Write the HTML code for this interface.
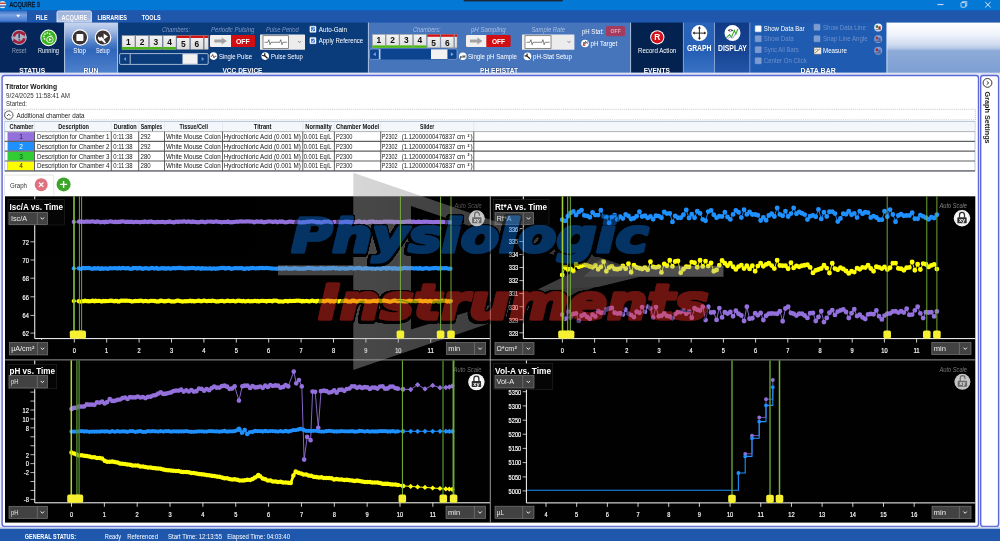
<!DOCTYPE html>
<html lang="en"><head><meta charset="utf-8"><title>ACQUIRE 3</title>
<style>
html,body{margin:0;padding:0;background:#fff;}
body{width:1000px;height:541px;overflow:hidden;font-family:'Liberation Sans', sans-serif;}
svg{display:block;font-family:"Liberation Sans",sans-serif;will-change:transform;opacity:0.9999;}
text{white-space:pre;}
</style></head><body>
<svg width="1000" height="541" viewBox="0 0 1000 541">
<defs>
<linearGradient id="gRun" x1="0" y1="0" x2="0" y2="1">
 <stop offset="0" stop-color="#c9d6ef"/><stop offset="0.18" stop-color="#9fb7e1"/>
 <stop offset="0.42" stop-color="#4b7bc6"/><stop offset="0.55" stop-color="#2f66bb"/>
 <stop offset="1" stop-color="#4f81cc"/></linearGradient>
<linearGradient id="gFill" x1="0" y1="0" x2="0" y2="1">
 <stop offset="0" stop-color="#ffffff"/><stop offset="0.25" stop-color="#eef2fa"/>
 <stop offset="0.44" stop-color="#cfdbee"/><stop offset="0.51" stop-color="#b6c9e6"/><stop offset="0.56" stop-color="#8fabd8"/>
 <stop offset="1" stop-color="#7c9fd3"/></linearGradient>
<linearGradient id="gGraph" x1="0" y1="0" x2="0" y2="1">
 <stop offset="0" stop-color="#2a64b9"/><stop offset="0.6" stop-color="#2560b6"/>
 <stop offset="1" stop-color="#3a72c4"/></linearGradient>
<linearGradient id="gDisp" x1="0" y1="0" x2="0" y2="1">
 <stop offset="0" stop-color="#113a86"/><stop offset="0.55" stop-color="#164392"/>
 <stop offset="1" stop-color="#2356a8"/></linearGradient>
<linearGradient id="gTab" x1="0" y1="0" x2="0" y2="1">
 <stop offset="0" stop-color="#a0b5dd"/><stop offset="0.6" stop-color="#a9bce1"/><stop offset="1" stop-color="#c9d6ef"/></linearGradient>
<linearGradient id="gQat" x1="0" y1="0" x2="0" y2="1">
 <stop offset="0" stop-color="#2f6cc5"/><stop offset="0.4" stop-color="#7aa2e2"/><stop offset="0.7" stop-color="#5b8bd8"/><stop offset="1" stop-color="#3f76cb"/></linearGradient>
<linearGradient id="gWm" x1="0" y1="0" x2="1" y2="0">
 <stop offset="0" stop-color="#a4a4a4"/><stop offset="0.3" stop-color="#969696"/><stop offset="1" stop-color="#6e6e6e"/></linearGradient>
<linearGradient id="gBtn" x1="0" y1="0" x2="0" y2="1">
 <stop offset="0" stop-color="#f4f4f4"/><stop offset="1" stop-color="#dcdcdc"/></linearGradient>
<filter id="fOl" x="-5%" y="-20%" width="110%" height="150%">
 <feMorphology in="SourceAlpha" operator="dilate" radius="1.9" result="d"/>
 <feGaussianBlur in="d" stdDeviation="0.5" result="g"/>
 <feComponentTransfer in="g" result="t"><feFuncA type="linear" slope="3" intercept="-0.6"/></feComponentTransfer>
 <feOffset in="t" dx="-0.6" dy="0.7" result="o"/>
 <feFlood flood-color="#000"/><feComposite in2="o" operator="in" result="b"/>
 <feMerge><feMergeNode in="b"/><feMergeNode in="SourceGraphic"/></feMerge></filter>
</defs>
<rect x="0.00" y="0.00" width="1000.00" height="11.00" fill="#0478d5" />
<rect x="463.70" y="0.00" width="99.00" height="1.40" fill="#1c2733" />
<rect x="0.00" y="10.20" width="1000.00" height="14.00" fill="#1f57ad" />
<circle cx="2.50" cy="4.60" r="3.60" fill="#e8e8ee"/>
<rect x="-1.00" y="2.60" width="7.00" height="1.30" fill="#c0392b" />
<rect x="-1.00" y="5.40" width="7.00" height="1.30" fill="#2c4fa0" />
<text x="9.60" y="7.29" font-size="7.2" fill="#0a1420" textLength="30.40" lengthAdjust="spacingAndGlyphs" stroke="#0a1420" stroke-width="0.3">ACQUIRE 3</text>
<line x1="937.50" y1="4.60" x2="943.50" y2="4.60" stroke="#e8f0fa" stroke-width="0.9" />
<rect x="961.00" y="2.60" width="4.60" height="4.60" fill="none" rx="0.6" stroke="#e8f0fa" stroke-width="0.8" />
<path d="M962.4 2.6 V1.6 H966.8 V6 H965.6" fill="none" stroke="#e8f0fa" stroke-width="0.7" />
<path d="M985.2 2 L990.6 7.4 M990.6 2 L985.2 7.4" fill="none" stroke="#f4f8fd" stroke-width="0.9" />
<rect x="0.00" y="10.60" width="27.00" height="11.00" fill="url(#gQat)" />
<path d="M16.2 14.8 H20.2 L18.2 17.4 Z" fill="#fff" />
<path d="M57 22.6 V12.6 Q57 11 58.6 11 H89.8 Q91.4 11 91.4 12.6 V22.6 Z" fill="url(#gTab)" stroke="#e6ecf9" stroke-width="0.9" />
<text x="35.75" y="20.02" font-size="7" fill="#fff" font-weight="700" textLength="11.75" lengthAdjust="spacingAndGlyphs" >FILE</text>
<text x="61.50" y="20.02" font-size="7" fill="#fff" font-weight="700" textLength="25.80" lengthAdjust="spacingAndGlyphs" stroke="#8fa3cc" stroke-width="0.5" paint-order="stroke">ACQUIRE</text>
<text x="97.50" y="20.02" font-size="7" fill="#fff" font-weight="700" textLength="29.50" lengthAdjust="spacingAndGlyphs" >LIBRARIES</text>
<text x="141.75" y="20.02" font-size="7" fill="#fff" font-weight="700" textLength="19.00" lengthAdjust="spacingAndGlyphs" >TOOLS</text>
<rect x="0.00" y="22.60" width="1000.00" height="50.20" fill="#1f57ad" />
<rect x="0.00" y="22.60" width="64.60" height="50.20" fill="#04265a" />
<rect x="64.60" y="22.60" width="53.00" height="50.20" fill="url(#gRun)" />
<rect x="117.60" y="22.60" width="250.60" height="50.20" fill="#0a3b7b" />
<rect x="368.20" y="22.60" width="262.50" height="50.20" fill="#4675bb" />
<rect x="630.70" y="22.60" width="52.60" height="50.20" fill="#04224f" />
<rect x="683.30" y="22.60" width="31.20" height="50.20" fill="url(#gGraph)" />
<rect x="714.50" y="22.60" width="35.30" height="50.20" fill="url(#gDisp)" />
<rect x="749.80" y="22.60" width="137.00" height="50.20" fill="#1f5bb0" />
<rect x="886.80" y="22.60" width="113.20" height="50.20" fill="url(#gFill)" />
<line x1="64.60" y1="22.60" x2="64.60" y2="72.80" stroke="#dfe8f7" stroke-width="0.8" />
<line x1="117.60" y1="22.60" x2="117.60" y2="72.80" stroke="#dfe8f7" stroke-width="0.8" />
<line x1="368.40" y1="22.60" x2="368.40" y2="72.80" stroke="#cfdcf2" stroke-width="0.8" />
<line x1="630.60" y1="22.60" x2="630.60" y2="72.80" stroke="#cfdcf2" stroke-width="0.8" />
<line x1="683.40" y1="22.60" x2="683.40" y2="72.80" stroke="#9db6e0" stroke-width="0.8" />
<line x1="714.50" y1="22.60" x2="714.50" y2="72.80" stroke="#9db6e0" stroke-width="0.8" />
<line x1="749.80" y1="22.60" x2="749.80" y2="72.80" stroke="#8fa9d8" stroke-width="0.8" />
<line x1="886.90" y1="22.60" x2="886.90" y2="72.80" stroke="#e8eefa" stroke-width="0.8" />
<text x="19.30" y="72.76" font-size="7.4" fill="#fff" font-weight="700" textLength="25.80" lengthAdjust="spacingAndGlyphs" stroke="#0a1e4a" stroke-opacity="0.55" stroke-width="0.7" paint-order="stroke">STATUS</text>
<text x="83.60" y="72.76" font-size="7.4" fill="#fff" font-weight="700" textLength="14.80" lengthAdjust="spacingAndGlyphs" stroke="#0a1e4a" stroke-opacity="0.55" stroke-width="0.7" paint-order="stroke">RUN</text>
<text x="222.50" y="72.76" font-size="7.4" fill="#fff" font-weight="700" textLength="40.00" lengthAdjust="spacingAndGlyphs" stroke="#0a1e4a" stroke-opacity="0.55" stroke-width="0.7" paint-order="stroke">VCC DEVICE</text>
<text x="480.00" y="72.76" font-size="7.4" fill="#fff" font-weight="700" textLength="38.00" lengthAdjust="spacingAndGlyphs" stroke="#0a1e4a" stroke-opacity="0.55" stroke-width="0.7" paint-order="stroke">PH EPISTAT</text>
<text x="643.75" y="72.76" font-size="7.4" fill="#fff" font-weight="700" textLength="26.25" lengthAdjust="spacingAndGlyphs" stroke="#0a1e4a" stroke-opacity="0.55" stroke-width="0.7" paint-order="stroke">EVENTS</text>
<text x="800.50" y="72.76" font-size="7.4" fill="#fff" font-weight="700" textLength="35.25" lengthAdjust="spacingAndGlyphs" stroke="#0a1e4a" stroke-opacity="0.55" stroke-width="0.7" paint-order="stroke">DATA BAR</text>
<circle cx="19.10" cy="37.40" r="7.70" fill="#aab3c6"/>
<g fill="none" stroke="#a51c3a" stroke-width="2.6"><path d="M13.9 36.6 A5.3 5.3 0 0 1 23.6 34.6"/><path d="M24.3 38.2 A5.3 5.3 0 0 1 14.6 40.2"/></g>
<path d="M21.4 32.2 L25.6 32.6 L24.4 36.8 Z" fill="#a51c3a" />
<path d="M16.8 42.6 L12.6 42.2 L13.8 38 Z" fill="#a51c3a" />
<rect x="18.50" y="33.60" width="1.30" height="4.60" fill="#2a2f3d" />
<rect x="18.50" y="39.20" width="1.30" height="1.40" fill="#2a2f3d" />
<text x="12.00" y="53.25" font-size="6.8" fill="#98a2b6" textLength="14.20" lengthAdjust="spacingAndGlyphs" >Reset</text>
<circle cx="48.60" cy="37.90" r="8.30" fill="#ffffff"/>
<circle cx="48.60" cy="37.90" r="7.30" fill="#3bb31f"/>
<circle cx="47.4" cy="36.6" r="3.6" fill="none" stroke="#e9f6e4" stroke-width="1.5" stroke-dasharray="1.6 1"/>
<circle cx="50.00" cy="39.60" r="3.50" fill="#eaf6e6"/>
<circle cx="50.00" cy="39.60" r="2.70" fill="#3bb31f"/>
<path d="M49 38 L51.8 39.6 L49 41.2 Z" fill="#fff" />
<text x="38.00" y="52.95" font-size="6.8" fill="#f0f4fb" textLength="20.90" lengthAdjust="spacingAndGlyphs" >Running</text>
<circle cx="79.90" cy="37.50" r="8.30" fill="#ffffff"/>
<circle cx="79.90" cy="37.50" r="7.10" fill="#3b3333"/>
<rect x="76.40" y="34.00" width="7.00" height="7.00" fill="#fff" rx="0.8" />
<text x="73.30" y="53.15" font-size="6.8" fill="#fff" textLength="12.60" lengthAdjust="spacingAndGlyphs" >Stop</text>
<circle cx="103.00" cy="37.50" r="8.30" fill="#ffffff"/>
<circle cx="103.00" cy="37.50" r="7.10" fill="#3b3333"/>
<path d="M103.6 33.4 L108 36.4 L103.6 39.4 Z" fill="#fff" />
<path d="M98.4 36.2 L100 37.8 L101.4 36.6 L103.4 38.8 L106 42.4 L104.8 43.4 L101.6 40.4 L99.6 41 L97.8 38.6 Z" fill="#fff" />
<text x="95.90" y="53.15" font-size="6.8" fill="#fff" textLength="13.80" lengthAdjust="spacingAndGlyphs" >Setup</text>
<text x="161.90" y="31.52" font-size="7" fill="#7f97c4" font-style="italic" textLength="28.10" lengthAdjust="spacingAndGlyphs" >Chambers:</text>
<rect x="122.00" y="35.60" width="12.90" height="13.80" fill="url(#gBtn)" stroke="#9a9a9a" stroke-width="0.5" />
<rect x="122.00" y="47.00" width="12.90" height="2.40" fill="#4cb814" />
<text x="128.45" y="44.52" font-size="8.4" fill="#111" font-weight="700" text-anchor="middle" >1</text>
<rect x="135.70" y="35.60" width="12.90" height="13.80" fill="url(#gBtn)" stroke="#9a9a9a" stroke-width="0.5" />
<rect x="135.70" y="47.00" width="12.90" height="2.40" fill="#4cb814" />
<text x="142.15" y="44.52" font-size="8.4" fill="#111" font-weight="700" text-anchor="middle" >2</text>
<rect x="149.40" y="35.60" width="12.90" height="13.80" fill="url(#gBtn)" stroke="#9a9a9a" stroke-width="0.5" />
<rect x="149.40" y="47.00" width="12.90" height="2.40" fill="#4cb814" />
<text x="155.85" y="44.52" font-size="8.4" fill="#111" font-weight="700" text-anchor="middle" >3</text>
<rect x="163.10" y="35.60" width="12.90" height="13.80" fill="url(#gBtn)" stroke="#9a9a9a" stroke-width="0.5" />
<rect x="163.10" y="47.00" width="12.90" height="2.40" fill="#4cb814" />
<text x="169.55" y="44.52" font-size="8.4" fill="#111" font-weight="700" text-anchor="middle" >4</text>
<rect x="176.80" y="35.60" width="12.90" height="13.80" fill="url(#gBtn)" stroke="#9a9a9a" stroke-width="0.5" />
<rect x="176.80" y="35.60" width="12.90" height="2.40" fill="#d01414" />
<text x="183.25" y="47.12" font-size="8.4" fill="#111" font-weight="700" text-anchor="middle" >5</text>
<rect x="190.50" y="35.60" width="12.90" height="13.80" fill="url(#gBtn)" stroke="#9a9a9a" stroke-width="0.5" />
<rect x="190.50" y="35.60" width="12.90" height="2.40" fill="#d01414" />
<text x="196.95" y="47.12" font-size="8.4" fill="#111" font-weight="700" text-anchor="middle" >6</text>
<rect x="204.20" y="35.60" width="4.00" height="13.80" fill="url(#gBtn)" stroke="#9a9a9a" stroke-width="0.5" />
<rect x="204.20" y="35.60" width="4.00" height="2.40" fill="#d01414" />
<rect x="119.60" y="53.60" width="88.60" height="10.80" fill="#0a3b7b" rx="1.2" stroke="#e8eef8" stroke-width="0.7" />
<rect x="182.50" y="54.10" width="15.10" height="9.80" fill="#f2f2f2" />
<line x1="130.20" y1="54.20" x2="130.20" y2="63.80" stroke="#dfe6f3" stroke-width="0.8" />
<path d="M126.10 57.10 L123.50 59.00 L126.10 60.90 Z" fill="#6f93d6" />
<path d="M201.70 57.10 L204.30 59.00 L201.70 60.90 Z" fill="#6f93d6" />
<text x="211.00" y="31.52" font-size="7" fill="#7f97c4" font-style="italic" textLength="43.40" lengthAdjust="spacingAndGlyphs" >Periodic Pulsing</text>
<rect x="210.00" y="35.00" width="45.00" height="12.00" fill="#d10f12" rx="1.3" />
<path d="M211.30 35 H231 V47 H211.30 Q210 47 210 45.7 V36.3 Q210 35 211.30 35 Z" fill="#f0f0f0" />
<path d="M214.30 39.50 H221.70 V37.40 L226.90 41.00 L221.70 44.60 V42.50 H214.30 Z" fill="#a3a3a3" />
<text x="236.00" y="43.88" font-size="8" fill="#fff" font-weight="700" textLength="13.75" lengthAdjust="spacingAndGlyphs" >OFF</text>
<text x="266.00" y="31.52" font-size="7" fill="#7f97c4" font-style="italic" textLength="32.75" lengthAdjust="spacingAndGlyphs" >Pulse Period</text>
<rect x="260.00" y="34.40" width="45.00" height="15.35" fill="#ececec" rx="0.6" />
<rect x="263.00" y="35.70" width="25.60" height="12.75" fill="#ffffff" stroke="#5a5a5a" stroke-width="0.7" />
<path d="M264.50 42.28 h3.33 l1 -2.6 l1.2 5 l1 -2.4 h8.70 l1 -2.6 l1.2 5 l1 -2.4 H287.10" fill="none" stroke="#333" stroke-width="0.6" />
<path d="M298.10 41.08 L299.60 42.68 L301.10 41.08" fill="none" stroke="#666" stroke-width="0.7" />
<circle cx="213.50" cy="56.10" r="3.80" fill="#ffffff"/>
<path d="M210.70 56.30 h1.1 l0.9 -1.8 l1.3 3.4 l0.9 -1.6 h1.4" fill="none" stroke="#222" stroke-width="0.7" />
<text x="218.90" y="58.68" font-size="6.9" fill="#fff" textLength="33.10" lengthAdjust="spacingAndGlyphs" >Single Pulse</text>
<circle cx="265.20" cy="56.10" r="3.80" fill="#ffffff"/>
<path d="M264.70 55.80 L267.20 58.00 M264.70 55.80 L262.70 55.50 M264.70 55.80 L264.80 53.70" fill="none" stroke="#1e1e1e" stroke-width="1.25" stroke-linecap="round"/>
<text x="271.00" y="58.68" font-size="6.9" fill="#fff" textLength="31.75" lengthAdjust="spacingAndGlyphs" >Pulse Setup</text>
<rect x="309.90" y="26.20" width="6.10" height="6.10" fill="#fff" rx="0.5" stroke="#dfe6f5" stroke-width="0.5" />
<rect x="311.00" y="27.30" width="3.90" height="3.90" fill="#2f6fcf" />
<path d="M311.50 29.30 l1.1 1.2 l1.9 -2.6" fill="none" stroke="#fff" stroke-width="0.8" />
<text x="318.75" y="31.88" font-size="6.9" fill="#fff" textLength="28.25" lengthAdjust="spacingAndGlyphs" >Auto-Gain</text>
<rect x="309.90" y="37.60" width="6.10" height="6.10" fill="#fff" rx="0.5" stroke="#dfe6f5" stroke-width="0.5" />
<rect x="311.00" y="38.70" width="3.90" height="3.90" fill="#2f6fcf" />
<path d="M311.50 40.70 l1.1 1.2 l1.9 -2.6" fill="none" stroke="#fff" stroke-width="0.8" />
<text x="318.75" y="43.48" font-size="6.9" fill="#fff" textLength="44.45" lengthAdjust="spacingAndGlyphs" >Apply Reference</text>
<text x="413.00" y="31.52" font-size="7" fill="#a9bde2" font-style="italic" textLength="27.60" lengthAdjust="spacingAndGlyphs" >Chambers:</text>
<rect x="372.40" y="34.40" width="12.90" height="13.40" fill="url(#gBtn)" stroke="#9a9a9a" stroke-width="0.5" />
<rect x="372.40" y="45.40" width="12.90" height="2.40" fill="#4cb814" />
<text x="378.85" y="43.12" font-size="8.4" fill="#111" font-weight="700" text-anchor="middle" >1</text>
<rect x="386.10" y="34.40" width="12.90" height="13.40" fill="url(#gBtn)" stroke="#9a9a9a" stroke-width="0.5" />
<rect x="386.10" y="45.40" width="12.90" height="2.40" fill="#4cb814" />
<text x="392.55" y="43.12" font-size="8.4" fill="#111" font-weight="700" text-anchor="middle" >2</text>
<rect x="399.80" y="34.40" width="12.90" height="13.40" fill="url(#gBtn)" stroke="#9a9a9a" stroke-width="0.5" />
<rect x="399.80" y="45.40" width="12.90" height="2.40" fill="#4cb814" />
<text x="406.25" y="43.12" font-size="8.4" fill="#111" font-weight="700" text-anchor="middle" >3</text>
<rect x="413.50" y="34.40" width="12.90" height="13.40" fill="url(#gBtn)" stroke="#9a9a9a" stroke-width="0.5" />
<rect x="413.50" y="45.40" width="12.90" height="2.40" fill="#4cb814" />
<text x="419.95" y="43.12" font-size="8.4" fill="#111" font-weight="700" text-anchor="middle" >4</text>
<rect x="427.20" y="34.40" width="12.90" height="13.40" fill="url(#gBtn)" stroke="#9a9a9a" stroke-width="0.5" />
<rect x="427.20" y="34.40" width="12.90" height="2.40" fill="#d01414" />
<text x="433.65" y="45.72" font-size="8.4" fill="#111" font-weight="700" text-anchor="middle" >5</text>
<rect x="440.90" y="34.40" width="12.90" height="13.40" fill="url(#gBtn)" stroke="#9a9a9a" stroke-width="0.5" />
<rect x="440.90" y="34.40" width="12.90" height="2.40" fill="#d01414" />
<text x="447.35" y="45.72" font-size="8.4" fill="#111" font-weight="700" text-anchor="middle" >6</text>
<rect x="454.60" y="34.40" width="2.40" height="13.40" fill="url(#gBtn)" stroke="#9a9a9a" stroke-width="0.5" />
<rect x="454.60" y="34.40" width="2.40" height="2.40" fill="#d01414" />
<rect x="369.60" y="49.00" width="87.40" height="10.40" fill="#0c4490" rx="1.2" />
<rect x="369.60" y="49.00" width="9.60" height="10.40" fill="#0c4490" rx="1.2" stroke="#c6d4ee" stroke-width="0.5" />
<rect x="447.20" y="49.00" width="9.80" height="10.40" fill="#0c4490" rx="1.2" stroke="#c6d4ee" stroke-width="0.5" />
<rect x="379.20" y="49.00" width="1.20" height="10.40" fill="#d7e1f3" />
<rect x="431.00" y="49.30" width="16.20" height="9.80" fill="#f2f2f2" />
<path d="M375.8 52.2 L373 54.2 L375.8 56.2 Z" fill="#7c9fe0" />
<path d="M450.8 52.2 L453.6 54.2 L450.8 56.2 Z" fill="#7c9fe0" />
<text x="471.00" y="31.52" font-size="7" fill="#a9bde2" font-style="italic" textLength="34.60" lengthAdjust="spacingAndGlyphs" >pH Sampling</text>
<rect x="466.00" y="35.00" width="44.60" height="12.00" fill="#d10f12" rx="1.3" />
<path d="M467.30 35 H486.3 V47 H467.30 Q466 47 466 45.7 V36.3 Q466 35 467.30 35 Z" fill="#f0f0f0" />
<path d="M469.95 39.50 H477.35 V37.40 L482.55 41.00 L477.35 44.60 V42.50 H469.95 Z" fill="#a3a3a3" />
<text x="491.90" y="43.88" font-size="8" fill="#fff" font-weight="700" textLength="13.10" lengthAdjust="spacingAndGlyphs" >OFF</text>
<circle cx="462.80" cy="56.20" r="3.80" fill="#ffffff"/>
<text x="462.80" y="57.81" font-size="4.2" fill="#111" font-weight="700" text-anchor="middle" >pH</text>
<text x="468.00" y="58.68" font-size="6.9" fill="#fff" textLength="49.00" lengthAdjust="spacingAndGlyphs" >Single pH Sample</text>
<text x="531.50" y="31.52" font-size="7" fill="#a9bde2" font-style="italic" textLength="33.50" lengthAdjust="spacingAndGlyphs" >Sample Rate</text>
<rect x="522.00" y="34.40" width="52.40" height="15.35" fill="#ececec" rx="0.6" />
<rect x="525.00" y="35.70" width="26.00" height="12.75" fill="#ffffff" stroke="#5a5a5a" stroke-width="0.7" />
<path d="M526.50 42.28 h3.38 l1 -2.6 l1.2 5 l1 -2.4 h8.84 l1 -2.6 l1.2 5 l1 -2.4 H549.50" fill="none" stroke="#333" stroke-width="0.6" />
<path d="M567.50 41.08 L569.00 42.68 L570.50 41.08" fill="none" stroke="#666" stroke-width="0.7" />
<circle cx="527.50" cy="56.40" r="3.80" fill="#ffffff"/>
<path d="M527.00 56.10 L529.50 58.30 M527.00 56.10 L525.00 55.80 M527.00 56.10 L527.10 54.00" fill="none" stroke="#1e1e1e" stroke-width="1.25" stroke-linecap="round"/>
<text x="533.00" y="58.68" font-size="6.9" fill="#fff" textLength="39.00" lengthAdjust="spacingAndGlyphs" >pH-Stat Setup</text>
<text x="582.00" y="33.78" font-size="6.9" fill="#fff" textLength="21.75" lengthAdjust="spacingAndGlyphs" >pH Stat:</text>
<rect x="606.00" y="26.00" width="19.00" height="10.20" fill="#a53b5e" rx="1.2" />
<text x="610.60" y="33.43" font-size="6.2" fill="#e3a9ba" font-weight="700" textLength="10.20" lengthAdjust="spacingAndGlyphs" >OFF</text>
<circle cx="585.00" cy="43.50" r="3.80" fill="#ffffff"/>
<text x="585.30" y="44.20" font-size="3.6" fill="#222" font-weight="700" text-anchor="middle" >pH</text>
<rect x="582.80" y="44.40" width="2.60" height="1.30" fill="#c81a1a" />
<text x="590.60" y="46.08" font-size="6.9" fill="#fff" textLength="26.65" lengthAdjust="spacingAndGlyphs" >pH Target</text>
<circle cx="657.30" cy="37.30" r="7.10" fill="#ffffff"/>
<circle cx="657.30" cy="37.30" r="6.10" fill="#d0101a"/>
<text x="657.30" y="40.42" font-size="8.4" fill="#fff" font-weight="700" text-anchor="middle" >R</text>
<text x="638.00" y="52.75" font-size="6.8" fill="#fff" textLength="38.25" lengthAdjust="spacingAndGlyphs" >Record Action</text>
<circle cx="699.40" cy="33.10" r="8.00" fill="#ffffff"/>
<g stroke="#222" stroke-width="1.0" fill="#222"><path d="M699.4 27.4 V38.8 M693.7 33.1 H705.1" fill="none"/><path d="M699.4 26.2 l1.5 2.2 h-3 Z M699.4 40 l1.5 -2.2 h-3 Z M692.5 33.1 l2.2 -1.5 v3 Z M706.3 33.1 l-2.2 -1.5 v3 Z" stroke="none"/></g>
<text x="686.90" y="51.45" font-size="8.2" fill="#fff" font-weight="700" textLength="24.60" lengthAdjust="spacingAndGlyphs" >GRAPH</text>
<circle cx="732.50" cy="33.10" r="8.00" fill="#ffffff"/>
<path d="M726.5 37.6 L729.6 34.6 L731.4 37.4 L734.4 30.4 L735.8 34.2 L737.8 29" fill="none" stroke="#2fae2a" stroke-width="1.1" />
<path d="M727.4 39.2 L730.6 36.2 L732.8 38.4 L735.6 33.4" fill="none" stroke="#9b7fe0" stroke-width="0.7" />
<path d="M727.6 30.4 Q730.2 27.4 733.6 30.4 Q730.2 32.6 727.6 30.4 Z" fill="#444" />
<circle cx="730.50" cy="30.20" r="0.80" fill="#fff"/>
<text x="718.00" y="51.45" font-size="8.2" fill="#fff" font-weight="700" textLength="28.90" lengthAdjust="spacingAndGlyphs" >DISPLAY</text>
<rect x="755.20" y="25.80" width="6.00" height="6.00" fill="#ffffff" rx="0.5" stroke="#dfe6f5" stroke-width="0.5" />
<text x="763.75" y="31.28" font-size="6.9" fill="#fff" textLength="40.95" lengthAdjust="spacingAndGlyphs" >Show Data Bar</text>
<rect x="755.20" y="35.80" width="6.00" height="6.00" fill="#7d9bd0" rx="0.5" stroke="#8aa6d8" stroke-width="0.5" />
<text x="763.75" y="41.23" font-size="6.9" fill="#6e8fcb" textLength="30.00" lengthAdjust="spacingAndGlyphs" >Show Data</text>
<rect x="755.20" y="46.70" width="6.00" height="6.00" fill="#7d9bd0" rx="0.5" stroke="#8aa6d8" stroke-width="0.5" />
<text x="763.75" y="52.18" font-size="6.9" fill="#6e8fcb" textLength="34.95" lengthAdjust="spacingAndGlyphs" >Sync All Bars</text>
<rect x="755.20" y="57.80" width="6.00" height="6.00" fill="#7d9bd0" rx="0.5" stroke="#8aa6d8" stroke-width="0.5" />
<text x="763.75" y="63.28" font-size="6.9" fill="#6e8fcb" textLength="43.05" lengthAdjust="spacingAndGlyphs" >Center On Click</text>
<rect x="814.00" y="24.20" width="6.00" height="6.00" fill="#7d9bd0" rx="0.5" stroke="#8aa6d8" stroke-width="0.5" />
<text x="823.00" y="29.68" font-size="6.9" fill="#6e8fcb" textLength="42.75" lengthAdjust="spacingAndGlyphs" >Show Data Line</text>
<rect x="814.00" y="35.80" width="6.00" height="6.00" fill="#7d9bd0" rx="0.5" stroke="#8aa6d8" stroke-width="0.5" />
<text x="823.00" y="41.23" font-size="6.9" fill="#6e8fcb" textLength="44.70" lengthAdjust="spacingAndGlyphs" >Snap Line Angle</text>
<rect x="814.00" y="47.40" width="7.40" height="6.80" fill="#f4f1ea" rx="0.5" stroke="#555" stroke-width="0.5" />
<path d="M815.2 52.8 L820 48.8" fill="none" stroke="#7a5a30" stroke-width="0.8" />
<path d="M815 50.2 q1.6 -2 3 -0.6" fill="none" stroke="#555" stroke-width="0.5" />
<text x="823.00" y="53.23" font-size="6.9" fill="#fff" textLength="24.00" lengthAdjust="spacingAndGlyphs" >Measure</text>
<circle cx="878.20" cy="27.50" r="4.00" fill="#e9edf6"/>
<rect x="875.80" y="25.30" width="2.20" height="2.60" fill="#2c8a2c" />
<rect x="878.40" y="26.30" width="2.20" height="2.80" fill="#b02020" />
<path d="M875.4 29.70 h5.6" fill="none" stroke="#223" stroke-width="0.6" />
<circle cx="878.20" cy="39.00" r="4.00" fill="#7f9bd0"/>
<rect x="875.80" y="36.80" width="2.20" height="2.60" fill="#b03030" />
<rect x="878.40" y="37.80" width="2.20" height="2.80" fill="#4060b0" />
<path d="M875.4 41.20 h5.6" fill="none" stroke="#223" stroke-width="0.6" />
<circle cx="878.20" cy="50.75" r="4.00" fill="#7f9bd0"/>
<rect x="875.80" y="48.55" width="2.20" height="2.60" fill="#b02020" />
<rect x="878.40" y="49.55" width="2.20" height="2.80" fill="#4060b0" />
<path d="M875.4 52.95 h5.6" fill="none" stroke="#223" stroke-width="0.6" />
<rect x="0.00" y="72.80" width="1000.00" height="468.40" fill="#eef1fb" />
<rect x="0.00" y="72.80" width="1000.00" height="2.40" fill="#dfe5f6" />
<rect x="2.10" y="75.50" width="976.40" height="451.00" fill="#ffffff" rx="2.4" stroke="#5c68d4" stroke-width="1.4" />
<rect x="980.70" y="75.50" width="17.90" height="451.00" fill="#ffffff" rx="2.4" stroke="#5c68d4" stroke-width="1.4" />
<rect x="0.00" y="526.90" width="1000.00" height="2.20" fill="#c9d5f0" />
<rect x="0.00" y="528.80" width="1000.00" height="12.20" fill="#1f57ad" />
<text x="24.80" y="539.08" font-size="6.9" fill="#fff" font-weight="700" textLength="51.20" lengthAdjust="spacingAndGlyphs" >GENERAL STATUS:</text>
<text x="104.80" y="539.05" font-size="6.8" fill="#fff" textLength="16.40" lengthAdjust="spacingAndGlyphs" >Ready</text>
<text x="127.20" y="539.05" font-size="6.8" fill="#fff" textLength="30.80" lengthAdjust="spacingAndGlyphs" >Referenced</text>
<text x="168.00" y="539.05" font-size="6.8" fill="#fff" textLength="54.00" lengthAdjust="spacingAndGlyphs" >Start Time: 12:13:55</text>
<text x="227.20" y="539.05" font-size="6.8" fill="#fff" textLength="62.80" lengthAdjust="spacingAndGlyphs" >Elapsed Time: 04:03:40</text>
<circle cx="987.50" cy="82.90" r="4.40" fill="#fff" stroke="#2a2a2a" stroke-width="0.95"/>
<path d="M986.7 81.2 L988.7 82.9 L986.7 84.6" fill="none" stroke="#2a2a2a" stroke-width="0.95" />
<text transform="translate(985 91.6) rotate(90)" font-size="7.8" font-weight="700" fill="#1c1c1c" textLength="52" lengthAdjust="spacingAndGlyphs">Graph Settings</text>
<text x="5.20" y="89.09" font-size="7.2" fill="#111" font-weight="700" textLength="51.80" lengthAdjust="spacingAndGlyphs" >Titrator Working</text>
<text x="6.00" y="97.98" font-size="6.6" fill="#333" textLength="64.00" lengthAdjust="spacingAndGlyphs" >9/24/2025 11:58:41 AM</text>
<text x="6.00" y="106.13" font-size="6.6" fill="#333" textLength="21.00" lengthAdjust="spacingAndGlyphs" >Started:</text>
<rect x="4.40" y="109.30" width="971.00" height="10.60" fill="#ffffff" stroke="#a8a8a8" stroke-width="0.6" stroke-dasharray="1.2 0.9"/>
<circle cx="8.80" cy="115.10" r="4.20" fill="#fff" stroke="#333" stroke-width="0.8"/>
<path d="M7 116 L8.8 114.2 L10.6 116" fill="none" stroke="#222" stroke-width="0.8" />
<text x="16.50" y="117.81" font-size="6.7" fill="#222" textLength="68.00" lengthAdjust="spacingAndGlyphs" >Additional chamber data</text>
<rect x="4.80" y="121.60" width="970.20" height="49.60" fill="#ffffff" stroke="#9fb3cf" stroke-width="0.7" />
<rect x="5.20" y="122.00" width="969.40" height="9.40" fill="#f3f6fb" />
<text x="9.50" y="128.98" font-size="6.6" fill="#111" font-weight="700" textLength="24.00" lengthAdjust="spacingAndGlyphs" >Chamber</text>
<text x="58.30" y="128.98" font-size="6.6" fill="#111" font-weight="700" textLength="30.70" lengthAdjust="spacingAndGlyphs" >Description</text>
<text x="113.80" y="128.98" font-size="6.6" fill="#111" font-weight="700" textLength="22.95" lengthAdjust="spacingAndGlyphs" >Duration</text>
<text x="140.80" y="128.98" font-size="6.6" fill="#111" font-weight="700" textLength="21.45" lengthAdjust="spacingAndGlyphs" >Samples</text>
<text x="179.50" y="128.98" font-size="6.6" fill="#111" font-weight="700" textLength="28.50" lengthAdjust="spacingAndGlyphs" >Tissue/Cell</text>
<text x="253.80" y="128.98" font-size="6.6" fill="#111" font-weight="700" textLength="17.70" lengthAdjust="spacingAndGlyphs" >Titrant</text>
<text x="305.25" y="128.98" font-size="6.6" fill="#111" font-weight="700" textLength="26.55" lengthAdjust="spacingAndGlyphs" >Normality</text>
<text x="336.00" y="128.98" font-size="6.6" fill="#111" font-weight="700" textLength="43.20" lengthAdjust="spacingAndGlyphs" >Chamber Model</text>
<text x="420.00" y="128.98" font-size="6.6" fill="#111" font-weight="700" textLength="14.25" lengthAdjust="spacingAndGlyphs" >Slider</text>
<line x1="34.50" y1="122.00" x2="34.50" y2="131.40" stroke="#d9dfea" stroke-width="0.5" />
<line x1="111.30" y1="122.00" x2="111.30" y2="131.40" stroke="#d9dfea" stroke-width="0.5" />
<line x1="138.70" y1="122.00" x2="138.70" y2="131.40" stroke="#d9dfea" stroke-width="0.5" />
<line x1="164.50" y1="122.00" x2="164.50" y2="131.40" stroke="#d9dfea" stroke-width="0.5" />
<line x1="222.50" y1="122.00" x2="222.50" y2="131.40" stroke="#d9dfea" stroke-width="0.5" />
<line x1="302.80" y1="122.00" x2="302.80" y2="131.40" stroke="#d9dfea" stroke-width="0.5" />
<line x1="334.40" y1="122.00" x2="334.40" y2="131.40" stroke="#d9dfea" stroke-width="0.5" />
<line x1="380.70" y1="122.00" x2="380.70" y2="131.40" stroke="#d9dfea" stroke-width="0.5" />
<line x1="473.80" y1="122.00" x2="473.80" y2="131.40" stroke="#d9dfea" stroke-width="0.5" />
<rect x="7.90" y="132.10" width="26.30" height="8.90" fill="#9370db" />
<text x="21.00" y="138.98" font-size="6.6" fill="#222" text-anchor="middle" >1</text>
<text x="37.10" y="138.98" font-size="6.6" fill="#161616" textLength="72.40" lengthAdjust="spacingAndGlyphs" >Description for Chamber 1</text>
<text x="113.20" y="138.98" font-size="6.6" fill="#161616" textLength="19.50" lengthAdjust="spacingAndGlyphs" >0:11:38</text>
<text x="140.50" y="138.98" font-size="6.6" fill="#161616" textLength="10.20" lengthAdjust="spacingAndGlyphs" >292</text>
<text x="166.00" y="138.98" font-size="6.6" fill="#161616" textLength="54.75" lengthAdjust="spacingAndGlyphs" >White Mouse Colon</text>
<text x="223.80" y="138.98" font-size="6.6" fill="#161616" textLength="76.95" lengthAdjust="spacingAndGlyphs" >Hydrochloric Acid (0.001 M)</text>
<text x="303.75" y="138.98" font-size="6.6" fill="#161616" textLength="27.75" lengthAdjust="spacingAndGlyphs" >0.001 Eq/L</text>
<text x="336.00" y="138.98" font-size="6.6" fill="#161616" textLength="16.50" lengthAdjust="spacingAndGlyphs" >P2300</text>
<text y="138.98" font-size="6.6" fill="#161616"><tspan x="381.75" textLength="15.75" lengthAdjust="spacingAndGlyphs">P2302</tspan><tspan>  </tspan><tspan x="401.7" textLength="63.3" lengthAdjust="spacingAndGlyphs">(1.12000000476837 cm</tspan><tspan> </tspan><tspan x="467.4" dy="-2.2" font-size="3.6" font-weight="700">2</tspan><tspan x="470.6" dy="2.2">)</tspan></text>
<rect x="7.90" y="141.90" width="26.30" height="8.90" fill="#1e90ff" />
<text x="21.00" y="148.78" font-size="6.6" fill="#fff" text-anchor="middle" >2</text>
<text x="37.10" y="148.78" font-size="6.6" fill="#161616" textLength="72.40" lengthAdjust="spacingAndGlyphs" >Description for Chamber 2</text>
<text x="113.20" y="148.78" font-size="6.6" fill="#161616" textLength="19.50" lengthAdjust="spacingAndGlyphs" >0:11:38</text>
<text x="140.50" y="148.78" font-size="6.6" fill="#161616" textLength="10.20" lengthAdjust="spacingAndGlyphs" >292</text>
<text x="166.00" y="148.78" font-size="6.6" fill="#161616" textLength="54.75" lengthAdjust="spacingAndGlyphs" >White Mouse Colon</text>
<text x="223.80" y="148.78" font-size="6.6" fill="#161616" textLength="76.95" lengthAdjust="spacingAndGlyphs" >Hydrochloric Acid (0.001 M)</text>
<text x="303.75" y="148.78" font-size="6.6" fill="#161616" textLength="27.75" lengthAdjust="spacingAndGlyphs" >0.001 Eq/L</text>
<text x="336.00" y="148.78" font-size="6.6" fill="#161616" textLength="16.50" lengthAdjust="spacingAndGlyphs" >P2300</text>
<text y="148.78" font-size="6.6" fill="#161616"><tspan x="381.75" textLength="15.75" lengthAdjust="spacingAndGlyphs">P2302</tspan><tspan>  </tspan><tspan x="401.7" textLength="63.3" lengthAdjust="spacingAndGlyphs">(1.12000000476837 cm</tspan><tspan> </tspan><tspan x="467.4" dy="-2.2" font-size="3.6" font-weight="700">2</tspan><tspan x="470.6" dy="2.2">)</tspan></text>
<rect x="7.90" y="151.70" width="26.30" height="8.90" fill="#32cd32" />
<text x="21.00" y="158.58" font-size="6.6" fill="#143" text-anchor="middle" >3</text>
<text x="37.10" y="158.58" font-size="6.6" fill="#161616" textLength="72.40" lengthAdjust="spacingAndGlyphs" >Description for Chamber 3</text>
<text x="113.20" y="158.58" font-size="6.6" fill="#161616" textLength="19.50" lengthAdjust="spacingAndGlyphs" >0:11:38</text>
<text x="140.50" y="158.58" font-size="6.6" fill="#161616" textLength="10.20" lengthAdjust="spacingAndGlyphs" >280</text>
<text x="166.00" y="158.58" font-size="6.6" fill="#161616" textLength="54.75" lengthAdjust="spacingAndGlyphs" >White Mouse Colon</text>
<text x="223.80" y="158.58" font-size="6.6" fill="#161616" textLength="76.95" lengthAdjust="spacingAndGlyphs" >Hydrochloric Acid (0.001 M)</text>
<text x="303.75" y="158.58" font-size="6.6" fill="#161616" textLength="27.75" lengthAdjust="spacingAndGlyphs" >0.001 Eq/L</text>
<text x="336.00" y="158.58" font-size="6.6" fill="#161616" textLength="16.50" lengthAdjust="spacingAndGlyphs" >P2300</text>
<text y="158.58" font-size="6.6" fill="#161616"><tspan x="381.75" textLength="15.75" lengthAdjust="spacingAndGlyphs">P2302</tspan><tspan>  </tspan><tspan x="401.7" textLength="63.3" lengthAdjust="spacingAndGlyphs">(1.12000000476837 cm</tspan><tspan> </tspan><tspan x="467.4" dy="-2.2" font-size="3.6" font-weight="700">2</tspan><tspan x="470.6" dy="2.2">)</tspan></text>
<rect x="7.90" y="161.50" width="26.30" height="8.90" fill="#ffff00" />
<text x="21.00" y="168.38" font-size="6.6" fill="#222" text-anchor="middle" >4</text>
<text x="37.10" y="168.38" font-size="6.6" fill="#161616" textLength="72.40" lengthAdjust="spacingAndGlyphs" >Description for Chamber 4</text>
<text x="113.20" y="168.38" font-size="6.6" fill="#161616" textLength="19.50" lengthAdjust="spacingAndGlyphs" >0:11:38</text>
<text x="140.50" y="168.38" font-size="6.6" fill="#161616" textLength="10.20" lengthAdjust="spacingAndGlyphs" >280</text>
<text x="166.00" y="168.38" font-size="6.6" fill="#161616" textLength="54.75" lengthAdjust="spacingAndGlyphs" >White Mouse Colon</text>
<text x="223.80" y="168.38" font-size="6.6" fill="#161616" textLength="76.95" lengthAdjust="spacingAndGlyphs" >Hydrochloric Acid (0.001 M)</text>
<text x="303.75" y="168.38" font-size="6.6" fill="#161616" textLength="27.75" lengthAdjust="spacingAndGlyphs" >0.001 Eq/L</text>
<text x="336.00" y="168.38" font-size="6.6" fill="#161616" textLength="16.50" lengthAdjust="spacingAndGlyphs" >P2300</text>
<text y="168.38" font-size="6.6" fill="#161616"><tspan x="381.75" textLength="15.75" lengthAdjust="spacingAndGlyphs">P2302</tspan><tspan>  </tspan><tspan x="401.7" textLength="63.3" lengthAdjust="spacingAndGlyphs">(1.12000000476837 cm</tspan><tspan> </tspan><tspan x="467.4" dy="-2.2" font-size="3.6" font-weight="700">2</tspan><tspan x="470.6" dy="2.2">)</tspan></text>
<line x1="4.80" y1="131.60" x2="975.00" y2="131.60" stroke="#a0a0a0" stroke-width="0.8" />
<line x1="4.80" y1="141.40" x2="975.00" y2="141.40" stroke="#606060" stroke-width="1.2" />
<line x1="4.80" y1="151.20" x2="975.00" y2="151.20" stroke="#606060" stroke-width="1.2" />
<line x1="4.80" y1="161.00" x2="975.00" y2="161.00" stroke="#606060" stroke-width="1.2" />
<line x1="4.80" y1="170.80" x2="975.00" y2="170.80" stroke="#606060" stroke-width="1.2" />
<line x1="34.50" y1="131.60" x2="34.50" y2="170.80" stroke="#505050" stroke-width="0.9" />
<line x1="111.30" y1="131.60" x2="111.30" y2="170.80" stroke="#505050" stroke-width="0.9" />
<line x1="138.70" y1="131.60" x2="138.70" y2="170.80" stroke="#505050" stroke-width="0.9" />
<line x1="164.50" y1="131.60" x2="164.50" y2="170.80" stroke="#505050" stroke-width="0.9" />
<line x1="222.50" y1="131.60" x2="222.50" y2="170.80" stroke="#505050" stroke-width="0.9" />
<line x1="302.80" y1="131.60" x2="302.80" y2="170.80" stroke="#505050" stroke-width="0.9" />
<line x1="334.40" y1="131.60" x2="334.40" y2="170.80" stroke="#505050" stroke-width="0.9" />
<line x1="380.70" y1="131.60" x2="380.70" y2="170.80" stroke="#505050" stroke-width="0.9" />
<line x1="473.80" y1="131.60" x2="473.80" y2="170.80" stroke="#505050" stroke-width="0.9" />
<line x1="7.60" y1="131.60" x2="7.60" y2="170.80" stroke="#8a8a8a" stroke-width="0.5" />
<path d="M4.4 195.6 V176.4 Q4.4 175 5.8 175 H52.4 Q53.8 175 53.8 176.4 V195.6" fill="#fff" stroke="#d5d5d5" stroke-width="0.6" />
<text x="10.00" y="187.78" font-size="6.6" fill="#333" textLength="17.00" lengthAdjust="spacingAndGlyphs" >Graph</text>
<circle cx="41.20" cy="184.70" r="6.50" fill="#e0717f"/>
<path d="M39 182.5 L43.4 186.9 M43.4 182.5 L39 186.9" fill="none" stroke="#fff" stroke-width="1.2" />
<circle cx="63.60" cy="184.40" r="7.00" fill="#3aa528"/>
<path d="M63.6 180.9 V187.9 M60.1 184.4 H67.1" fill="none" stroke="#fff" stroke-width="1.4" />
<rect x="5.00" y="196.30" width="970.30" height="326.30" fill="#000" />
<path d="M78.8 221.71 L80.1 221.52 L81.4 222.07 L82.7 221.43 L84.0 221.94 L85.3 221.75 L86.6 221.41 L87.9 221.91 L89.2 221.39 L90.5 221.83 L91.8 221.43 L93.1 221.45 L94.4 221.82 L95.7 222.26 L97.0 221.49 L98.3 221.60 L99.5 222.04 L100.8 222.39 L102.1 221.98 L103.4 221.79 L104.7 222.42 L106.0 221.40 L107.3 222.29 L108.6 221.67 L109.9 221.51 L111.2 221.48 L112.5 221.69 L113.8 222.25 L115.1 221.55 L116.4 221.99 L117.7 222.05 L119.0 221.76 L120.3 221.95 L121.6 221.42 L122.9 221.42 L124.2 221.58 L125.5 222.10 L126.8 221.82 L128.1 221.70 L129.4 221.99 L130.7 221.85 L132.0 221.68 L133.3 222.22 L134.6 222.12 L135.9 221.62 L137.2 221.98 L138.5 221.93 L139.8 222.31 L141.0 222.15 L142.3 221.67 L143.6 222.43 L144.9 221.48 L146.2 221.81 L147.5 222.18 L148.8 221.52 L150.1 221.89 L151.4 221.39 L152.7 222.09 L154.0 222.19 L155.3 221.98 L156.6 222.31 L157.9 221.70 L159.2 222.11 L160.5 222.00 L161.8 221.99 L163.1 221.85 L164.4 222.27 L165.7 222.39 L167.0 221.87 L168.3 222.08 L169.6 221.42 L170.9 222.12 L172.2 222.06 L173.5 222.44 L174.8 222.25 L176.1 221.66 L177.4 221.77 L178.7 222.09 L180.0 221.37 L181.3 221.86 L182.5 221.53 L183.8 221.48 L185.1 221.41 L186.4 222.20 L187.7 221.49 L189.0 221.62 L190.3 221.78 L191.6 222.31 L192.9 221.44 L194.2 221.84 L195.5 221.95 L196.8 222.32 L198.1 222.25 L199.4 222.30 L200.7 221.66 L202.0 221.81 L203.3 221.74 L204.6 222.32 L205.9 222.40 L207.2 221.52 L208.5 221.54 L209.8 221.61 L211.1 221.61 L212.4 221.88 L213.7 222.00 L215.0 221.64 L216.3 221.35 L217.6 221.81 L218.9 221.76 L220.2 221.97 L221.5 222.40 L222.8 222.11 L224.0 221.92 L225.3 222.03 L226.6 222.09 L227.9 221.41 L229.2 222.34 L230.5 222.21 L231.8 222.31 L233.1 222.23 L234.4 221.78 L235.7 221.79 L237.0 221.46 L238.3 222.05 L239.6 221.42 L240.9 221.42 L242.2 221.58 L243.5 221.53 L244.8 221.72 L246.1 221.41 L247.4 221.35 L248.7 221.52 L250.0 221.46 L251.3 221.75 L252.6 221.38 L253.9 222.31 L255.2 222.03 L256.5 221.51 L257.8 221.63 L259.1 221.73 L260.4 221.75 L261.7 221.49 L263.0 222.28 L264.3 222.44 L265.5 221.86 L266.8 221.88 L268.1 221.44 L269.4 221.46 L270.7 221.73 L272.0 221.64 L273.3 222.26 L274.6 221.53 L275.9 221.38 L277.2 222.40 L278.5 221.93 L279.8 221.51 L281.1 221.95 L282.4 221.38 L283.7 221.93 L285.0 222.43 L286.3 222.30 L287.6 222.12 L288.9 221.64 L290.2 221.75 L291.5 221.53 L292.8 222.20 L294.1 221.94 L295.4 222.21 L296.7 221.71 L298.0 221.60 L299.3 222.24 L300.6 222.43 L301.9 222.29 L303.2 222.24 L304.5 222.25 L305.8 222.16 L307.0 221.60 L308.3 221.92 L309.6 221.74 L310.9 221.38 L312.2 221.38 L313.5 221.66 L314.8 221.64 L316.1 222.11 L317.4 222.40 L318.7 221.84 L320.0 222.38 L321.3 222.44 L322.6 222.40 L323.9 221.75 L325.2 221.59 L326.5 221.60 L327.8 221.57 L329.1 221.57 L330.4 222.04 L331.7 222.34 L333.0 222.27 L334.3 221.88 L335.6 222.07 L336.9 222.23 L338.2 221.44 L339.5 222.08 L340.8 222.35 L342.1 222.21 L343.4 222.18 L344.7 221.88 L346.0 221.55 L347.3 222.22 L348.5 221.72 L349.8 222.23 L351.1 222.42 L352.4 221.79 L353.7 221.79 L355.0 222.39 L356.3 222.15 L357.6 221.54 L358.9 221.49 L360.2 221.52 L361.5 222.35 L362.8 222.24 L364.1 221.51 L365.4 222.26 L366.7 222.43 L368.0 222.07 L369.3 221.74 L370.6 221.95 L371.9 221.49 L373.2 221.37 L374.5 222.42 L375.8 222.06 L377.1 221.93 L378.4 222.38 L379.7 221.83 L381.0 222.31 L382.3 222.26 L383.6 221.58 L384.9 221.63 L386.2 221.67 L387.5 221.61 L388.8 222.00 L390.0 221.64 L391.3 221.81 L392.6 221.49 L393.9 222.35 L395.2 221.74 L396.5 221.85 L397.8 221.99 L399.1 222.34 L400.4 221.81 L401.7 222.36 L403.0 221.90 L404.3 221.94 L405.6 221.93 L406.9 221.37 L408.2 221.83 L409.5 221.55 L410.8 221.35 L412.1 222.23 L413.4 221.54 L414.7 221.87 L416.0 222.15 L417.3 221.96 L418.6 221.71 L419.9 221.92 L421.2 221.96 L422.5 222.21 L423.8 221.47 L425.1 221.97 L426.4 221.62 L427.7 221.65 L429.0 222.20 L430.3 221.91 L431.5 221.97 L432.8 222.19 L434.1 222.35 L435.4 221.84 L436.7 222.02 L438.0 221.91 L439.3 221.91 L440.6 222.11 L441.9 221.85 L443.2 221.94 L444.5 221.88 L445.8 222.39 L447.1 222.12 L448.4 222.31 L449.7 222.39 L451.0 221.64" fill="none" stroke="#9370db" stroke-width="2.5799999999999996" stroke-linejoin="round"/>
<path d="M78.8 221.71 L80.1 221.52 L81.4 222.07 L82.7 221.43 L84.0 221.94 L85.3 221.75 L86.6 221.41 L87.9 221.91 L89.2 221.39 L90.5 221.83 L91.8 221.43 L93.1 221.45 L94.4 221.82 L95.7 222.26 L97.0 221.49 L98.3 221.60 L99.5 222.04 L100.8 222.39 L102.1 221.98 L103.4 221.79 L104.7 222.42 L106.0 221.40 L107.3 222.29 L108.6 221.67 L109.9 221.51 L111.2 221.48 L112.5 221.69 L113.8 222.25 L115.1 221.55 L116.4 221.99 L117.7 222.05 L119.0 221.76 L120.3 221.95 L121.6 221.42 L122.9 221.42 L124.2 221.58 L125.5 222.10 L126.8 221.82 L128.1 221.70 L129.4 221.99 L130.7 221.85 L132.0 221.68 L133.3 222.22 L134.6 222.12 L135.9 221.62 L137.2 221.98 L138.5 221.93 L139.8 222.31 L141.0 222.15 L142.3 221.67 L143.6 222.43 L144.9 221.48 L146.2 221.81 L147.5 222.18 L148.8 221.52 L150.1 221.89 L151.4 221.39 L152.7 222.09 L154.0 222.19 L155.3 221.98 L156.6 222.31 L157.9 221.70 L159.2 222.11 L160.5 222.00 L161.8 221.99 L163.1 221.85 L164.4 222.27 L165.7 222.39 L167.0 221.87 L168.3 222.08 L169.6 221.42 L170.9 222.12 L172.2 222.06 L173.5 222.44 L174.8 222.25 L176.1 221.66 L177.4 221.77 L178.7 222.09 L180.0 221.37 L181.3 221.86 L182.5 221.53 L183.8 221.48 L185.1 221.41 L186.4 222.20 L187.7 221.49 L189.0 221.62 L190.3 221.78 L191.6 222.31 L192.9 221.44 L194.2 221.84 L195.5 221.95 L196.8 222.32 L198.1 222.25 L199.4 222.30 L200.7 221.66 L202.0 221.81 L203.3 221.74 L204.6 222.32 L205.9 222.40 L207.2 221.52 L208.5 221.54 L209.8 221.61 L211.1 221.61 L212.4 221.88 L213.7 222.00 L215.0 221.64 L216.3 221.35 L217.6 221.81 L218.9 221.76 L220.2 221.97 L221.5 222.40 L222.8 222.11 L224.0 221.92 L225.3 222.03 L226.6 222.09 L227.9 221.41 L229.2 222.34 L230.5 222.21 L231.8 222.31 L233.1 222.23 L234.4 221.78 L235.7 221.79 L237.0 221.46 L238.3 222.05 L239.6 221.42 L240.9 221.42 L242.2 221.58 L243.5 221.53 L244.8 221.72 L246.1 221.41 L247.4 221.35 L248.7 221.52 L250.0 221.46 L251.3 221.75 L252.6 221.38 L253.9 222.31 L255.2 222.03 L256.5 221.51 L257.8 221.63 L259.1 221.73 L260.4 221.75 L261.7 221.49 L263.0 222.28 L264.3 222.44 L265.5 221.86 L266.8 221.88 L268.1 221.44 L269.4 221.46 L270.7 221.73 L272.0 221.64 L273.3 222.26 L274.6 221.53 L275.9 221.38 L277.2 222.40 L278.5 221.93 L279.8 221.51 L281.1 221.95 L282.4 221.38 L283.7 221.93 L285.0 222.43 L286.3 222.30 L287.6 222.12 L288.9 221.64 L290.2 221.75 L291.5 221.53 L292.8 222.20 L294.1 221.94 L295.4 222.21 L296.7 221.71 L298.0 221.60 L299.3 222.24 L300.6 222.43 L301.9 222.29 L303.2 222.24 L304.5 222.25 L305.8 222.16 L307.0 221.60 L308.3 221.92 L309.6 221.74 L310.9 221.38 L312.2 221.38 L313.5 221.66 L314.8 221.64 L316.1 222.11 L317.4 222.40 L318.7 221.84 L320.0 222.38 L321.3 222.44 L322.6 222.40 L323.9 221.75 L325.2 221.59 L326.5 221.60 L327.8 221.57 L329.1 221.57 L330.4 222.04 L331.7 222.34 L333.0 222.27 L334.3 221.88 L335.6 222.07 L336.9 222.23 L338.2 221.44 L339.5 222.08 L340.8 222.35 L342.1 222.21 L343.4 222.18 L344.7 221.88 L346.0 221.55 L347.3 222.22 L348.5 221.72 L349.8 222.23 L351.1 222.42 L352.4 221.79 L353.7 221.79 L355.0 222.39 L356.3 222.15 L357.6 221.54 L358.9 221.49 L360.2 221.52 L361.5 222.35 L362.8 222.24 L364.1 221.51 L365.4 222.26 L366.7 222.43 L368.0 222.07 L369.3 221.74 L370.6 221.95 L371.9 221.49 L373.2 221.37 L374.5 222.42 L375.8 222.06 L377.1 221.93 L378.4 222.38 L379.7 221.83 L381.0 222.31 L382.3 222.26 L383.6 221.58 L384.9 221.63 L386.2 221.67 L387.5 221.61 L388.8 222.00 L390.0 221.64 L391.3 221.81 L392.6 221.49 L393.9 222.35 L395.2 221.74 L396.5 221.85 L397.8 221.99 L399.1 222.34 L400.4 221.81 L401.7 222.36 L403.0 221.90 L404.3 221.94 L405.6 221.93 L406.9 221.37 L408.2 221.83 L409.5 221.55 L410.8 221.35 L412.1 222.23 L413.4 221.54 L414.7 221.87 L416.0 222.15 L417.3 221.96 L418.6 221.71 L419.9 221.92 L421.2 221.96 L422.5 222.21 L423.8 221.47 L425.1 221.97 L426.4 221.62 L427.7 221.65 L429.0 222.20 L430.3 221.91 L431.5 221.97 L432.8 222.19 L434.1 222.35 L435.4 221.84 L436.7 222.02 L438.0 221.91 L439.3 221.91 L440.6 222.11 L441.9 221.85 L443.2 221.94 L444.5 221.88 L445.8 222.39 L447.1 222.12 L448.4 222.31 L449.7 222.39 L451.0 221.64" fill="none" stroke="#9370db" stroke-width="4.3" stroke-linecap="round" stroke-dasharray="0 1.297"/>
<line x1="73.80" y1="221.90" x2="78.80" y2="221.90" stroke="#9370db" stroke-width="0.9" />
<circle cx="73.80" cy="221.90" r="2.15" fill="#9370db"/>
<path d="M78.8 268.47 L80.1 268.89 L81.4 268.77 L82.7 268.00 L84.0 267.98 L85.3 268.34 L86.6 267.93 L87.9 268.11 L89.2 267.93 L90.5 268.59 L91.8 268.71 L93.1 268.84 L94.4 268.02 L95.7 268.64 L97.0 268.58 L98.3 268.01 L99.5 268.82 L100.8 268.91 L102.1 268.09 L103.4 268.90 L104.7 268.29 L106.0 268.39 L107.3 268.94 L108.6 268.77 L109.9 268.03 L111.2 268.32 L112.5 268.42 L113.8 268.22 L115.1 268.07 L116.4 268.20 L117.7 268.64 L119.0 267.87 L120.3 268.46 L121.6 268.33 L122.9 267.87 L124.2 268.21 L125.5 268.54 L126.8 268.41 L128.1 267.92 L129.4 268.93 L130.7 268.72 L132.0 268.92 L133.3 267.97 L134.6 268.14 L135.9 267.89 L137.2 268.71 L138.5 268.15 L139.8 267.99 L141.0 268.31 L142.3 268.85 L143.6 268.75 L144.9 268.13 L146.2 268.01 L147.5 268.86 L148.8 268.48 L150.1 268.62 L151.4 267.95 L152.7 267.91 L154.0 268.61 L155.3 268.32 L156.6 267.93 L157.9 268.88 L159.2 268.55 L160.5 268.73 L161.8 267.94 L163.1 268.79 L164.4 267.92 L165.7 268.80 L167.0 268.35 L168.3 268.22 L169.6 268.46 L170.9 268.87 L172.2 268.14 L173.5 267.99 L174.8 268.43 L176.1 268.11 L177.4 267.97 L178.7 268.03 L180.0 267.91 L181.3 268.07 L182.5 268.19 L183.8 268.19 L185.1 268.69 L186.4 268.17 L187.7 268.40 L189.0 268.05 L190.3 268.23 L191.6 267.87 L192.9 268.13 L194.2 267.87 L195.5 268.66 L196.8 268.46 L198.1 268.06 L199.4 268.37 L200.7 268.88 L202.0 267.97 L203.3 268.75 L204.6 268.33 L205.9 268.39 L207.2 268.77 L208.5 268.28 L209.8 268.41 L211.1 268.61 L212.4 268.93 L213.7 268.23 L215.0 268.77 L216.3 268.63 L217.6 268.55 L218.9 268.30 L220.2 268.23 L221.5 267.91 L222.8 267.99 L224.0 267.93 L225.3 268.66 L226.6 268.13 L227.9 268.03 L229.2 267.94 L230.5 268.78 L231.8 268.81 L233.1 268.59 L234.4 268.16 L235.7 268.12 L237.0 268.17 L238.3 268.36 L239.6 268.02 L240.9 268.34 L242.2 268.14 L243.5 268.91 L244.8 268.92 L246.1 268.45 L247.4 268.12 L248.7 268.91 L250.0 268.19 L251.3 268.24 L252.6 267.85 L253.9 268.27 L255.2 268.37 L256.5 268.40 L257.8 268.07 L259.1 268.41 L260.4 267.86 L261.7 268.14 L263.0 267.95 L264.3 268.29 L265.5 267.90 L266.8 267.87 L268.1 268.18 L269.4 268.11 L270.7 268.49 L272.0 268.43 L273.3 268.68 L274.6 268.57 L275.9 268.64 L277.2 268.82 L278.5 268.28 L279.8 268.21 L281.1 268.93 L282.4 268.01 L283.7 268.65 L285.0 268.56 L286.3 267.90 L287.6 268.77 L288.9 268.83 L290.2 268.54 L291.5 268.66 L292.8 268.74 L294.1 268.00 L295.4 268.43 L296.7 268.40 L298.0 268.77 L299.3 268.74 L300.6 268.76 L301.9 268.49 L303.2 268.83 L304.5 268.60 L305.8 268.61 L307.0 268.10 L308.3 267.88 L309.6 268.00 L310.9 268.25 L312.2 267.97 L313.5 268.77 L314.8 268.46 L316.1 268.54 L317.4 268.54 L318.7 268.60 L320.0 268.39 L321.3 267.85 L322.6 268.73 L323.9 268.67 L325.2 268.40 L326.5 268.44 L327.8 268.58 L329.1 267.92 L330.4 268.66 L331.7 268.13 L333.0 267.93 L334.3 268.14 L335.6 268.65 L336.9 268.08 L338.2 268.66 L339.5 268.92 L340.8 268.39 L342.1 268.27 L343.4 268.38 L344.7 268.60 L346.0 268.69 L347.3 268.53 L348.5 268.56 L349.8 267.94 L351.1 268.01 L352.4 268.13 L353.7 268.67 L355.0 268.18 L356.3 268.47 L357.6 267.86 L358.9 267.92 L360.2 268.15 L361.5 268.59 L362.8 268.61 L364.1 268.59 L365.4 268.17 L366.7 268.42 L368.0 268.36 L369.3 268.36 L370.6 267.98 L371.9 268.83 L373.2 268.07 L374.5 268.93 L375.8 268.88 L377.1 267.87 L378.4 268.35 L379.7 268.75 L381.0 268.91 L382.3 268.34 L383.6 268.15 L384.9 268.08 L386.2 268.89 L387.5 268.08 L388.8 268.49 L390.0 268.01 L391.3 268.43 L392.6 268.90 L393.9 268.00 L395.2 268.75 L396.5 268.41 L397.8 268.83 L399.1 268.62 L400.4 268.10 L401.7 268.84 L403.0 268.38 L404.3 267.88 L405.6 267.85 L406.9 268.39 L408.2 268.35 L409.5 268.18 L410.8 268.00 L412.1 268.23 L413.4 268.20 L414.7 268.77 L416.0 267.85 L417.3 268.68 L418.6 268.77 L419.9 267.98 L421.2 268.87 L422.5 268.63 L423.8 268.84 L425.1 268.17 L426.4 268.26 L427.7 268.28 L429.0 268.95 L430.3 268.50 L431.5 268.25 L432.8 268.32 L434.1 268.15 L435.4 267.90 L436.7 267.96 L438.0 268.77 L439.3 268.16 L440.6 268.88 L441.9 268.12 L443.2 268.14 L444.5 268.41 L445.8 268.06 L447.1 268.26 L448.4 268.90 L449.7 268.82 L451.0 268.74" fill="none" stroke="#1e90ff" stroke-width="2.5799999999999996" stroke-linejoin="round"/>
<path d="M78.8 268.47 L80.1 268.89 L81.4 268.77 L82.7 268.00 L84.0 267.98 L85.3 268.34 L86.6 267.93 L87.9 268.11 L89.2 267.93 L90.5 268.59 L91.8 268.71 L93.1 268.84 L94.4 268.02 L95.7 268.64 L97.0 268.58 L98.3 268.01 L99.5 268.82 L100.8 268.91 L102.1 268.09 L103.4 268.90 L104.7 268.29 L106.0 268.39 L107.3 268.94 L108.6 268.77 L109.9 268.03 L111.2 268.32 L112.5 268.42 L113.8 268.22 L115.1 268.07 L116.4 268.20 L117.7 268.64 L119.0 267.87 L120.3 268.46 L121.6 268.33 L122.9 267.87 L124.2 268.21 L125.5 268.54 L126.8 268.41 L128.1 267.92 L129.4 268.93 L130.7 268.72 L132.0 268.92 L133.3 267.97 L134.6 268.14 L135.9 267.89 L137.2 268.71 L138.5 268.15 L139.8 267.99 L141.0 268.31 L142.3 268.85 L143.6 268.75 L144.9 268.13 L146.2 268.01 L147.5 268.86 L148.8 268.48 L150.1 268.62 L151.4 267.95 L152.7 267.91 L154.0 268.61 L155.3 268.32 L156.6 267.93 L157.9 268.88 L159.2 268.55 L160.5 268.73 L161.8 267.94 L163.1 268.79 L164.4 267.92 L165.7 268.80 L167.0 268.35 L168.3 268.22 L169.6 268.46 L170.9 268.87 L172.2 268.14 L173.5 267.99 L174.8 268.43 L176.1 268.11 L177.4 267.97 L178.7 268.03 L180.0 267.91 L181.3 268.07 L182.5 268.19 L183.8 268.19 L185.1 268.69 L186.4 268.17 L187.7 268.40 L189.0 268.05 L190.3 268.23 L191.6 267.87 L192.9 268.13 L194.2 267.87 L195.5 268.66 L196.8 268.46 L198.1 268.06 L199.4 268.37 L200.7 268.88 L202.0 267.97 L203.3 268.75 L204.6 268.33 L205.9 268.39 L207.2 268.77 L208.5 268.28 L209.8 268.41 L211.1 268.61 L212.4 268.93 L213.7 268.23 L215.0 268.77 L216.3 268.63 L217.6 268.55 L218.9 268.30 L220.2 268.23 L221.5 267.91 L222.8 267.99 L224.0 267.93 L225.3 268.66 L226.6 268.13 L227.9 268.03 L229.2 267.94 L230.5 268.78 L231.8 268.81 L233.1 268.59 L234.4 268.16 L235.7 268.12 L237.0 268.17 L238.3 268.36 L239.6 268.02 L240.9 268.34 L242.2 268.14 L243.5 268.91 L244.8 268.92 L246.1 268.45 L247.4 268.12 L248.7 268.91 L250.0 268.19 L251.3 268.24 L252.6 267.85 L253.9 268.27 L255.2 268.37 L256.5 268.40 L257.8 268.07 L259.1 268.41 L260.4 267.86 L261.7 268.14 L263.0 267.95 L264.3 268.29 L265.5 267.90 L266.8 267.87 L268.1 268.18 L269.4 268.11 L270.7 268.49 L272.0 268.43 L273.3 268.68 L274.6 268.57 L275.9 268.64 L277.2 268.82 L278.5 268.28 L279.8 268.21 L281.1 268.93 L282.4 268.01 L283.7 268.65 L285.0 268.56 L286.3 267.90 L287.6 268.77 L288.9 268.83 L290.2 268.54 L291.5 268.66 L292.8 268.74 L294.1 268.00 L295.4 268.43 L296.7 268.40 L298.0 268.77 L299.3 268.74 L300.6 268.76 L301.9 268.49 L303.2 268.83 L304.5 268.60 L305.8 268.61 L307.0 268.10 L308.3 267.88 L309.6 268.00 L310.9 268.25 L312.2 267.97 L313.5 268.77 L314.8 268.46 L316.1 268.54 L317.4 268.54 L318.7 268.60 L320.0 268.39 L321.3 267.85 L322.6 268.73 L323.9 268.67 L325.2 268.40 L326.5 268.44 L327.8 268.58 L329.1 267.92 L330.4 268.66 L331.7 268.13 L333.0 267.93 L334.3 268.14 L335.6 268.65 L336.9 268.08 L338.2 268.66 L339.5 268.92 L340.8 268.39 L342.1 268.27 L343.4 268.38 L344.7 268.60 L346.0 268.69 L347.3 268.53 L348.5 268.56 L349.8 267.94 L351.1 268.01 L352.4 268.13 L353.7 268.67 L355.0 268.18 L356.3 268.47 L357.6 267.86 L358.9 267.92 L360.2 268.15 L361.5 268.59 L362.8 268.61 L364.1 268.59 L365.4 268.17 L366.7 268.42 L368.0 268.36 L369.3 268.36 L370.6 267.98 L371.9 268.83 L373.2 268.07 L374.5 268.93 L375.8 268.88 L377.1 267.87 L378.4 268.35 L379.7 268.75 L381.0 268.91 L382.3 268.34 L383.6 268.15 L384.9 268.08 L386.2 268.89 L387.5 268.08 L388.8 268.49 L390.0 268.01 L391.3 268.43 L392.6 268.90 L393.9 268.00 L395.2 268.75 L396.5 268.41 L397.8 268.83 L399.1 268.62 L400.4 268.10 L401.7 268.84 L403.0 268.38 L404.3 267.88 L405.6 267.85 L406.9 268.39 L408.2 268.35 L409.5 268.18 L410.8 268.00 L412.1 268.23 L413.4 268.20 L414.7 268.77 L416.0 267.85 L417.3 268.68 L418.6 268.77 L419.9 267.98 L421.2 268.87 L422.5 268.63 L423.8 268.84 L425.1 268.17 L426.4 268.26 L427.7 268.28 L429.0 268.95 L430.3 268.50 L431.5 268.25 L432.8 268.32 L434.1 268.15 L435.4 267.90 L436.7 267.96 L438.0 268.77 L439.3 268.16 L440.6 268.88 L441.9 268.12 L443.2 268.14 L444.5 268.41 L445.8 268.06 L447.1 268.26 L448.4 268.90 L449.7 268.82 L451.0 268.74" fill="none" stroke="#1e90ff" stroke-width="4.3" stroke-linecap="round" stroke-dasharray="0 1.297"/>
<line x1="73.80" y1="268.40" x2="78.80" y2="268.40" stroke="#1e90ff" stroke-width="0.9" />
<circle cx="73.80" cy="268.40" r="2.15" fill="#1e90ff"/>
<path d="M78.8 301.24 L80.1 301.55 L81.4 301.58 L82.7 301.15 L84.0 301.34 L85.3 300.60 L86.6 301.36 L87.9 301.05 L89.2 301.38 L90.5 301.26 L91.8 300.86 L93.1 300.60 L94.4 301.57 L95.7 300.69 L97.0 301.07 L98.3 300.93 L99.5 300.88 L100.8 301.36 L102.1 301.62 L103.4 300.84 L104.7 301.27 L106.0 300.88 L107.3 301.16 L108.6 300.98 L109.9 300.73 L111.2 300.73 L112.5 300.78 L113.8 301.55 L115.1 301.10 L116.4 300.79 L117.7 301.55 L119.0 301.65 L120.3 301.04 L121.6 300.70 L122.9 300.76 L124.2 300.65 L125.5 300.93 L126.8 300.65 L128.1 300.81 L129.4 300.83 L130.7 301.18 L132.0 301.53 L133.3 301.37 L134.6 301.00 L135.9 301.01 L137.2 301.13 L138.5 300.96 L139.8 300.92 L141.0 300.62 L142.3 300.86 L143.6 301.61 L144.9 300.69 L146.2 301.10 L147.5 301.24 L148.8 301.50 L150.1 300.79 L151.4 300.85 L152.7 300.82 L154.0 300.99 L155.3 301.04 L156.6 301.60 L157.9 301.48 L159.2 301.51 L160.5 300.57 L161.8 300.59 L163.1 301.33 L164.4 301.54 L165.7 301.07 L167.0 301.20 L168.3 300.55 L169.6 300.98 L170.9 301.57 L172.2 301.46 L173.5 301.49 L174.8 301.62 L176.1 300.82 L177.4 300.67 L178.7 300.72 L180.0 301.12 L181.3 301.30 L182.5 301.59 L183.8 301.34 L185.1 301.26 L186.4 301.39 L187.7 301.05 L189.0 301.16 L190.3 300.59 L191.6 301.41 L192.9 300.81 L194.2 301.56 L195.5 301.26 L196.8 300.88 L198.1 300.69 L199.4 300.83 L200.7 301.25 L202.0 301.32 L203.3 300.67 L204.6 300.63 L205.9 301.13 L207.2 301.19 L208.5 300.98 L209.8 300.80 L211.1 301.21 L212.4 300.56 L213.7 300.88 L215.0 301.06 L216.3 301.60 L217.6 301.26 L218.9 301.52 L220.2 301.07 L221.5 300.81 L222.8 300.82 L224.0 301.61 L225.3 301.33 L226.6 300.89 L227.9 300.57 L229.2 301.10 L230.5 301.29 L231.8 301.01 L233.1 300.83 L234.4 301.28 L235.7 301.57 L237.0 300.80 L238.3 300.59 L239.6 300.92 L240.9 301.01 L242.2 301.30 L243.5 300.77 L244.8 301.43 L246.1 301.36 L247.4 301.11 L248.7 300.78 L250.0 301.62 L251.3 300.89 L252.6 301.45 L253.9 300.80 L255.2 300.79 L256.5 301.39 L257.8 300.87 L259.1 301.60 L260.4 301.10 L261.7 300.76 L263.0 300.80 L264.3 301.01 L265.5 301.28 L266.8 301.59 L268.1 300.71 L269.4 300.98 L270.7 300.78 L272.0 301.62 L273.3 300.71 L274.6 300.61 L275.9 300.62 L277.2 300.98 L278.5 301.54 L279.8 301.52 L281.1 301.36 L282.4 301.65 L283.7 301.57 L285.0 300.91 L286.3 300.75 L287.6 301.58 L288.9 301.37 L290.2 300.59 L291.5 301.28 L292.8 300.97 L294.1 300.96 L295.4 300.91 L296.7 300.74 L298.0 300.55 L299.3 300.86 L300.6 300.94 L301.9 301.60 L303.2 300.69 L304.5 301.61 L305.8 300.78 L307.0 300.94 L308.3 301.45 L309.6 301.45 L310.9 301.03 L312.2 300.60 L313.5 301.07 L314.8 300.96 L316.1 301.56 L317.4 300.76 L318.7 300.95 L320.0 301.54 L321.3 300.58 L322.6 301.00 L323.9 301.44 L325.2 301.39 L326.5 300.59 L327.8 300.59 L329.1 300.62 L330.4 301.56 L331.7 300.83 L333.0 301.37 L334.3 301.54 L335.6 300.92 L336.9 300.85 L338.2 301.60 L339.5 301.23 L340.8 300.84 L342.1 301.34 L343.4 300.90 L344.7 300.85 L346.0 300.55 L347.3 301.38 L348.5 301.56 L349.8 301.25 L351.1 301.59 L352.4 300.58 L353.7 300.81 L355.0 301.07 L356.3 301.60 L357.6 301.60 L358.9 300.98 L360.2 300.83 L361.5 301.02 L362.8 301.09 L364.1 301.57 L365.4 300.75 L366.7 301.43 L368.0 301.36 L369.3 301.46 L370.6 301.40 L371.9 301.22 L373.2 300.91 L374.5 300.90 L375.8 300.95 L377.1 301.41 L378.4 300.64 L379.7 300.77 L381.0 301.38 L382.3 300.82 L383.6 300.62 L384.9 300.59 L386.2 301.16 L387.5 300.91 L388.8 301.63 L390.0 301.52 L391.3 301.64 L392.6 300.84 L393.9 300.64 L395.2 300.66 L396.5 301.10 L397.8 301.33 L399.1 301.04 L400.4 300.81 L401.7 301.01 L403.0 301.23 L404.3 301.29 L405.6 301.37 L406.9 301.48 L408.2 301.28 L409.5 300.68 L410.8 301.47 L412.1 300.87 L413.4 301.17 L414.7 300.96 L416.0 301.36 L417.3 300.77 L418.6 300.82 L419.9 300.82 L421.2 300.72 L422.5 301.52 L423.8 301.19 L425.1 300.91 L426.4 300.99 L427.7 301.64 L429.0 301.11 L430.3 300.80 L431.5 301.44 L432.8 301.27 L434.1 301.64 L435.4 300.66 L436.7 301.07 L438.0 301.45 L439.3 301.47 L440.6 301.56 L441.9 300.59 L443.2 300.87 L444.5 300.68 L445.8 300.76 L447.1 301.62 L448.4 301.19 L449.7 301.57 L451.0 300.96" fill="none" stroke="#ffff00" stroke-width="2.5799999999999996" stroke-linejoin="round"/>
<path d="M78.8 301.24 L80.1 301.55 L81.4 301.58 L82.7 301.15 L84.0 301.34 L85.3 300.60 L86.6 301.36 L87.9 301.05 L89.2 301.38 L90.5 301.26 L91.8 300.86 L93.1 300.60 L94.4 301.57 L95.7 300.69 L97.0 301.07 L98.3 300.93 L99.5 300.88 L100.8 301.36 L102.1 301.62 L103.4 300.84 L104.7 301.27 L106.0 300.88 L107.3 301.16 L108.6 300.98 L109.9 300.73 L111.2 300.73 L112.5 300.78 L113.8 301.55 L115.1 301.10 L116.4 300.79 L117.7 301.55 L119.0 301.65 L120.3 301.04 L121.6 300.70 L122.9 300.76 L124.2 300.65 L125.5 300.93 L126.8 300.65 L128.1 300.81 L129.4 300.83 L130.7 301.18 L132.0 301.53 L133.3 301.37 L134.6 301.00 L135.9 301.01 L137.2 301.13 L138.5 300.96 L139.8 300.92 L141.0 300.62 L142.3 300.86 L143.6 301.61 L144.9 300.69 L146.2 301.10 L147.5 301.24 L148.8 301.50 L150.1 300.79 L151.4 300.85 L152.7 300.82 L154.0 300.99 L155.3 301.04 L156.6 301.60 L157.9 301.48 L159.2 301.51 L160.5 300.57 L161.8 300.59 L163.1 301.33 L164.4 301.54 L165.7 301.07 L167.0 301.20 L168.3 300.55 L169.6 300.98 L170.9 301.57 L172.2 301.46 L173.5 301.49 L174.8 301.62 L176.1 300.82 L177.4 300.67 L178.7 300.72 L180.0 301.12 L181.3 301.30 L182.5 301.59 L183.8 301.34 L185.1 301.26 L186.4 301.39 L187.7 301.05 L189.0 301.16 L190.3 300.59 L191.6 301.41 L192.9 300.81 L194.2 301.56 L195.5 301.26 L196.8 300.88 L198.1 300.69 L199.4 300.83 L200.7 301.25 L202.0 301.32 L203.3 300.67 L204.6 300.63 L205.9 301.13 L207.2 301.19 L208.5 300.98 L209.8 300.80 L211.1 301.21 L212.4 300.56 L213.7 300.88 L215.0 301.06 L216.3 301.60 L217.6 301.26 L218.9 301.52 L220.2 301.07 L221.5 300.81 L222.8 300.82 L224.0 301.61 L225.3 301.33 L226.6 300.89 L227.9 300.57 L229.2 301.10 L230.5 301.29 L231.8 301.01 L233.1 300.83 L234.4 301.28 L235.7 301.57 L237.0 300.80 L238.3 300.59 L239.6 300.92 L240.9 301.01 L242.2 301.30 L243.5 300.77 L244.8 301.43 L246.1 301.36 L247.4 301.11 L248.7 300.78 L250.0 301.62 L251.3 300.89 L252.6 301.45 L253.9 300.80 L255.2 300.79 L256.5 301.39 L257.8 300.87 L259.1 301.60 L260.4 301.10 L261.7 300.76 L263.0 300.80 L264.3 301.01 L265.5 301.28 L266.8 301.59 L268.1 300.71 L269.4 300.98 L270.7 300.78 L272.0 301.62 L273.3 300.71 L274.6 300.61 L275.9 300.62 L277.2 300.98 L278.5 301.54 L279.8 301.52 L281.1 301.36 L282.4 301.65 L283.7 301.57 L285.0 300.91 L286.3 300.75 L287.6 301.58 L288.9 301.37 L290.2 300.59 L291.5 301.28 L292.8 300.97 L294.1 300.96 L295.4 300.91 L296.7 300.74 L298.0 300.55 L299.3 300.86 L300.6 300.94 L301.9 301.60 L303.2 300.69 L304.5 301.61 L305.8 300.78 L307.0 300.94 L308.3 301.45 L309.6 301.45 L310.9 301.03 L312.2 300.60 L313.5 301.07 L314.8 300.96 L316.1 301.56 L317.4 300.76 L318.7 300.95 L320.0 301.54 L321.3 300.58 L322.6 301.00 L323.9 301.44 L325.2 301.39 L326.5 300.59 L327.8 300.59 L329.1 300.62 L330.4 301.56 L331.7 300.83 L333.0 301.37 L334.3 301.54 L335.6 300.92 L336.9 300.85 L338.2 301.60 L339.5 301.23 L340.8 300.84 L342.1 301.34 L343.4 300.90 L344.7 300.85 L346.0 300.55 L347.3 301.38 L348.5 301.56 L349.8 301.25 L351.1 301.59 L352.4 300.58 L353.7 300.81 L355.0 301.07 L356.3 301.60 L357.6 301.60 L358.9 300.98 L360.2 300.83 L361.5 301.02 L362.8 301.09 L364.1 301.57 L365.4 300.75 L366.7 301.43 L368.0 301.36 L369.3 301.46 L370.6 301.40 L371.9 301.22 L373.2 300.91 L374.5 300.90 L375.8 300.95 L377.1 301.41 L378.4 300.64 L379.7 300.77 L381.0 301.38 L382.3 300.82 L383.6 300.62 L384.9 300.59 L386.2 301.16 L387.5 300.91 L388.8 301.63 L390.0 301.52 L391.3 301.64 L392.6 300.84 L393.9 300.64 L395.2 300.66 L396.5 301.10 L397.8 301.33 L399.1 301.04 L400.4 300.81 L401.7 301.01 L403.0 301.23 L404.3 301.29 L405.6 301.37 L406.9 301.48 L408.2 301.28 L409.5 300.68 L410.8 301.47 L412.1 300.87 L413.4 301.17 L414.7 300.96 L416.0 301.36 L417.3 300.77 L418.6 300.82 L419.9 300.82 L421.2 300.72 L422.5 301.52 L423.8 301.19 L425.1 300.91 L426.4 300.99 L427.7 301.64 L429.0 301.11 L430.3 300.80 L431.5 301.44 L432.8 301.27 L434.1 301.64 L435.4 300.66 L436.7 301.07 L438.0 301.45 L439.3 301.47 L440.6 301.56 L441.9 300.59 L443.2 300.87 L444.5 300.68 L445.8 300.76 L447.1 301.62 L448.4 301.19 L449.7 301.57 L451.0 300.96" fill="none" stroke="#ffff00" stroke-width="4.3" stroke-linecap="round" stroke-dasharray="0 1.297"/>
<line x1="73.80" y1="301.10" x2="78.80" y2="301.10" stroke="#ffff00" stroke-width="0.9" />
<circle cx="73.80" cy="301.10" r="2.15" fill="#ffff00"/>
<line x1="34.75" y1="196.30" x2="34.75" y2="338.60" stroke="#fff" stroke-width="1.0" />
<line x1="34.75" y1="338.60" x2="490.00" y2="338.60" stroke="#fff" stroke-width="1.0" />
<line x1="30.40" y1="241.80" x2="34.75" y2="241.80" stroke="#fff" stroke-width="0.7" />
<text x="22.50" y="244.61" font-size="6.7" fill="#fff" textLength="6.30" lengthAdjust="spacingAndGlyphs" stroke="#fff" stroke-width="0.18">72</text>
<line x1="30.40" y1="260.00" x2="34.75" y2="260.00" stroke="#fff" stroke-width="0.7" />
<text x="22.50" y="262.81" font-size="6.7" fill="#fff" textLength="6.30" lengthAdjust="spacingAndGlyphs" stroke="#fff" stroke-width="0.18">70</text>
<line x1="30.40" y1="278.20" x2="34.75" y2="278.20" stroke="#fff" stroke-width="0.7" />
<text x="22.50" y="281.01" font-size="6.7" fill="#fff" textLength="6.30" lengthAdjust="spacingAndGlyphs" stroke="#fff" stroke-width="0.18">68</text>
<line x1="30.40" y1="296.80" x2="34.75" y2="296.80" stroke="#fff" stroke-width="0.7" />
<text x="22.50" y="299.61" font-size="6.7" fill="#fff" textLength="6.30" lengthAdjust="spacingAndGlyphs" stroke="#fff" stroke-width="0.18">66</text>
<line x1="30.40" y1="315.40" x2="34.75" y2="315.40" stroke="#fff" stroke-width="0.7" />
<text x="22.50" y="318.21" font-size="6.7" fill="#fff" textLength="6.30" lengthAdjust="spacingAndGlyphs" stroke="#fff" stroke-width="0.18">64</text>
<line x1="30.40" y1="333.10" x2="34.75" y2="333.10" stroke="#fff" stroke-width="0.7" />
<text x="22.50" y="335.91" font-size="6.7" fill="#fff" textLength="6.30" lengthAdjust="spacingAndGlyphs" stroke="#fff" stroke-width="0.18">62</text>
<line x1="74.30" y1="338.60" x2="74.30" y2="342.60" stroke="#fff" stroke-width="0.8" />
<text x="72.72" y="352.91" font-size="6.7" fill="#fff" textLength="3.15" lengthAdjust="spacingAndGlyphs" stroke="#fff" stroke-width="0.18">0</text>
<line x1="106.70" y1="338.60" x2="106.70" y2="342.60" stroke="#fff" stroke-width="0.8" />
<text x="105.12" y="352.91" font-size="6.7" fill="#fff" textLength="3.15" lengthAdjust="spacingAndGlyphs" stroke="#fff" stroke-width="0.18">1</text>
<line x1="139.10" y1="338.60" x2="139.10" y2="342.60" stroke="#fff" stroke-width="0.8" />
<text x="137.53" y="352.91" font-size="6.7" fill="#fff" textLength="3.15" lengthAdjust="spacingAndGlyphs" stroke="#fff" stroke-width="0.18">2</text>
<line x1="171.50" y1="338.60" x2="171.50" y2="342.60" stroke="#fff" stroke-width="0.8" />
<text x="169.93" y="352.91" font-size="6.7" fill="#fff" textLength="3.15" lengthAdjust="spacingAndGlyphs" stroke="#fff" stroke-width="0.18">3</text>
<line x1="203.90" y1="338.60" x2="203.90" y2="342.60" stroke="#fff" stroke-width="0.8" />
<text x="202.32" y="352.91" font-size="6.7" fill="#fff" textLength="3.15" lengthAdjust="spacingAndGlyphs" stroke="#fff" stroke-width="0.18">4</text>
<line x1="236.30" y1="338.60" x2="236.30" y2="342.60" stroke="#fff" stroke-width="0.8" />
<text x="234.73" y="352.91" font-size="6.7" fill="#fff" textLength="3.15" lengthAdjust="spacingAndGlyphs" stroke="#fff" stroke-width="0.18">5</text>
<line x1="268.70" y1="338.60" x2="268.70" y2="342.60" stroke="#fff" stroke-width="0.8" />
<text x="267.12" y="352.91" font-size="6.7" fill="#fff" textLength="3.15" lengthAdjust="spacingAndGlyphs" stroke="#fff" stroke-width="0.18">6</text>
<line x1="301.10" y1="338.60" x2="301.10" y2="342.60" stroke="#fff" stroke-width="0.8" />
<text x="299.52" y="352.91" font-size="6.7" fill="#fff" textLength="3.15" lengthAdjust="spacingAndGlyphs" stroke="#fff" stroke-width="0.18">7</text>
<line x1="333.50" y1="338.60" x2="333.50" y2="342.60" stroke="#fff" stroke-width="0.8" />
<text x="331.93" y="352.91" font-size="6.7" fill="#fff" textLength="3.15" lengthAdjust="spacingAndGlyphs" stroke="#fff" stroke-width="0.18">8</text>
<line x1="365.90" y1="338.60" x2="365.90" y2="342.60" stroke="#fff" stroke-width="0.8" />
<text x="364.32" y="352.91" font-size="6.7" fill="#fff" textLength="3.15" lengthAdjust="spacingAndGlyphs" stroke="#fff" stroke-width="0.18">9</text>
<line x1="398.30" y1="338.60" x2="398.30" y2="342.60" stroke="#fff" stroke-width="0.8" />
<text x="395.15" y="352.91" font-size="6.7" fill="#fff" textLength="6.30" lengthAdjust="spacingAndGlyphs" stroke="#fff" stroke-width="0.18">10</text>
<line x1="430.70" y1="338.60" x2="430.70" y2="342.60" stroke="#fff" stroke-width="0.8" />
<text x="427.55" y="352.91" font-size="6.7" fill="#fff" textLength="6.30" lengthAdjust="spacingAndGlyphs" stroke="#fff" stroke-width="0.18">11</text>
<line x1="41.50" y1="338.60" x2="41.50" y2="340.00" stroke="#fff" stroke-width="0.6" />
<rect x="8.00" y="199.40" width="56.40" height="25.60" fill="#050505" stroke="#262626" stroke-width="0.6" />
<text x="9.50" y="210.10" font-size="8.6" fill="#fff" font-weight="700" textLength="53.50" lengthAdjust="spacingAndGlyphs" >Isc/A vs. Time</text>
<rect x="9.00" y="212.30" width="38.50" height="12.10" fill="#424242" stroke="#787878" stroke-width="0.7" />
<line x1="37.30" y1="212.30" x2="37.30" y2="224.40" stroke="#787878" stroke-width="0.7" />
<path d="M40.70 217.45 L42.40 219.25 L44.10 217.45" fill="none" stroke="#f0f0f0" stroke-width="1.0" />
<text x="11.00" y="221.03" font-size="6.9" fill="#ececec" textLength="16.00" lengthAdjust="spacingAndGlyphs" >Isc/A</text>
<rect x="9.30" y="342.40" width="38.40" height="12.50" fill="#424242" stroke="#787878" stroke-width="0.7" />
<line x1="37.50" y1="342.40" x2="37.50" y2="354.90" stroke="#787878" stroke-width="0.7" />
<path d="M40.90 347.75 L42.60 349.55 L44.30 347.75" fill="none" stroke="#f0f0f0" stroke-width="1.0" />
<text y="351.43" font-size="6.9" fill="#ececec"><tspan x="11.2" textLength="20.4" lengthAdjust="spacingAndGlyphs">µA/cm</tspan><tspan x="31.9" dy="-2.4" font-size="4.4" font-weight="700">2</tspan></text>
<rect x="446.30" y="342.50" width="39.40" height="12.10" fill="#424242" stroke="#787878" stroke-width="0.7" />
<line x1="474.50" y1="342.50" x2="474.50" y2="354.60" stroke="#787878" stroke-width="0.7" />
<path d="M478.40 347.65 L480.10 349.45 L481.80 347.65" fill="none" stroke="#f0f0f0" stroke-width="1.0" />
<text x="448.20" y="351.23" font-size="6.9" fill="#ececec" textLength="12.00" lengthAdjust="spacingAndGlyphs" >min</text>
<text x="454.40" y="207.98" font-size="6.6" fill="#5a5a5a" font-style="italic" textLength="27.10" lengthAdjust="spacingAndGlyphs" >Auto Scale</text>
<path d="M562.3 219.8 L565.1 220.9 L567.8 216.3 L570.6 212.9 L573.3 211.4 L576.1 215.0 L578.8 211.9 L581.6 210.1 L584.3 215.4 L587.1 215.9 L589.8 217.3 L592.6 212.5 L595.4 215.1 L598.1 215.1 L600.9 210.2 L603.6 216.6 L606.4 216.6 L609.1 222.9 L611.9 217.0 L614.6 215.1 L617.4 219.6 L620.1 216.6 L622.9 218.6 L625.7 214.5 L628.4 216.0 L631.2 219.0 L633.9 218.2 L636.7 216.2 L639.4 211.8 L642.2 216.5 L644.9 215.8 L647.7 217.9 L650.4 216.4 L653.2 219.2 L655.9 215.7 L658.7 216.1 L661.5 217.8 L664.2 212.0 L667.0 213.6 L669.7 213.5 L672.5 221.9 L675.2 215.9 L678.0 217.7 L680.7 217.8 L683.5 214.7 L686.2 210.0 L689.0 218.0 L691.8 214.3 L694.5 217.7 L697.3 211.2 L700.0 213.4 L702.8 219.4 L705.5 220.7 L708.3 211.6 L711.0 210.4 L713.8 214.7 L716.5 217.8 L719.3 216.2 L722.1 216.5 L724.8 212.2 L727.6 217.0 L730.3 219.4 L733.1 214.4 L735.8 210.4 L738.6 212.2 L741.3 217.6 L744.1 209.8 L746.8 214.4 L749.6 211.9 L752.4 214.5 L755.1 214.5 L757.9 215.3 L760.6 220.5 L763.4 217.4 L766.1 220.2 L768.9 215.5 L771.6 213.8 L774.4 216.5 L777.1 207.9 L779.9 214.4 L782.7 215.8 L785.4 211.3 L788.2 216.5 L790.9 213.6 L793.7 207.9 L796.4 213.8 L799.2 211.9 L801.9 213.2 L804.7 214.6 L807.4 219.6 L810.2 216.2 L813.0 215.4 L815.7 216.7 L818.5 209.4 L821.2 218.9 L824.0 212.2 L826.7 216.5 L829.5 211.7 L832.2 211.6 L835.0 213.6 L837.7 221.6 L840.5 218.5 L843.2 213.7 L846.0 214.2 L848.8 211.3 L851.5 214.8 L854.3 213.4 L857.0 217.6 L859.8 211.1 L862.5 213.7 L865.3 212.3 L868.0 212.6 L870.8 217.5 L873.5 216.1 L876.3 217.5 L879.1 219.7 L881.8 219.8 L884.6 211.3 L887.3 216.7 L890.1 209.6 L892.8 214.5 L895.6 221.8 L898.3 215.5 L901.1 214.2 L903.8 215.8 L906.6 215.5 L909.4 215.5 L912.1 212.8 L914.9 218.8 L917.6 218.8 L920.4 215.1 L923.1 216.4 L925.9 217.8 L928.6 219.2 L931.4 217.2 L934.1 218.0 L936.9 214.8" fill="none" stroke="#1e90ff" stroke-width="0.9" stroke-linejoin="round"/>
<path d="M559.8 219.8a2.45 2.45 0 1 0 4.9 0a2.45 2.45 0 1 0 -4.9 0ZM562.6 220.9a2.45 2.45 0 1 0 4.9 0a2.45 2.45 0 1 0 -4.9 0ZM565.4 216.3a2.45 2.45 0 1 0 4.9 0a2.45 2.45 0 1 0 -4.9 0ZM568.1 212.9a2.45 2.45 0 1 0 4.9 0a2.45 2.45 0 1 0 -4.9 0ZM570.9 211.4a2.45 2.45 0 1 0 4.9 0a2.45 2.45 0 1 0 -4.9 0ZM573.6 215.0a2.45 2.45 0 1 0 4.9 0a2.45 2.45 0 1 0 -4.9 0ZM576.4 211.9a2.45 2.45 0 1 0 4.9 0a2.45 2.45 0 1 0 -4.9 0ZM579.1 210.1a2.45 2.45 0 1 0 4.9 0a2.45 2.45 0 1 0 -4.9 0ZM581.9 215.4a2.45 2.45 0 1 0 4.9 0a2.45 2.45 0 1 0 -4.9 0ZM584.6 215.9a2.45 2.45 0 1 0 4.9 0a2.45 2.45 0 1 0 -4.9 0ZM587.4 217.3a2.45 2.45 0 1 0 4.9 0a2.45 2.45 0 1 0 -4.9 0ZM590.1 212.5a2.45 2.45 0 1 0 4.9 0a2.45 2.45 0 1 0 -4.9 0ZM592.9 215.1a2.45 2.45 0 1 0 4.9 0a2.45 2.45 0 1 0 -4.9 0ZM595.7 215.1a2.45 2.45 0 1 0 4.9 0a2.45 2.45 0 1 0 -4.9 0ZM598.4 210.2a2.45 2.45 0 1 0 4.9 0a2.45 2.45 0 1 0 -4.9 0ZM601.2 216.6a2.45 2.45 0 1 0 4.9 0a2.45 2.45 0 1 0 -4.9 0ZM603.9 216.6a2.45 2.45 0 1 0 4.9 0a2.45 2.45 0 1 0 -4.9 0ZM606.7 222.9a2.45 2.45 0 1 0 4.9 0a2.45 2.45 0 1 0 -4.9 0ZM609.4 217.0a2.45 2.45 0 1 0 4.9 0a2.45 2.45 0 1 0 -4.9 0ZM612.2 215.1a2.45 2.45 0 1 0 4.9 0a2.45 2.45 0 1 0 -4.9 0ZM614.9 219.6a2.45 2.45 0 1 0 4.9 0a2.45 2.45 0 1 0 -4.9 0ZM617.7 216.6a2.45 2.45 0 1 0 4.9 0a2.45 2.45 0 1 0 -4.9 0ZM620.4 218.6a2.45 2.45 0 1 0 4.9 0a2.45 2.45 0 1 0 -4.9 0ZM623.2 214.5a2.45 2.45 0 1 0 4.9 0a2.45 2.45 0 1 0 -4.9 0ZM626.0 216.0a2.45 2.45 0 1 0 4.9 0a2.45 2.45 0 1 0 -4.9 0ZM628.7 219.0a2.45 2.45 0 1 0 4.9 0a2.45 2.45 0 1 0 -4.9 0ZM631.5 218.2a2.45 2.45 0 1 0 4.9 0a2.45 2.45 0 1 0 -4.9 0ZM634.2 216.2a2.45 2.45 0 1 0 4.9 0a2.45 2.45 0 1 0 -4.9 0ZM637.0 211.8a2.45 2.45 0 1 0 4.9 0a2.45 2.45 0 1 0 -4.9 0ZM639.7 216.5a2.45 2.45 0 1 0 4.9 0a2.45 2.45 0 1 0 -4.9 0ZM642.5 215.8a2.45 2.45 0 1 0 4.9 0a2.45 2.45 0 1 0 -4.9 0ZM645.2 217.9a2.45 2.45 0 1 0 4.9 0a2.45 2.45 0 1 0 -4.9 0ZM648.0 216.4a2.45 2.45 0 1 0 4.9 0a2.45 2.45 0 1 0 -4.9 0ZM650.7 219.2a2.45 2.45 0 1 0 4.9 0a2.45 2.45 0 1 0 -4.9 0ZM653.5 215.7a2.45 2.45 0 1 0 4.9 0a2.45 2.45 0 1 0 -4.9 0ZM656.3 216.1a2.45 2.45 0 1 0 4.9 0a2.45 2.45 0 1 0 -4.9 0ZM659.0 217.8a2.45 2.45 0 1 0 4.9 0a2.45 2.45 0 1 0 -4.9 0ZM661.8 212.0a2.45 2.45 0 1 0 4.9 0a2.45 2.45 0 1 0 -4.9 0ZM664.5 213.6a2.45 2.45 0 1 0 4.9 0a2.45 2.45 0 1 0 -4.9 0ZM667.3 213.5a2.45 2.45 0 1 0 4.9 0a2.45 2.45 0 1 0 -4.9 0ZM670.0 221.9a2.45 2.45 0 1 0 4.9 0a2.45 2.45 0 1 0 -4.9 0ZM672.8 215.9a2.45 2.45 0 1 0 4.9 0a2.45 2.45 0 1 0 -4.9 0ZM675.5 217.7a2.45 2.45 0 1 0 4.9 0a2.45 2.45 0 1 0 -4.9 0ZM678.3 217.8a2.45 2.45 0 1 0 4.9 0a2.45 2.45 0 1 0 -4.9 0ZM681.0 214.7a2.45 2.45 0 1 0 4.9 0a2.45 2.45 0 1 0 -4.9 0ZM683.8 210.0a2.45 2.45 0 1 0 4.9 0a2.45 2.45 0 1 0 -4.9 0ZM686.6 218.0a2.45 2.45 0 1 0 4.9 0a2.45 2.45 0 1 0 -4.9 0ZM689.3 214.3a2.45 2.45 0 1 0 4.9 0a2.45 2.45 0 1 0 -4.9 0ZM692.1 217.7a2.45 2.45 0 1 0 4.9 0a2.45 2.45 0 1 0 -4.9 0ZM694.8 211.2a2.45 2.45 0 1 0 4.9 0a2.45 2.45 0 1 0 -4.9 0ZM697.6 213.4a2.45 2.45 0 1 0 4.9 0a2.45 2.45 0 1 0 -4.9 0ZM700.3 219.4a2.45 2.45 0 1 0 4.9 0a2.45 2.45 0 1 0 -4.9 0ZM703.1 220.7a2.45 2.45 0 1 0 4.9 0a2.45 2.45 0 1 0 -4.9 0ZM705.8 211.6a2.45 2.45 0 1 0 4.9 0a2.45 2.45 0 1 0 -4.9 0ZM708.6 210.4a2.45 2.45 0 1 0 4.9 0a2.45 2.45 0 1 0 -4.9 0ZM711.3 214.7a2.45 2.45 0 1 0 4.9 0a2.45 2.45 0 1 0 -4.9 0ZM714.1 217.8a2.45 2.45 0 1 0 4.9 0a2.45 2.45 0 1 0 -4.9 0ZM716.9 216.2a2.45 2.45 0 1 0 4.9 0a2.45 2.45 0 1 0 -4.9 0ZM719.6 216.5a2.45 2.45 0 1 0 4.9 0a2.45 2.45 0 1 0 -4.9 0ZM722.4 212.2a2.45 2.45 0 1 0 4.9 0a2.45 2.45 0 1 0 -4.9 0ZM725.1 217.0a2.45 2.45 0 1 0 4.9 0a2.45 2.45 0 1 0 -4.9 0ZM727.9 219.4a2.45 2.45 0 1 0 4.9 0a2.45 2.45 0 1 0 -4.9 0ZM730.6 214.4a2.45 2.45 0 1 0 4.9 0a2.45 2.45 0 1 0 -4.9 0ZM733.4 210.4a2.45 2.45 0 1 0 4.9 0a2.45 2.45 0 1 0 -4.9 0ZM736.1 212.2a2.45 2.45 0 1 0 4.9 0a2.45 2.45 0 1 0 -4.9 0ZM738.9 217.6a2.45 2.45 0 1 0 4.9 0a2.45 2.45 0 1 0 -4.9 0ZM741.6 209.8a2.45 2.45 0 1 0 4.9 0a2.45 2.45 0 1 0 -4.9 0ZM744.4 214.4a2.45 2.45 0 1 0 4.9 0a2.45 2.45 0 1 0 -4.9 0ZM747.1 211.9a2.45 2.45 0 1 0 4.9 0a2.45 2.45 0 1 0 -4.9 0ZM749.9 214.5a2.45 2.45 0 1 0 4.9 0a2.45 2.45 0 1 0 -4.9 0ZM752.7 214.5a2.45 2.45 0 1 0 4.9 0a2.45 2.45 0 1 0 -4.9 0ZM755.4 215.3a2.45 2.45 0 1 0 4.9 0a2.45 2.45 0 1 0 -4.9 0ZM758.2 220.5a2.45 2.45 0 1 0 4.9 0a2.45 2.45 0 1 0 -4.9 0ZM760.9 217.4a2.45 2.45 0 1 0 4.9 0a2.45 2.45 0 1 0 -4.9 0ZM763.7 220.2a2.45 2.45 0 1 0 4.9 0a2.45 2.45 0 1 0 -4.9 0ZM766.4 215.5a2.45 2.45 0 1 0 4.9 0a2.45 2.45 0 1 0 -4.9 0ZM769.2 213.8a2.45 2.45 0 1 0 4.9 0a2.45 2.45 0 1 0 -4.9 0ZM771.9 216.5a2.45 2.45 0 1 0 4.9 0a2.45 2.45 0 1 0 -4.9 0ZM774.7 207.9a2.45 2.45 0 1 0 4.9 0a2.45 2.45 0 1 0 -4.9 0ZM777.4 214.4a2.45 2.45 0 1 0 4.9 0a2.45 2.45 0 1 0 -4.9 0ZM780.2 215.8a2.45 2.45 0 1 0 4.9 0a2.45 2.45 0 1 0 -4.9 0ZM783.0 211.3a2.45 2.45 0 1 0 4.9 0a2.45 2.45 0 1 0 -4.9 0ZM785.7 216.5a2.45 2.45 0 1 0 4.9 0a2.45 2.45 0 1 0 -4.9 0ZM788.5 213.6a2.45 2.45 0 1 0 4.9 0a2.45 2.45 0 1 0 -4.9 0ZM791.2 207.9a2.45 2.45 0 1 0 4.9 0a2.45 2.45 0 1 0 -4.9 0ZM794.0 213.8a2.45 2.45 0 1 0 4.9 0a2.45 2.45 0 1 0 -4.9 0ZM796.7 211.9a2.45 2.45 0 1 0 4.9 0a2.45 2.45 0 1 0 -4.9 0ZM799.5 213.2a2.45 2.45 0 1 0 4.9 0a2.45 2.45 0 1 0 -4.9 0ZM802.2 214.6a2.45 2.45 0 1 0 4.9 0a2.45 2.45 0 1 0 -4.9 0ZM805.0 219.6a2.45 2.45 0 1 0 4.9 0a2.45 2.45 0 1 0 -4.9 0ZM807.7 216.2a2.45 2.45 0 1 0 4.9 0a2.45 2.45 0 1 0 -4.9 0ZM810.5 215.4a2.45 2.45 0 1 0 4.9 0a2.45 2.45 0 1 0 -4.9 0ZM813.3 216.7a2.45 2.45 0 1 0 4.9 0a2.45 2.45 0 1 0 -4.9 0ZM816.0 209.4a2.45 2.45 0 1 0 4.9 0a2.45 2.45 0 1 0 -4.9 0ZM818.8 218.9a2.45 2.45 0 1 0 4.9 0a2.45 2.45 0 1 0 -4.9 0ZM821.5 212.2a2.45 2.45 0 1 0 4.9 0a2.45 2.45 0 1 0 -4.9 0ZM824.3 216.5a2.45 2.45 0 1 0 4.9 0a2.45 2.45 0 1 0 -4.9 0ZM827.0 211.7a2.45 2.45 0 1 0 4.9 0a2.45 2.45 0 1 0 -4.9 0ZM829.8 211.6a2.45 2.45 0 1 0 4.9 0a2.45 2.45 0 1 0 -4.9 0ZM832.5 213.6a2.45 2.45 0 1 0 4.9 0a2.45 2.45 0 1 0 -4.9 0ZM835.3 221.6a2.45 2.45 0 1 0 4.9 0a2.45 2.45 0 1 0 -4.9 0ZM838.0 218.5a2.45 2.45 0 1 0 4.9 0a2.45 2.45 0 1 0 -4.9 0ZM840.8 213.7a2.45 2.45 0 1 0 4.9 0a2.45 2.45 0 1 0 -4.9 0ZM843.6 214.2a2.45 2.45 0 1 0 4.9 0a2.45 2.45 0 1 0 -4.9 0ZM846.3 211.3a2.45 2.45 0 1 0 4.9 0a2.45 2.45 0 1 0 -4.9 0ZM849.1 214.8a2.45 2.45 0 1 0 4.9 0a2.45 2.45 0 1 0 -4.9 0ZM851.8 213.4a2.45 2.45 0 1 0 4.9 0a2.45 2.45 0 1 0 -4.9 0ZM854.6 217.6a2.45 2.45 0 1 0 4.9 0a2.45 2.45 0 1 0 -4.9 0ZM857.3 211.1a2.45 2.45 0 1 0 4.9 0a2.45 2.45 0 1 0 -4.9 0ZM860.1 213.7a2.45 2.45 0 1 0 4.9 0a2.45 2.45 0 1 0 -4.9 0ZM862.8 212.3a2.45 2.45 0 1 0 4.9 0a2.45 2.45 0 1 0 -4.9 0ZM865.6 212.6a2.45 2.45 0 1 0 4.9 0a2.45 2.45 0 1 0 -4.9 0ZM868.3 217.5a2.45 2.45 0 1 0 4.9 0a2.45 2.45 0 1 0 -4.9 0ZM871.1 216.1a2.45 2.45 0 1 0 4.9 0a2.45 2.45 0 1 0 -4.9 0ZM873.9 217.5a2.45 2.45 0 1 0 4.9 0a2.45 2.45 0 1 0 -4.9 0ZM876.6 219.7a2.45 2.45 0 1 0 4.9 0a2.45 2.45 0 1 0 -4.9 0ZM879.4 219.8a2.45 2.45 0 1 0 4.9 0a2.45 2.45 0 1 0 -4.9 0ZM882.1 211.3a2.45 2.45 0 1 0 4.9 0a2.45 2.45 0 1 0 -4.9 0ZM884.9 216.7a2.45 2.45 0 1 0 4.9 0a2.45 2.45 0 1 0 -4.9 0ZM887.6 209.6a2.45 2.45 0 1 0 4.9 0a2.45 2.45 0 1 0 -4.9 0ZM890.4 214.5a2.45 2.45 0 1 0 4.9 0a2.45 2.45 0 1 0 -4.9 0ZM893.1 221.8a2.45 2.45 0 1 0 4.9 0a2.45 2.45 0 1 0 -4.9 0ZM895.9 215.5a2.45 2.45 0 1 0 4.9 0a2.45 2.45 0 1 0 -4.9 0ZM898.6 214.2a2.45 2.45 0 1 0 4.9 0a2.45 2.45 0 1 0 -4.9 0ZM901.4 215.8a2.45 2.45 0 1 0 4.9 0a2.45 2.45 0 1 0 -4.9 0ZM904.2 215.5a2.45 2.45 0 1 0 4.9 0a2.45 2.45 0 1 0 -4.9 0ZM906.9 215.5a2.45 2.45 0 1 0 4.9 0a2.45 2.45 0 1 0 -4.9 0ZM909.7 212.8a2.45 2.45 0 1 0 4.9 0a2.45 2.45 0 1 0 -4.9 0ZM912.4 218.8a2.45 2.45 0 1 0 4.9 0a2.45 2.45 0 1 0 -4.9 0ZM915.2 218.8a2.45 2.45 0 1 0 4.9 0a2.45 2.45 0 1 0 -4.9 0ZM917.9 215.1a2.45 2.45 0 1 0 4.9 0a2.45 2.45 0 1 0 -4.9 0ZM920.7 216.4a2.45 2.45 0 1 0 4.9 0a2.45 2.45 0 1 0 -4.9 0ZM923.4 217.8a2.45 2.45 0 1 0 4.9 0a2.45 2.45 0 1 0 -4.9 0ZM926.2 219.2a2.45 2.45 0 1 0 4.9 0a2.45 2.45 0 1 0 -4.9 0ZM928.9 217.2a2.45 2.45 0 1 0 4.9 0a2.45 2.45 0 1 0 -4.9 0ZM931.7 218.0a2.45 2.45 0 1 0 4.9 0a2.45 2.45 0 1 0 -4.9 0ZM934.4 214.8a2.45 2.45 0 1 0 4.9 0a2.45 2.45 0 1 0 -4.9 0Z" fill="#1e90ff" />
<path d="M562.3 275.0 L565.1 267.2 L567.8 269.4 L570.6 269.0 L573.3 271.0 L576.1 264.5 L578.8 266.7 L581.6 265.9 L584.3 264.9 L587.1 265.4 L589.8 266.5 L592.6 267.3 L595.4 265.5 L598.1 269.3 L600.9 266.9 L603.6 261.8 L606.4 271.2 L609.1 267.6 L611.9 266.1 L614.6 268.9 L617.4 269.2 L620.1 268.6 L622.9 265.9 L625.7 268.7 L628.4 263.8 L631.2 272.2 L633.9 265.1 L636.7 267.4 L639.4 268.3 L642.2 269.0 L644.9 267.7 L647.7 269.8 L650.4 261.8 L653.2 266.9 L655.9 267.4 L658.7 266.6 L661.5 272.4 L664.2 264.0 L667.0 265.8 L669.7 260.2 L672.5 266.4 L675.2 261.5 L678.0 261.0 L680.7 272.8 L683.5 269.3 L686.2 266.7 L689.0 266.9 L691.8 262.1 L694.5 262.7 L697.3 267.2 L700.0 260.2 L702.8 266.4 L705.5 261.1 L708.3 266.1 L711.0 262.9 L713.8 271.3 L716.5 270.0 L719.3 265.2 L722.1 260.5 L724.8 263.3 L727.6 265.8 L730.3 263.3 L733.1 266.8 L735.8 269.4 L738.6 266.6 L741.3 265.1 L744.1 268.6 L746.8 265.7 L749.6 268.9 L752.4 265.7 L755.1 271.2 L757.9 266.1 L760.6 263.1 L763.4 266.3 L766.1 264.4 L768.9 263.3 L771.6 265.6 L774.4 268.6 L777.1 260.2 L779.9 265.5 L782.7 265.8 L785.4 265.8 L788.2 268.8 L790.9 262.7 L793.7 267.9 L796.4 265.9 L799.2 266.7 L801.9 265.7 L804.7 265.3 L807.4 264.7 L810.2 267.4 L813.0 272.9 L815.7 270.4 L818.5 269.5 L821.2 268.5 L824.0 265.2 L826.7 268.1 L829.5 273.0 L832.2 263.3 L835.0 268.6 L837.7 269.8 L840.5 267.7 L843.2 269.0 L846.0 271.0 L848.8 273.4 L851.5 271.3 L854.3 272.1 L857.0 268.2 L859.8 269.3 L862.5 267.4 L865.3 267.6 L868.0 265.3 L870.8 268.5 L873.5 271.2 L876.3 266.7 L879.1 267.4 L881.8 268.6 L884.6 266.9 L887.3 269.5 L890.1 267.7 L892.8 263.2 L895.6 263.1 L898.3 268.4 L901.1 268.8 L903.8 270.2 L906.6 267.8 L909.4 267.4 L912.1 262.0 L914.9 270.3 L917.6 264.3 L920.4 269.5 L923.1 263.6 L925.9 264.3 L928.6 266.9 L931.4 265.4 L934.1 264.4 L936.9 269.1" fill="none" stroke="#ffff00" stroke-width="0.9" stroke-linejoin="round"/>
<path d="M559.8 275.0a2.45 2.45 0 1 0 4.9 0a2.45 2.45 0 1 0 -4.9 0ZM562.6 267.2a2.45 2.45 0 1 0 4.9 0a2.45 2.45 0 1 0 -4.9 0ZM565.4 269.4a2.45 2.45 0 1 0 4.9 0a2.45 2.45 0 1 0 -4.9 0ZM568.1 269.0a2.45 2.45 0 1 0 4.9 0a2.45 2.45 0 1 0 -4.9 0ZM570.9 271.0a2.45 2.45 0 1 0 4.9 0a2.45 2.45 0 1 0 -4.9 0ZM573.6 264.5a2.45 2.45 0 1 0 4.9 0a2.45 2.45 0 1 0 -4.9 0ZM576.4 266.7a2.45 2.45 0 1 0 4.9 0a2.45 2.45 0 1 0 -4.9 0ZM579.1 265.9a2.45 2.45 0 1 0 4.9 0a2.45 2.45 0 1 0 -4.9 0ZM581.9 264.9a2.45 2.45 0 1 0 4.9 0a2.45 2.45 0 1 0 -4.9 0ZM584.6 265.4a2.45 2.45 0 1 0 4.9 0a2.45 2.45 0 1 0 -4.9 0ZM587.4 266.5a2.45 2.45 0 1 0 4.9 0a2.45 2.45 0 1 0 -4.9 0ZM590.1 267.3a2.45 2.45 0 1 0 4.9 0a2.45 2.45 0 1 0 -4.9 0ZM592.9 265.5a2.45 2.45 0 1 0 4.9 0a2.45 2.45 0 1 0 -4.9 0ZM595.7 269.3a2.45 2.45 0 1 0 4.9 0a2.45 2.45 0 1 0 -4.9 0ZM598.4 266.9a2.45 2.45 0 1 0 4.9 0a2.45 2.45 0 1 0 -4.9 0ZM601.2 261.8a2.45 2.45 0 1 0 4.9 0a2.45 2.45 0 1 0 -4.9 0ZM603.9 271.2a2.45 2.45 0 1 0 4.9 0a2.45 2.45 0 1 0 -4.9 0ZM606.7 267.6a2.45 2.45 0 1 0 4.9 0a2.45 2.45 0 1 0 -4.9 0ZM609.4 266.1a2.45 2.45 0 1 0 4.9 0a2.45 2.45 0 1 0 -4.9 0ZM612.2 268.9a2.45 2.45 0 1 0 4.9 0a2.45 2.45 0 1 0 -4.9 0ZM614.9 269.2a2.45 2.45 0 1 0 4.9 0a2.45 2.45 0 1 0 -4.9 0ZM617.7 268.6a2.45 2.45 0 1 0 4.9 0a2.45 2.45 0 1 0 -4.9 0ZM620.4 265.9a2.45 2.45 0 1 0 4.9 0a2.45 2.45 0 1 0 -4.9 0ZM623.2 268.7a2.45 2.45 0 1 0 4.9 0a2.45 2.45 0 1 0 -4.9 0ZM626.0 263.8a2.45 2.45 0 1 0 4.9 0a2.45 2.45 0 1 0 -4.9 0ZM628.7 272.2a2.45 2.45 0 1 0 4.9 0a2.45 2.45 0 1 0 -4.9 0ZM631.5 265.1a2.45 2.45 0 1 0 4.9 0a2.45 2.45 0 1 0 -4.9 0ZM634.2 267.4a2.45 2.45 0 1 0 4.9 0a2.45 2.45 0 1 0 -4.9 0ZM637.0 268.3a2.45 2.45 0 1 0 4.9 0a2.45 2.45 0 1 0 -4.9 0ZM639.7 269.0a2.45 2.45 0 1 0 4.9 0a2.45 2.45 0 1 0 -4.9 0ZM642.5 267.7a2.45 2.45 0 1 0 4.9 0a2.45 2.45 0 1 0 -4.9 0ZM645.2 269.8a2.45 2.45 0 1 0 4.9 0a2.45 2.45 0 1 0 -4.9 0ZM648.0 261.8a2.45 2.45 0 1 0 4.9 0a2.45 2.45 0 1 0 -4.9 0ZM650.7 266.9a2.45 2.45 0 1 0 4.9 0a2.45 2.45 0 1 0 -4.9 0ZM653.5 267.4a2.45 2.45 0 1 0 4.9 0a2.45 2.45 0 1 0 -4.9 0ZM656.3 266.6a2.45 2.45 0 1 0 4.9 0a2.45 2.45 0 1 0 -4.9 0ZM659.0 272.4a2.45 2.45 0 1 0 4.9 0a2.45 2.45 0 1 0 -4.9 0ZM661.8 264.0a2.45 2.45 0 1 0 4.9 0a2.45 2.45 0 1 0 -4.9 0ZM664.5 265.8a2.45 2.45 0 1 0 4.9 0a2.45 2.45 0 1 0 -4.9 0ZM667.3 260.2a2.45 2.45 0 1 0 4.9 0a2.45 2.45 0 1 0 -4.9 0ZM670.0 266.4a2.45 2.45 0 1 0 4.9 0a2.45 2.45 0 1 0 -4.9 0ZM672.8 261.5a2.45 2.45 0 1 0 4.9 0a2.45 2.45 0 1 0 -4.9 0ZM675.5 261.0a2.45 2.45 0 1 0 4.9 0a2.45 2.45 0 1 0 -4.9 0ZM678.3 272.8a2.45 2.45 0 1 0 4.9 0a2.45 2.45 0 1 0 -4.9 0ZM681.0 269.3a2.45 2.45 0 1 0 4.9 0a2.45 2.45 0 1 0 -4.9 0ZM683.8 266.7a2.45 2.45 0 1 0 4.9 0a2.45 2.45 0 1 0 -4.9 0ZM686.6 266.9a2.45 2.45 0 1 0 4.9 0a2.45 2.45 0 1 0 -4.9 0ZM689.3 262.1a2.45 2.45 0 1 0 4.9 0a2.45 2.45 0 1 0 -4.9 0ZM692.1 262.7a2.45 2.45 0 1 0 4.9 0a2.45 2.45 0 1 0 -4.9 0ZM694.8 267.2a2.45 2.45 0 1 0 4.9 0a2.45 2.45 0 1 0 -4.9 0ZM697.6 260.2a2.45 2.45 0 1 0 4.9 0a2.45 2.45 0 1 0 -4.9 0ZM700.3 266.4a2.45 2.45 0 1 0 4.9 0a2.45 2.45 0 1 0 -4.9 0ZM703.1 261.1a2.45 2.45 0 1 0 4.9 0a2.45 2.45 0 1 0 -4.9 0ZM705.8 266.1a2.45 2.45 0 1 0 4.9 0a2.45 2.45 0 1 0 -4.9 0ZM708.6 262.9a2.45 2.45 0 1 0 4.9 0a2.45 2.45 0 1 0 -4.9 0ZM711.3 271.3a2.45 2.45 0 1 0 4.9 0a2.45 2.45 0 1 0 -4.9 0ZM714.1 270.0a2.45 2.45 0 1 0 4.9 0a2.45 2.45 0 1 0 -4.9 0ZM716.9 265.2a2.45 2.45 0 1 0 4.9 0a2.45 2.45 0 1 0 -4.9 0ZM719.6 260.5a2.45 2.45 0 1 0 4.9 0a2.45 2.45 0 1 0 -4.9 0ZM722.4 263.3a2.45 2.45 0 1 0 4.9 0a2.45 2.45 0 1 0 -4.9 0ZM725.1 265.8a2.45 2.45 0 1 0 4.9 0a2.45 2.45 0 1 0 -4.9 0ZM727.9 263.3a2.45 2.45 0 1 0 4.9 0a2.45 2.45 0 1 0 -4.9 0ZM730.6 266.8a2.45 2.45 0 1 0 4.9 0a2.45 2.45 0 1 0 -4.9 0ZM733.4 269.4a2.45 2.45 0 1 0 4.9 0a2.45 2.45 0 1 0 -4.9 0ZM736.1 266.6a2.45 2.45 0 1 0 4.9 0a2.45 2.45 0 1 0 -4.9 0ZM738.9 265.1a2.45 2.45 0 1 0 4.9 0a2.45 2.45 0 1 0 -4.9 0ZM741.6 268.6a2.45 2.45 0 1 0 4.9 0a2.45 2.45 0 1 0 -4.9 0ZM744.4 265.7a2.45 2.45 0 1 0 4.9 0a2.45 2.45 0 1 0 -4.9 0ZM747.1 268.9a2.45 2.45 0 1 0 4.9 0a2.45 2.45 0 1 0 -4.9 0ZM749.9 265.7a2.45 2.45 0 1 0 4.9 0a2.45 2.45 0 1 0 -4.9 0ZM752.7 271.2a2.45 2.45 0 1 0 4.9 0a2.45 2.45 0 1 0 -4.9 0ZM755.4 266.1a2.45 2.45 0 1 0 4.9 0a2.45 2.45 0 1 0 -4.9 0ZM758.2 263.1a2.45 2.45 0 1 0 4.9 0a2.45 2.45 0 1 0 -4.9 0ZM760.9 266.3a2.45 2.45 0 1 0 4.9 0a2.45 2.45 0 1 0 -4.9 0ZM763.7 264.4a2.45 2.45 0 1 0 4.9 0a2.45 2.45 0 1 0 -4.9 0ZM766.4 263.3a2.45 2.45 0 1 0 4.9 0a2.45 2.45 0 1 0 -4.9 0ZM769.2 265.6a2.45 2.45 0 1 0 4.9 0a2.45 2.45 0 1 0 -4.9 0ZM771.9 268.6a2.45 2.45 0 1 0 4.9 0a2.45 2.45 0 1 0 -4.9 0ZM774.7 260.2a2.45 2.45 0 1 0 4.9 0a2.45 2.45 0 1 0 -4.9 0ZM777.4 265.5a2.45 2.45 0 1 0 4.9 0a2.45 2.45 0 1 0 -4.9 0ZM780.2 265.8a2.45 2.45 0 1 0 4.9 0a2.45 2.45 0 1 0 -4.9 0ZM783.0 265.8a2.45 2.45 0 1 0 4.9 0a2.45 2.45 0 1 0 -4.9 0ZM785.7 268.8a2.45 2.45 0 1 0 4.9 0a2.45 2.45 0 1 0 -4.9 0ZM788.5 262.7a2.45 2.45 0 1 0 4.9 0a2.45 2.45 0 1 0 -4.9 0ZM791.2 267.9a2.45 2.45 0 1 0 4.9 0a2.45 2.45 0 1 0 -4.9 0ZM794.0 265.9a2.45 2.45 0 1 0 4.9 0a2.45 2.45 0 1 0 -4.9 0ZM796.7 266.7a2.45 2.45 0 1 0 4.9 0a2.45 2.45 0 1 0 -4.9 0ZM799.5 265.7a2.45 2.45 0 1 0 4.9 0a2.45 2.45 0 1 0 -4.9 0ZM802.2 265.3a2.45 2.45 0 1 0 4.9 0a2.45 2.45 0 1 0 -4.9 0ZM805.0 264.7a2.45 2.45 0 1 0 4.9 0a2.45 2.45 0 1 0 -4.9 0ZM807.7 267.4a2.45 2.45 0 1 0 4.9 0a2.45 2.45 0 1 0 -4.9 0ZM810.5 272.9a2.45 2.45 0 1 0 4.9 0a2.45 2.45 0 1 0 -4.9 0ZM813.3 270.4a2.45 2.45 0 1 0 4.9 0a2.45 2.45 0 1 0 -4.9 0ZM816.0 269.5a2.45 2.45 0 1 0 4.9 0a2.45 2.45 0 1 0 -4.9 0ZM818.8 268.5a2.45 2.45 0 1 0 4.9 0a2.45 2.45 0 1 0 -4.9 0ZM821.5 265.2a2.45 2.45 0 1 0 4.9 0a2.45 2.45 0 1 0 -4.9 0ZM824.3 268.1a2.45 2.45 0 1 0 4.9 0a2.45 2.45 0 1 0 -4.9 0ZM827.0 273.0a2.45 2.45 0 1 0 4.9 0a2.45 2.45 0 1 0 -4.9 0ZM829.8 263.3a2.45 2.45 0 1 0 4.9 0a2.45 2.45 0 1 0 -4.9 0ZM832.5 268.6a2.45 2.45 0 1 0 4.9 0a2.45 2.45 0 1 0 -4.9 0ZM835.3 269.8a2.45 2.45 0 1 0 4.9 0a2.45 2.45 0 1 0 -4.9 0ZM838.0 267.7a2.45 2.45 0 1 0 4.9 0a2.45 2.45 0 1 0 -4.9 0ZM840.8 269.0a2.45 2.45 0 1 0 4.9 0a2.45 2.45 0 1 0 -4.9 0ZM843.6 271.0a2.45 2.45 0 1 0 4.9 0a2.45 2.45 0 1 0 -4.9 0ZM846.3 273.4a2.45 2.45 0 1 0 4.9 0a2.45 2.45 0 1 0 -4.9 0ZM849.1 271.3a2.45 2.45 0 1 0 4.9 0a2.45 2.45 0 1 0 -4.9 0ZM851.8 272.1a2.45 2.45 0 1 0 4.9 0a2.45 2.45 0 1 0 -4.9 0ZM854.6 268.2a2.45 2.45 0 1 0 4.9 0a2.45 2.45 0 1 0 -4.9 0ZM857.3 269.3a2.45 2.45 0 1 0 4.9 0a2.45 2.45 0 1 0 -4.9 0ZM860.1 267.4a2.45 2.45 0 1 0 4.9 0a2.45 2.45 0 1 0 -4.9 0ZM862.8 267.6a2.45 2.45 0 1 0 4.9 0a2.45 2.45 0 1 0 -4.9 0ZM865.6 265.3a2.45 2.45 0 1 0 4.9 0a2.45 2.45 0 1 0 -4.9 0ZM868.3 268.5a2.45 2.45 0 1 0 4.9 0a2.45 2.45 0 1 0 -4.9 0ZM871.1 271.2a2.45 2.45 0 1 0 4.9 0a2.45 2.45 0 1 0 -4.9 0ZM873.9 266.7a2.45 2.45 0 1 0 4.9 0a2.45 2.45 0 1 0 -4.9 0ZM876.6 267.4a2.45 2.45 0 1 0 4.9 0a2.45 2.45 0 1 0 -4.9 0ZM879.4 268.6a2.45 2.45 0 1 0 4.9 0a2.45 2.45 0 1 0 -4.9 0ZM882.1 266.9a2.45 2.45 0 1 0 4.9 0a2.45 2.45 0 1 0 -4.9 0ZM884.9 269.5a2.45 2.45 0 1 0 4.9 0a2.45 2.45 0 1 0 -4.9 0ZM887.6 267.7a2.45 2.45 0 1 0 4.9 0a2.45 2.45 0 1 0 -4.9 0ZM890.4 263.2a2.45 2.45 0 1 0 4.9 0a2.45 2.45 0 1 0 -4.9 0ZM893.1 263.1a2.45 2.45 0 1 0 4.9 0a2.45 2.45 0 1 0 -4.9 0ZM895.9 268.4a2.45 2.45 0 1 0 4.9 0a2.45 2.45 0 1 0 -4.9 0ZM898.6 268.8a2.45 2.45 0 1 0 4.9 0a2.45 2.45 0 1 0 -4.9 0ZM901.4 270.2a2.45 2.45 0 1 0 4.9 0a2.45 2.45 0 1 0 -4.9 0ZM904.2 267.8a2.45 2.45 0 1 0 4.9 0a2.45 2.45 0 1 0 -4.9 0ZM906.9 267.4a2.45 2.45 0 1 0 4.9 0a2.45 2.45 0 1 0 -4.9 0ZM909.7 262.0a2.45 2.45 0 1 0 4.9 0a2.45 2.45 0 1 0 -4.9 0ZM912.4 270.3a2.45 2.45 0 1 0 4.9 0a2.45 2.45 0 1 0 -4.9 0ZM915.2 264.3a2.45 2.45 0 1 0 4.9 0a2.45 2.45 0 1 0 -4.9 0ZM917.9 269.5a2.45 2.45 0 1 0 4.9 0a2.45 2.45 0 1 0 -4.9 0ZM920.7 263.6a2.45 2.45 0 1 0 4.9 0a2.45 2.45 0 1 0 -4.9 0ZM923.4 264.3a2.45 2.45 0 1 0 4.9 0a2.45 2.45 0 1 0 -4.9 0ZM926.2 266.9a2.45 2.45 0 1 0 4.9 0a2.45 2.45 0 1 0 -4.9 0ZM928.9 265.4a2.45 2.45 0 1 0 4.9 0a2.45 2.45 0 1 0 -4.9 0ZM931.7 264.4a2.45 2.45 0 1 0 4.9 0a2.45 2.45 0 1 0 -4.9 0ZM934.4 269.1a2.45 2.45 0 1 0 4.9 0a2.45 2.45 0 1 0 -4.9 0Z" fill="#ffff00" />
<path d="M562.3 314.7 L565.1 318.8 L567.8 311.7 L570.6 317.5 L573.3 313.9 L576.1 313.4 L578.8 320.9 L581.6 315.7 L584.3 314.4 L587.1 317.0 L589.8 318.7 L592.6 314.8 L595.4 316.5 L598.1 311.2 L600.9 312.7 L603.6 312.7 L606.4 309.5 L609.1 308.5 L611.9 308.0 L614.6 312.8 L617.4 313.6 L620.1 313.2 L622.9 314.5 L625.7 309.7 L628.4 313.6 L631.2 315.1 L633.9 317.1 L636.7 311.8 L639.4 312.7 L642.2 307.1 L644.9 311.8 L647.7 306.7 L650.4 308.5 L653.2 317.5 L655.9 307.1 L658.7 316.3 L661.5 315.8 L664.2 313.5 L667.0 315.9 L669.7 316.4 L672.5 318.3 L675.2 314.1 L678.0 312.3 L680.7 312.0 L683.5 310.7 L686.2 313.8 L689.0 311.6 L691.8 317.8 L694.5 308.3 L697.3 309.8 L700.0 310.5 L702.8 306.7 L705.5 320.1 L708.3 306.7 L711.0 312.5 L713.8 312.3 L716.5 319.9 L719.3 308.1 L722.1 317.4 L724.8 312.2 L727.6 313.6 L730.3 312.0 L733.1 316.3 L735.8 310.7 L738.6 313.7 L741.3 315.5 L744.1 321.0 L746.8 306.8 L749.6 318.8 L752.4 318.2 L755.1 313.2 L757.9 315.3 L760.6 312.9 L763.4 320.0 L766.1 315.8 L768.9 313.8 L771.6 313.5 L774.4 313.6 L777.1 313.7 L779.9 311.2 L782.7 321.2 L785.4 308.5 L788.2 306.7 L790.9 313.0 L793.7 313.7 L796.4 315.6 L799.2 313.8 L801.9 313.8 L804.7 315.5 L807.4 317.9 L810.2 313.3 L813.0 313.0 L815.7 321.0 L818.5 317.0 L821.2 311.3 L824.0 322.1 L826.7 318.0 L829.5 312.8 L832.2 310.1 L835.0 314.9 L837.7 311.6 L840.5 310.4 L843.2 309.4 L846.0 312.0 L848.8 318.0 L851.5 313.3 L854.3 309.2 L857.0 316.1 L859.8 314.8 L862.5 317.4 L865.3 319.0 L868.0 314.4 L870.8 313.9 L873.5 314.2 L876.3 310.4 L879.1 316.3 L881.8 319.4 L884.6 315.6 L887.3 313.7 L890.1 313.4 L892.8 311.5 L895.6 311.2 L898.3 312.6 L901.1 311.2 L903.8 312.5 L906.6 308.7 L909.4 314.9 L912.1 314.6 L914.9 310.4 L917.6 306.7 L920.4 313.4 L923.1 318.1 L925.9 312.3 L928.6 312.5 L931.4 312.2 L934.1 316.4 L936.9 311.4" fill="none" stroke="#9370db" stroke-width="0.9" stroke-linejoin="round"/>
<path d="M559.8 314.7a2.45 2.45 0 1 0 4.9 0a2.45 2.45 0 1 0 -4.9 0ZM562.6 318.8a2.45 2.45 0 1 0 4.9 0a2.45 2.45 0 1 0 -4.9 0ZM565.4 311.7a2.45 2.45 0 1 0 4.9 0a2.45 2.45 0 1 0 -4.9 0ZM568.1 317.5a2.45 2.45 0 1 0 4.9 0a2.45 2.45 0 1 0 -4.9 0ZM570.9 313.9a2.45 2.45 0 1 0 4.9 0a2.45 2.45 0 1 0 -4.9 0ZM573.6 313.4a2.45 2.45 0 1 0 4.9 0a2.45 2.45 0 1 0 -4.9 0ZM576.4 320.9a2.45 2.45 0 1 0 4.9 0a2.45 2.45 0 1 0 -4.9 0ZM579.1 315.7a2.45 2.45 0 1 0 4.9 0a2.45 2.45 0 1 0 -4.9 0ZM581.9 314.4a2.45 2.45 0 1 0 4.9 0a2.45 2.45 0 1 0 -4.9 0ZM584.6 317.0a2.45 2.45 0 1 0 4.9 0a2.45 2.45 0 1 0 -4.9 0ZM587.4 318.7a2.45 2.45 0 1 0 4.9 0a2.45 2.45 0 1 0 -4.9 0ZM590.1 314.8a2.45 2.45 0 1 0 4.9 0a2.45 2.45 0 1 0 -4.9 0ZM592.9 316.5a2.45 2.45 0 1 0 4.9 0a2.45 2.45 0 1 0 -4.9 0ZM595.7 311.2a2.45 2.45 0 1 0 4.9 0a2.45 2.45 0 1 0 -4.9 0ZM598.4 312.7a2.45 2.45 0 1 0 4.9 0a2.45 2.45 0 1 0 -4.9 0ZM601.2 312.7a2.45 2.45 0 1 0 4.9 0a2.45 2.45 0 1 0 -4.9 0ZM603.9 309.5a2.45 2.45 0 1 0 4.9 0a2.45 2.45 0 1 0 -4.9 0ZM606.7 308.5a2.45 2.45 0 1 0 4.9 0a2.45 2.45 0 1 0 -4.9 0ZM609.4 308.0a2.45 2.45 0 1 0 4.9 0a2.45 2.45 0 1 0 -4.9 0ZM612.2 312.8a2.45 2.45 0 1 0 4.9 0a2.45 2.45 0 1 0 -4.9 0ZM614.9 313.6a2.45 2.45 0 1 0 4.9 0a2.45 2.45 0 1 0 -4.9 0ZM617.7 313.2a2.45 2.45 0 1 0 4.9 0a2.45 2.45 0 1 0 -4.9 0ZM620.4 314.5a2.45 2.45 0 1 0 4.9 0a2.45 2.45 0 1 0 -4.9 0ZM623.2 309.7a2.45 2.45 0 1 0 4.9 0a2.45 2.45 0 1 0 -4.9 0ZM626.0 313.6a2.45 2.45 0 1 0 4.9 0a2.45 2.45 0 1 0 -4.9 0ZM628.7 315.1a2.45 2.45 0 1 0 4.9 0a2.45 2.45 0 1 0 -4.9 0ZM631.5 317.1a2.45 2.45 0 1 0 4.9 0a2.45 2.45 0 1 0 -4.9 0ZM634.2 311.8a2.45 2.45 0 1 0 4.9 0a2.45 2.45 0 1 0 -4.9 0ZM637.0 312.7a2.45 2.45 0 1 0 4.9 0a2.45 2.45 0 1 0 -4.9 0ZM639.7 307.1a2.45 2.45 0 1 0 4.9 0a2.45 2.45 0 1 0 -4.9 0ZM642.5 311.8a2.45 2.45 0 1 0 4.9 0a2.45 2.45 0 1 0 -4.9 0ZM645.2 306.7a2.45 2.45 0 1 0 4.9 0a2.45 2.45 0 1 0 -4.9 0ZM648.0 308.5a2.45 2.45 0 1 0 4.9 0a2.45 2.45 0 1 0 -4.9 0ZM650.7 317.5a2.45 2.45 0 1 0 4.9 0a2.45 2.45 0 1 0 -4.9 0ZM653.5 307.1a2.45 2.45 0 1 0 4.9 0a2.45 2.45 0 1 0 -4.9 0ZM656.3 316.3a2.45 2.45 0 1 0 4.9 0a2.45 2.45 0 1 0 -4.9 0ZM659.0 315.8a2.45 2.45 0 1 0 4.9 0a2.45 2.45 0 1 0 -4.9 0ZM661.8 313.5a2.45 2.45 0 1 0 4.9 0a2.45 2.45 0 1 0 -4.9 0ZM664.5 315.9a2.45 2.45 0 1 0 4.9 0a2.45 2.45 0 1 0 -4.9 0ZM667.3 316.4a2.45 2.45 0 1 0 4.9 0a2.45 2.45 0 1 0 -4.9 0ZM670.0 318.3a2.45 2.45 0 1 0 4.9 0a2.45 2.45 0 1 0 -4.9 0ZM672.8 314.1a2.45 2.45 0 1 0 4.9 0a2.45 2.45 0 1 0 -4.9 0ZM675.5 312.3a2.45 2.45 0 1 0 4.9 0a2.45 2.45 0 1 0 -4.9 0ZM678.3 312.0a2.45 2.45 0 1 0 4.9 0a2.45 2.45 0 1 0 -4.9 0ZM681.0 310.7a2.45 2.45 0 1 0 4.9 0a2.45 2.45 0 1 0 -4.9 0ZM683.8 313.8a2.45 2.45 0 1 0 4.9 0a2.45 2.45 0 1 0 -4.9 0ZM686.6 311.6a2.45 2.45 0 1 0 4.9 0a2.45 2.45 0 1 0 -4.9 0ZM689.3 317.8a2.45 2.45 0 1 0 4.9 0a2.45 2.45 0 1 0 -4.9 0ZM692.1 308.3a2.45 2.45 0 1 0 4.9 0a2.45 2.45 0 1 0 -4.9 0ZM694.8 309.8a2.45 2.45 0 1 0 4.9 0a2.45 2.45 0 1 0 -4.9 0ZM697.6 310.5a2.45 2.45 0 1 0 4.9 0a2.45 2.45 0 1 0 -4.9 0ZM700.3 306.7a2.45 2.45 0 1 0 4.9 0a2.45 2.45 0 1 0 -4.9 0ZM703.1 320.1a2.45 2.45 0 1 0 4.9 0a2.45 2.45 0 1 0 -4.9 0ZM705.8 306.7a2.45 2.45 0 1 0 4.9 0a2.45 2.45 0 1 0 -4.9 0ZM708.6 312.5a2.45 2.45 0 1 0 4.9 0a2.45 2.45 0 1 0 -4.9 0ZM711.3 312.3a2.45 2.45 0 1 0 4.9 0a2.45 2.45 0 1 0 -4.9 0ZM714.1 319.9a2.45 2.45 0 1 0 4.9 0a2.45 2.45 0 1 0 -4.9 0ZM716.9 308.1a2.45 2.45 0 1 0 4.9 0a2.45 2.45 0 1 0 -4.9 0ZM719.6 317.4a2.45 2.45 0 1 0 4.9 0a2.45 2.45 0 1 0 -4.9 0ZM722.4 312.2a2.45 2.45 0 1 0 4.9 0a2.45 2.45 0 1 0 -4.9 0ZM725.1 313.6a2.45 2.45 0 1 0 4.9 0a2.45 2.45 0 1 0 -4.9 0ZM727.9 312.0a2.45 2.45 0 1 0 4.9 0a2.45 2.45 0 1 0 -4.9 0ZM730.6 316.3a2.45 2.45 0 1 0 4.9 0a2.45 2.45 0 1 0 -4.9 0ZM733.4 310.7a2.45 2.45 0 1 0 4.9 0a2.45 2.45 0 1 0 -4.9 0ZM736.1 313.7a2.45 2.45 0 1 0 4.9 0a2.45 2.45 0 1 0 -4.9 0ZM738.9 315.5a2.45 2.45 0 1 0 4.9 0a2.45 2.45 0 1 0 -4.9 0ZM741.6 321.0a2.45 2.45 0 1 0 4.9 0a2.45 2.45 0 1 0 -4.9 0ZM744.4 306.8a2.45 2.45 0 1 0 4.9 0a2.45 2.45 0 1 0 -4.9 0ZM747.1 318.8a2.45 2.45 0 1 0 4.9 0a2.45 2.45 0 1 0 -4.9 0ZM749.9 318.2a2.45 2.45 0 1 0 4.9 0a2.45 2.45 0 1 0 -4.9 0ZM752.7 313.2a2.45 2.45 0 1 0 4.9 0a2.45 2.45 0 1 0 -4.9 0ZM755.4 315.3a2.45 2.45 0 1 0 4.9 0a2.45 2.45 0 1 0 -4.9 0ZM758.2 312.9a2.45 2.45 0 1 0 4.9 0a2.45 2.45 0 1 0 -4.9 0ZM760.9 320.0a2.45 2.45 0 1 0 4.9 0a2.45 2.45 0 1 0 -4.9 0ZM763.7 315.8a2.45 2.45 0 1 0 4.9 0a2.45 2.45 0 1 0 -4.9 0ZM766.4 313.8a2.45 2.45 0 1 0 4.9 0a2.45 2.45 0 1 0 -4.9 0ZM769.2 313.5a2.45 2.45 0 1 0 4.9 0a2.45 2.45 0 1 0 -4.9 0ZM771.9 313.6a2.45 2.45 0 1 0 4.9 0a2.45 2.45 0 1 0 -4.9 0ZM774.7 313.7a2.45 2.45 0 1 0 4.9 0a2.45 2.45 0 1 0 -4.9 0ZM777.4 311.2a2.45 2.45 0 1 0 4.9 0a2.45 2.45 0 1 0 -4.9 0ZM780.2 321.2a2.45 2.45 0 1 0 4.9 0a2.45 2.45 0 1 0 -4.9 0ZM783.0 308.5a2.45 2.45 0 1 0 4.9 0a2.45 2.45 0 1 0 -4.9 0ZM785.7 306.7a2.45 2.45 0 1 0 4.9 0a2.45 2.45 0 1 0 -4.9 0ZM788.5 313.0a2.45 2.45 0 1 0 4.9 0a2.45 2.45 0 1 0 -4.9 0ZM791.2 313.7a2.45 2.45 0 1 0 4.9 0a2.45 2.45 0 1 0 -4.9 0ZM794.0 315.6a2.45 2.45 0 1 0 4.9 0a2.45 2.45 0 1 0 -4.9 0ZM796.7 313.8a2.45 2.45 0 1 0 4.9 0a2.45 2.45 0 1 0 -4.9 0ZM799.5 313.8a2.45 2.45 0 1 0 4.9 0a2.45 2.45 0 1 0 -4.9 0ZM802.2 315.5a2.45 2.45 0 1 0 4.9 0a2.45 2.45 0 1 0 -4.9 0ZM805.0 317.9a2.45 2.45 0 1 0 4.9 0a2.45 2.45 0 1 0 -4.9 0ZM807.7 313.3a2.45 2.45 0 1 0 4.9 0a2.45 2.45 0 1 0 -4.9 0ZM810.5 313.0a2.45 2.45 0 1 0 4.9 0a2.45 2.45 0 1 0 -4.9 0ZM813.3 321.0a2.45 2.45 0 1 0 4.9 0a2.45 2.45 0 1 0 -4.9 0ZM816.0 317.0a2.45 2.45 0 1 0 4.9 0a2.45 2.45 0 1 0 -4.9 0ZM818.8 311.3a2.45 2.45 0 1 0 4.9 0a2.45 2.45 0 1 0 -4.9 0ZM821.5 322.1a2.45 2.45 0 1 0 4.9 0a2.45 2.45 0 1 0 -4.9 0ZM824.3 318.0a2.45 2.45 0 1 0 4.9 0a2.45 2.45 0 1 0 -4.9 0ZM827.0 312.8a2.45 2.45 0 1 0 4.9 0a2.45 2.45 0 1 0 -4.9 0ZM829.8 310.1a2.45 2.45 0 1 0 4.9 0a2.45 2.45 0 1 0 -4.9 0ZM832.5 314.9a2.45 2.45 0 1 0 4.9 0a2.45 2.45 0 1 0 -4.9 0ZM835.3 311.6a2.45 2.45 0 1 0 4.9 0a2.45 2.45 0 1 0 -4.9 0ZM838.0 310.4a2.45 2.45 0 1 0 4.9 0a2.45 2.45 0 1 0 -4.9 0ZM840.8 309.4a2.45 2.45 0 1 0 4.9 0a2.45 2.45 0 1 0 -4.9 0ZM843.6 312.0a2.45 2.45 0 1 0 4.9 0a2.45 2.45 0 1 0 -4.9 0ZM846.3 318.0a2.45 2.45 0 1 0 4.9 0a2.45 2.45 0 1 0 -4.9 0ZM849.1 313.3a2.45 2.45 0 1 0 4.9 0a2.45 2.45 0 1 0 -4.9 0ZM851.8 309.2a2.45 2.45 0 1 0 4.9 0a2.45 2.45 0 1 0 -4.9 0ZM854.6 316.1a2.45 2.45 0 1 0 4.9 0a2.45 2.45 0 1 0 -4.9 0ZM857.3 314.8a2.45 2.45 0 1 0 4.9 0a2.45 2.45 0 1 0 -4.9 0ZM860.1 317.4a2.45 2.45 0 1 0 4.9 0a2.45 2.45 0 1 0 -4.9 0ZM862.8 319.0a2.45 2.45 0 1 0 4.9 0a2.45 2.45 0 1 0 -4.9 0ZM865.6 314.4a2.45 2.45 0 1 0 4.9 0a2.45 2.45 0 1 0 -4.9 0ZM868.3 313.9a2.45 2.45 0 1 0 4.9 0a2.45 2.45 0 1 0 -4.9 0ZM871.1 314.2a2.45 2.45 0 1 0 4.9 0a2.45 2.45 0 1 0 -4.9 0ZM873.9 310.4a2.45 2.45 0 1 0 4.9 0a2.45 2.45 0 1 0 -4.9 0ZM876.6 316.3a2.45 2.45 0 1 0 4.9 0a2.45 2.45 0 1 0 -4.9 0ZM879.4 319.4a2.45 2.45 0 1 0 4.9 0a2.45 2.45 0 1 0 -4.9 0ZM882.1 315.6a2.45 2.45 0 1 0 4.9 0a2.45 2.45 0 1 0 -4.9 0ZM884.9 313.7a2.45 2.45 0 1 0 4.9 0a2.45 2.45 0 1 0 -4.9 0ZM887.6 313.4a2.45 2.45 0 1 0 4.9 0a2.45 2.45 0 1 0 -4.9 0ZM890.4 311.5a2.45 2.45 0 1 0 4.9 0a2.45 2.45 0 1 0 -4.9 0ZM893.1 311.2a2.45 2.45 0 1 0 4.9 0a2.45 2.45 0 1 0 -4.9 0ZM895.9 312.6a2.45 2.45 0 1 0 4.9 0a2.45 2.45 0 1 0 -4.9 0ZM898.6 311.2a2.45 2.45 0 1 0 4.9 0a2.45 2.45 0 1 0 -4.9 0ZM901.4 312.5a2.45 2.45 0 1 0 4.9 0a2.45 2.45 0 1 0 -4.9 0ZM904.2 308.7a2.45 2.45 0 1 0 4.9 0a2.45 2.45 0 1 0 -4.9 0ZM906.9 314.9a2.45 2.45 0 1 0 4.9 0a2.45 2.45 0 1 0 -4.9 0ZM909.7 314.6a2.45 2.45 0 1 0 4.9 0a2.45 2.45 0 1 0 -4.9 0ZM912.4 310.4a2.45 2.45 0 1 0 4.9 0a2.45 2.45 0 1 0 -4.9 0ZM915.2 306.7a2.45 2.45 0 1 0 4.9 0a2.45 2.45 0 1 0 -4.9 0ZM917.9 313.4a2.45 2.45 0 1 0 4.9 0a2.45 2.45 0 1 0 -4.9 0ZM920.7 318.1a2.45 2.45 0 1 0 4.9 0a2.45 2.45 0 1 0 -4.9 0ZM923.4 312.3a2.45 2.45 0 1 0 4.9 0a2.45 2.45 0 1 0 -4.9 0ZM926.2 312.5a2.45 2.45 0 1 0 4.9 0a2.45 2.45 0 1 0 -4.9 0ZM928.9 312.2a2.45 2.45 0 1 0 4.9 0a2.45 2.45 0 1 0 -4.9 0ZM931.7 316.4a2.45 2.45 0 1 0 4.9 0a2.45 2.45 0 1 0 -4.9 0ZM934.4 311.4a2.45 2.45 0 1 0 4.9 0a2.45 2.45 0 1 0 -4.9 0Z" fill="#9370db" />
<line x1="523.30" y1="196.30" x2="523.30" y2="338.60" stroke="#fff" stroke-width="1.0" />
<line x1="523.30" y1="338.60" x2="975.30" y2="338.60" stroke="#fff" stroke-width="1.0" />
<line x1="519.40" y1="228.70" x2="523.30" y2="228.70" stroke="#fff" stroke-width="0.7" />
<text x="508.75" y="231.51" font-size="6.7" fill="#fff" textLength="9.45" lengthAdjust="spacingAndGlyphs" stroke="#fff" stroke-width="0.18">336</text>
<line x1="519.40" y1="241.50" x2="523.30" y2="241.50" stroke="#fff" stroke-width="0.7" />
<text x="508.75" y="244.31" font-size="6.7" fill="#fff" textLength="9.45" lengthAdjust="spacingAndGlyphs" stroke="#fff" stroke-width="0.18">335</text>
<line x1="519.40" y1="254.50" x2="523.30" y2="254.50" stroke="#fff" stroke-width="0.7" />
<text x="508.75" y="257.31" font-size="6.7" fill="#fff" textLength="9.45" lengthAdjust="spacingAndGlyphs" stroke="#fff" stroke-width="0.18">334</text>
<line x1="519.40" y1="267.50" x2="523.30" y2="267.50" stroke="#fff" stroke-width="0.7" />
<text x="508.75" y="270.31" font-size="6.7" fill="#fff" textLength="9.45" lengthAdjust="spacingAndGlyphs" stroke="#fff" stroke-width="0.18">333</text>
<line x1="519.40" y1="280.60" x2="523.30" y2="280.60" stroke="#fff" stroke-width="0.7" />
<text x="508.75" y="283.41" font-size="6.7" fill="#fff" textLength="9.45" lengthAdjust="spacingAndGlyphs" stroke="#fff" stroke-width="0.18">332</text>
<line x1="519.40" y1="293.60" x2="523.30" y2="293.60" stroke="#fff" stroke-width="0.7" />
<text x="508.75" y="296.41" font-size="6.7" fill="#fff" textLength="9.45" lengthAdjust="spacingAndGlyphs" stroke="#fff" stroke-width="0.18">331</text>
<line x1="519.40" y1="306.70" x2="523.30" y2="306.70" stroke="#fff" stroke-width="0.7" />
<text x="508.75" y="309.51" font-size="6.7" fill="#fff" textLength="9.45" lengthAdjust="spacingAndGlyphs" stroke="#fff" stroke-width="0.18">330</text>
<line x1="519.40" y1="319.70" x2="523.30" y2="319.70" stroke="#fff" stroke-width="0.7" />
<text x="508.75" y="322.51" font-size="6.7" fill="#fff" textLength="9.45" lengthAdjust="spacingAndGlyphs" stroke="#fff" stroke-width="0.18">329</text>
<line x1="519.40" y1="332.80" x2="523.30" y2="332.80" stroke="#fff" stroke-width="0.7" />
<text x="508.75" y="335.61" font-size="6.7" fill="#fff" textLength="9.45" lengthAdjust="spacingAndGlyphs" stroke="#fff" stroke-width="0.18">328</text>
<line x1="562.40" y1="338.60" x2="562.40" y2="342.60" stroke="#fff" stroke-width="0.8" />
<text x="560.82" y="352.91" font-size="6.7" fill="#fff" textLength="3.15" lengthAdjust="spacingAndGlyphs" stroke="#fff" stroke-width="0.18">0</text>
<line x1="594.60" y1="338.60" x2="594.60" y2="342.60" stroke="#fff" stroke-width="0.8" />
<text x="593.02" y="352.91" font-size="6.7" fill="#fff" textLength="3.15" lengthAdjust="spacingAndGlyphs" stroke="#fff" stroke-width="0.18">1</text>
<line x1="626.80" y1="338.60" x2="626.80" y2="342.60" stroke="#fff" stroke-width="0.8" />
<text x="625.22" y="352.91" font-size="6.7" fill="#fff" textLength="3.15" lengthAdjust="spacingAndGlyphs" stroke="#fff" stroke-width="0.18">2</text>
<line x1="659.00" y1="338.60" x2="659.00" y2="342.60" stroke="#fff" stroke-width="0.8" />
<text x="657.42" y="352.91" font-size="6.7" fill="#fff" textLength="3.15" lengthAdjust="spacingAndGlyphs" stroke="#fff" stroke-width="0.18">3</text>
<line x1="691.20" y1="338.60" x2="691.20" y2="342.60" stroke="#fff" stroke-width="0.8" />
<text x="689.62" y="352.91" font-size="6.7" fill="#fff" textLength="3.15" lengthAdjust="spacingAndGlyphs" stroke="#fff" stroke-width="0.18">4</text>
<line x1="723.40" y1="338.60" x2="723.40" y2="342.60" stroke="#fff" stroke-width="0.8" />
<text x="721.82" y="352.91" font-size="6.7" fill="#fff" textLength="3.15" lengthAdjust="spacingAndGlyphs" stroke="#fff" stroke-width="0.18">5</text>
<line x1="755.60" y1="338.60" x2="755.60" y2="342.60" stroke="#fff" stroke-width="0.8" />
<text x="754.02" y="352.91" font-size="6.7" fill="#fff" textLength="3.15" lengthAdjust="spacingAndGlyphs" stroke="#fff" stroke-width="0.18">6</text>
<line x1="787.80" y1="338.60" x2="787.80" y2="342.60" stroke="#fff" stroke-width="0.8" />
<text x="786.22" y="352.91" font-size="6.7" fill="#fff" textLength="3.15" lengthAdjust="spacingAndGlyphs" stroke="#fff" stroke-width="0.18">7</text>
<line x1="820.00" y1="338.60" x2="820.00" y2="342.60" stroke="#fff" stroke-width="0.8" />
<text x="818.42" y="352.91" font-size="6.7" fill="#fff" textLength="3.15" lengthAdjust="spacingAndGlyphs" stroke="#fff" stroke-width="0.18">8</text>
<line x1="852.20" y1="338.60" x2="852.20" y2="342.60" stroke="#fff" stroke-width="0.8" />
<text x="850.62" y="352.91" font-size="6.7" fill="#fff" textLength="3.15" lengthAdjust="spacingAndGlyphs" stroke="#fff" stroke-width="0.18">9</text>
<line x1="884.40" y1="338.60" x2="884.40" y2="342.60" stroke="#fff" stroke-width="0.8" />
<text x="881.25" y="352.91" font-size="6.7" fill="#fff" textLength="6.30" lengthAdjust="spacingAndGlyphs" stroke="#fff" stroke-width="0.18">10</text>
<line x1="916.60" y1="338.60" x2="916.60" y2="342.60" stroke="#fff" stroke-width="0.8" />
<text x="913.45" y="352.91" font-size="6.7" fill="#fff" textLength="6.30" lengthAdjust="spacingAndGlyphs" stroke="#fff" stroke-width="0.18">11</text>
<rect x="493.60" y="199.40" width="55.40" height="25.60" fill="#050505" stroke="#262626" stroke-width="0.6" />
<text x="495.00" y="209.90" font-size="8.6" fill="#fff" font-weight="700" textLength="52.00" lengthAdjust="spacingAndGlyphs" >Rt*A vs. Time</text>
<rect x="495.00" y="212.30" width="38.60" height="12.10" fill="#424242" stroke="#787878" stroke-width="0.7" />
<line x1="523.40" y1="212.30" x2="523.40" y2="224.40" stroke="#787878" stroke-width="0.7" />
<path d="M526.80 217.45 L528.50 219.25 L530.20 217.45" fill="none" stroke="#f0f0f0" stroke-width="1.0" />
<text x="496.80" y="221.03" font-size="6.9" fill="#ececec" textLength="14.60" lengthAdjust="spacingAndGlyphs" >Rt*A</text>
<rect x="495.00" y="342.50" width="39.00" height="12.10" fill="#424242" stroke="#787878" stroke-width="0.7" />
<line x1="522.70" y1="342.50" x2="522.70" y2="354.60" stroke="#787878" stroke-width="0.7" />
<path d="M526.65 347.65 L528.35 349.45 L530.05 347.65" fill="none" stroke="#f0f0f0" stroke-width="1.0" />
<text y="351.33" font-size="6.9" fill="#ececec"><tspan x="496.5" textLength="17.7" lengthAdjust="spacingAndGlyphs">Ω*cm</tspan><tspan x="514.6" dy="-2.4" font-size="4.4" font-weight="700">2</tspan></text>
<rect x="931.80" y="342.50" width="39.20" height="12.10" fill="#424242" stroke="#787878" stroke-width="0.7" />
<line x1="959.40" y1="342.50" x2="959.40" y2="354.60" stroke="#787878" stroke-width="0.7" />
<path d="M963.50 347.65 L965.20 349.45 L966.90 347.65" fill="none" stroke="#f0f0f0" stroke-width="1.0" />
<text x="933.80" y="351.23" font-size="6.9" fill="#ececec" textLength="12.20" lengthAdjust="spacingAndGlyphs" >min</text>
<text x="939.50" y="207.98" font-size="6.6" fill="#858585" font-style="italic" textLength="27.50" lengthAdjust="spacingAndGlyphs" >Auto Scale</text>
<path d="M71.5 409.1 L74.0 407.8 L76.6 407.7 L79.2 406.3 L81.7 406.5 L84.2 406.3 L86.8 404.4 L89.3 404.7 L91.9 404.6 L94.5 404.8 L97.0 402.3 L99.5 402.6 L102.1 401.7 L104.7 403.5 L107.2 402.1 L109.8 399.1 L112.3 400.9 L114.8 400.8 L117.4 399.8 L119.9 399.5 L122.5 398.1 L125.0 397.5 L127.6 398.9 L130.2 397.2 L132.7 397.4 L135.2 397.4 L137.8 396.5 L140.3 397.5 L142.9 397.1 L145.4 398.1 L148.0 396.8 L150.6 396.7 L153.1 395.5 L155.6 395.1 L158.2 393.6 L160.8 392.3 L163.3 393.9 L165.8 393.7 L168.4 393.0 L170.9 392.4 L173.5 391.1 L176.1 390.6 L178.6 390.6 L181.1 389.7 L183.7 391.6 L186.2 390.3 L188.8 391.5 L191.3 390.0 L193.9 391.6 L196.4 391.2 L199.0 388.5 L201.5 388.9 L204.1 390.7 L206.6 389.0 L209.2 390.2 L211.8 388.1 L214.3 386.6 L216.8 387.7 L219.4 387.6 L221.9 386.1 L224.5 385.7 L227.0 386.7 L229.6 388.8 L232.1 388.4 L234.7 386.3 L238.9 400.6 L242.3 386.3 L244.9 385.7 L247.4 385.6 L250.0 387.9 L252.5 386.2 L255.1 387.4 L257.6 387.2 L260.2 386.5 L262.8 387.8 L265.3 385.7 L267.9 386.9 L270.4 385.1 L272.9 386.0 L275.5 385.4 L278.0 385.7 L280.6 387.7 L283.1 386.9 L285.7 385.1 L288.2 386.4 L293.8 371.6 L296.3 383.3 L299.0 380.0 L301.8 386.4 L304.1 459.6 L307.2 436.9 L310.6 440.2 L312.6 391.6 L315.2 391.8 L318.3 427.8 L321.0 391.2 L323.9 390.7 L326.5 391.2 L329.0 392.6 L331.6 392.0 L334.1 390.3 L336.7 392.7 L339.2 389.9 L341.8 389.6 L344.3 390.8 L346.9 389.0 L349.4 388.5 L352.0 386.3 L354.5 386.4 L357.1 387.8 L359.6 386.8 L362.2 387.9 L364.8 387.2 L367.3 387.4 L369.8 388.9 L372.4 387.5 L374.9 387.7 L377.5 388.6 L380.0 386.5 L382.6 386.4 L385.1 388.7 L387.7 388.4 L390.2 386.7 L392.8 386.5 L395.3 388.1 L397.9 388.7 L403.0 389.3" fill="none" stroke="#9370db" stroke-width="0.9" stroke-linejoin="round"/>
<path d="M69.2 409.1a2.35 2.35 0 1 0 4.7 0a2.35 2.35 0 1 0 -4.7 0ZM71.7 407.8a2.35 2.35 0 1 0 4.7 0a2.35 2.35 0 1 0 -4.7 0ZM74.2 407.7a2.35 2.35 0 1 0 4.7 0a2.35 2.35 0 1 0 -4.7 0ZM76.8 406.3a2.35 2.35 0 1 0 4.7 0a2.35 2.35 0 1 0 -4.7 0ZM79.4 406.5a2.35 2.35 0 1 0 4.7 0a2.35 2.35 0 1 0 -4.7 0ZM81.9 406.3a2.35 2.35 0 1 0 4.7 0a2.35 2.35 0 1 0 -4.7 0ZM84.5 404.4a2.35 2.35 0 1 0 4.7 0a2.35 2.35 0 1 0 -4.7 0ZM87.0 404.7a2.35 2.35 0 1 0 4.7 0a2.35 2.35 0 1 0 -4.7 0ZM89.6 404.6a2.35 2.35 0 1 0 4.7 0a2.35 2.35 0 1 0 -4.7 0ZM92.1 404.8a2.35 2.35 0 1 0 4.7 0a2.35 2.35 0 1 0 -4.7 0ZM94.7 402.3a2.35 2.35 0 1 0 4.7 0a2.35 2.35 0 1 0 -4.7 0ZM97.2 402.6a2.35 2.35 0 1 0 4.7 0a2.35 2.35 0 1 0 -4.7 0ZM99.8 401.7a2.35 2.35 0 1 0 4.7 0a2.35 2.35 0 1 0 -4.7 0ZM102.3 403.5a2.35 2.35 0 1 0 4.7 0a2.35 2.35 0 1 0 -4.7 0ZM104.8 402.1a2.35 2.35 0 1 0 4.7 0a2.35 2.35 0 1 0 -4.7 0ZM107.4 399.1a2.35 2.35 0 1 0 4.7 0a2.35 2.35 0 1 0 -4.7 0ZM110.0 400.9a2.35 2.35 0 1 0 4.7 0a2.35 2.35 0 1 0 -4.7 0ZM112.5 400.8a2.35 2.35 0 1 0 4.7 0a2.35 2.35 0 1 0 -4.7 0ZM115.1 399.8a2.35 2.35 0 1 0 4.7 0a2.35 2.35 0 1 0 -4.7 0ZM117.6 399.5a2.35 2.35 0 1 0 4.7 0a2.35 2.35 0 1 0 -4.7 0ZM120.2 398.1a2.35 2.35 0 1 0 4.7 0a2.35 2.35 0 1 0 -4.7 0ZM122.7 397.5a2.35 2.35 0 1 0 4.7 0a2.35 2.35 0 1 0 -4.7 0ZM125.2 398.9a2.35 2.35 0 1 0 4.7 0a2.35 2.35 0 1 0 -4.7 0ZM127.8 397.2a2.35 2.35 0 1 0 4.7 0a2.35 2.35 0 1 0 -4.7 0ZM130.3 397.4a2.35 2.35 0 1 0 4.7 0a2.35 2.35 0 1 0 -4.7 0ZM132.9 397.4a2.35 2.35 0 1 0 4.7 0a2.35 2.35 0 1 0 -4.7 0ZM135.5 396.5a2.35 2.35 0 1 0 4.7 0a2.35 2.35 0 1 0 -4.7 0ZM138.0 397.5a2.35 2.35 0 1 0 4.7 0a2.35 2.35 0 1 0 -4.7 0ZM140.5 397.1a2.35 2.35 0 1 0 4.7 0a2.35 2.35 0 1 0 -4.7 0ZM143.1 398.1a2.35 2.35 0 1 0 4.7 0a2.35 2.35 0 1 0 -4.7 0ZM145.7 396.8a2.35 2.35 0 1 0 4.7 0a2.35 2.35 0 1 0 -4.7 0ZM148.2 396.7a2.35 2.35 0 1 0 4.7 0a2.35 2.35 0 1 0 -4.7 0ZM150.8 395.5a2.35 2.35 0 1 0 4.7 0a2.35 2.35 0 1 0 -4.7 0ZM153.3 395.1a2.35 2.35 0 1 0 4.7 0a2.35 2.35 0 1 0 -4.7 0ZM155.8 393.6a2.35 2.35 0 1 0 4.7 0a2.35 2.35 0 1 0 -4.7 0ZM158.4 392.3a2.35 2.35 0 1 0 4.7 0a2.35 2.35 0 1 0 -4.7 0ZM161.0 393.9a2.35 2.35 0 1 0 4.7 0a2.35 2.35 0 1 0 -4.7 0ZM163.5 393.7a2.35 2.35 0 1 0 4.7 0a2.35 2.35 0 1 0 -4.7 0ZM166.0 393.0a2.35 2.35 0 1 0 4.7 0a2.35 2.35 0 1 0 -4.7 0ZM168.6 392.4a2.35 2.35 0 1 0 4.7 0a2.35 2.35 0 1 0 -4.7 0ZM171.2 391.1a2.35 2.35 0 1 0 4.7 0a2.35 2.35 0 1 0 -4.7 0ZM173.7 390.6a2.35 2.35 0 1 0 4.7 0a2.35 2.35 0 1 0 -4.7 0ZM176.2 390.6a2.35 2.35 0 1 0 4.7 0a2.35 2.35 0 1 0 -4.7 0ZM178.8 389.7a2.35 2.35 0 1 0 4.7 0a2.35 2.35 0 1 0 -4.7 0ZM181.3 391.6a2.35 2.35 0 1 0 4.7 0a2.35 2.35 0 1 0 -4.7 0ZM183.9 390.3a2.35 2.35 0 1 0 4.7 0a2.35 2.35 0 1 0 -4.7 0ZM186.5 391.5a2.35 2.35 0 1 0 4.7 0a2.35 2.35 0 1 0 -4.7 0ZM189.0 390.0a2.35 2.35 0 1 0 4.7 0a2.35 2.35 0 1 0 -4.7 0ZM191.5 391.6a2.35 2.35 0 1 0 4.7 0a2.35 2.35 0 1 0 -4.7 0ZM194.1 391.2a2.35 2.35 0 1 0 4.7 0a2.35 2.35 0 1 0 -4.7 0ZM196.7 388.5a2.35 2.35 0 1 0 4.7 0a2.35 2.35 0 1 0 -4.7 0ZM199.2 388.9a2.35 2.35 0 1 0 4.7 0a2.35 2.35 0 1 0 -4.7 0ZM201.8 390.7a2.35 2.35 0 1 0 4.7 0a2.35 2.35 0 1 0 -4.7 0ZM204.3 389.0a2.35 2.35 0 1 0 4.7 0a2.35 2.35 0 1 0 -4.7 0ZM206.8 390.2a2.35 2.35 0 1 0 4.7 0a2.35 2.35 0 1 0 -4.7 0ZM209.4 388.1a2.35 2.35 0 1 0 4.7 0a2.35 2.35 0 1 0 -4.7 0ZM211.9 386.6a2.35 2.35 0 1 0 4.7 0a2.35 2.35 0 1 0 -4.7 0ZM214.5 387.7a2.35 2.35 0 1 0 4.7 0a2.35 2.35 0 1 0 -4.7 0ZM217.0 387.6a2.35 2.35 0 1 0 4.7 0a2.35 2.35 0 1 0 -4.7 0ZM219.6 386.1a2.35 2.35 0 1 0 4.7 0a2.35 2.35 0 1 0 -4.7 0ZM222.2 385.7a2.35 2.35 0 1 0 4.7 0a2.35 2.35 0 1 0 -4.7 0ZM224.7 386.7a2.35 2.35 0 1 0 4.7 0a2.35 2.35 0 1 0 -4.7 0ZM227.2 388.8a2.35 2.35 0 1 0 4.7 0a2.35 2.35 0 1 0 -4.7 0ZM229.8 388.4a2.35 2.35 0 1 0 4.7 0a2.35 2.35 0 1 0 -4.7 0ZM232.3 386.3a2.35 2.35 0 1 0 4.7 0a2.35 2.35 0 1 0 -4.7 0ZM236.6 400.6a2.35 2.35 0 1 0 4.7 0a2.35 2.35 0 1 0 -4.7 0ZM240.0 386.3a2.35 2.35 0 1 0 4.7 0a2.35 2.35 0 1 0 -4.7 0ZM242.5 385.7a2.35 2.35 0 1 0 4.7 0a2.35 2.35 0 1 0 -4.7 0ZM245.1 385.6a2.35 2.35 0 1 0 4.7 0a2.35 2.35 0 1 0 -4.7 0ZM247.7 387.9a2.35 2.35 0 1 0 4.7 0a2.35 2.35 0 1 0 -4.7 0ZM250.2 386.2a2.35 2.35 0 1 0 4.7 0a2.35 2.35 0 1 0 -4.7 0ZM252.8 387.4a2.35 2.35 0 1 0 4.7 0a2.35 2.35 0 1 0 -4.7 0ZM255.3 387.2a2.35 2.35 0 1 0 4.7 0a2.35 2.35 0 1 0 -4.7 0ZM257.8 386.5a2.35 2.35 0 1 0 4.7 0a2.35 2.35 0 1 0 -4.7 0ZM260.4 387.8a2.35 2.35 0 1 0 4.7 0a2.35 2.35 0 1 0 -4.7 0ZM262.9 385.7a2.35 2.35 0 1 0 4.7 0a2.35 2.35 0 1 0 -4.7 0ZM265.5 386.9a2.35 2.35 0 1 0 4.7 0a2.35 2.35 0 1 0 -4.7 0ZM268.0 385.1a2.35 2.35 0 1 0 4.7 0a2.35 2.35 0 1 0 -4.7 0ZM270.6 386.0a2.35 2.35 0 1 0 4.7 0a2.35 2.35 0 1 0 -4.7 0ZM273.1 385.4a2.35 2.35 0 1 0 4.7 0a2.35 2.35 0 1 0 -4.7 0ZM275.7 385.7a2.35 2.35 0 1 0 4.7 0a2.35 2.35 0 1 0 -4.7 0ZM278.2 387.7a2.35 2.35 0 1 0 4.7 0a2.35 2.35 0 1 0 -4.7 0ZM280.8 386.9a2.35 2.35 0 1 0 4.7 0a2.35 2.35 0 1 0 -4.7 0ZM283.3 385.1a2.35 2.35 0 1 0 4.7 0a2.35 2.35 0 1 0 -4.7 0ZM285.9 386.4a2.35 2.35 0 1 0 4.7 0a2.35 2.35 0 1 0 -4.7 0ZM291.4 371.6a2.35 2.35 0 1 0 4.7 0a2.35 2.35 0 1 0 -4.7 0ZM293.9 383.3a2.35 2.35 0 1 0 4.7 0a2.35 2.35 0 1 0 -4.7 0ZM296.6 380.0a2.35 2.35 0 1 0 4.7 0a2.35 2.35 0 1 0 -4.7 0ZM299.4 386.4a2.35 2.35 0 1 0 4.7 0a2.35 2.35 0 1 0 -4.7 0ZM301.8 459.6a2.35 2.35 0 1 0 4.7 0a2.35 2.35 0 1 0 -4.7 0ZM304.8 436.9a2.35 2.35 0 1 0 4.7 0a2.35 2.35 0 1 0 -4.7 0ZM308.2 440.2a2.35 2.35 0 1 0 4.7 0a2.35 2.35 0 1 0 -4.7 0ZM310.2 391.6a2.35 2.35 0 1 0 4.7 0a2.35 2.35 0 1 0 -4.7 0ZM312.8 391.8a2.35 2.35 0 1 0 4.7 0a2.35 2.35 0 1 0 -4.7 0ZM315.9 427.8a2.35 2.35 0 1 0 4.7 0a2.35 2.35 0 1 0 -4.7 0ZM318.6 391.2a2.35 2.35 0 1 0 4.7 0a2.35 2.35 0 1 0 -4.7 0ZM321.6 390.7a2.35 2.35 0 1 0 4.7 0a2.35 2.35 0 1 0 -4.7 0ZM324.1 391.2a2.35 2.35 0 1 0 4.7 0a2.35 2.35 0 1 0 -4.7 0ZM326.7 392.6a2.35 2.35 0 1 0 4.7 0a2.35 2.35 0 1 0 -4.7 0ZM329.2 392.0a2.35 2.35 0 1 0 4.7 0a2.35 2.35 0 1 0 -4.7 0ZM331.8 390.3a2.35 2.35 0 1 0 4.7 0a2.35 2.35 0 1 0 -4.7 0ZM334.3 392.7a2.35 2.35 0 1 0 4.7 0a2.35 2.35 0 1 0 -4.7 0ZM336.9 389.9a2.35 2.35 0 1 0 4.7 0a2.35 2.35 0 1 0 -4.7 0ZM339.4 389.6a2.35 2.35 0 1 0 4.7 0a2.35 2.35 0 1 0 -4.7 0ZM342.0 390.8a2.35 2.35 0 1 0 4.7 0a2.35 2.35 0 1 0 -4.7 0ZM344.5 389.0a2.35 2.35 0 1 0 4.7 0a2.35 2.35 0 1 0 -4.7 0ZM347.1 388.5a2.35 2.35 0 1 0 4.7 0a2.35 2.35 0 1 0 -4.7 0ZM349.6 386.3a2.35 2.35 0 1 0 4.7 0a2.35 2.35 0 1 0 -4.7 0ZM352.2 386.4a2.35 2.35 0 1 0 4.7 0a2.35 2.35 0 1 0 -4.7 0ZM354.7 387.8a2.35 2.35 0 1 0 4.7 0a2.35 2.35 0 1 0 -4.7 0ZM357.3 386.8a2.35 2.35 0 1 0 4.7 0a2.35 2.35 0 1 0 -4.7 0ZM359.8 387.9a2.35 2.35 0 1 0 4.7 0a2.35 2.35 0 1 0 -4.7 0ZM362.4 387.2a2.35 2.35 0 1 0 4.7 0a2.35 2.35 0 1 0 -4.7 0ZM364.9 387.4a2.35 2.35 0 1 0 4.7 0a2.35 2.35 0 1 0 -4.7 0ZM367.5 388.9a2.35 2.35 0 1 0 4.7 0a2.35 2.35 0 1 0 -4.7 0ZM370.0 387.5a2.35 2.35 0 1 0 4.7 0a2.35 2.35 0 1 0 -4.7 0ZM372.6 387.7a2.35 2.35 0 1 0 4.7 0a2.35 2.35 0 1 0 -4.7 0ZM375.1 388.6a2.35 2.35 0 1 0 4.7 0a2.35 2.35 0 1 0 -4.7 0ZM377.7 386.5a2.35 2.35 0 1 0 4.7 0a2.35 2.35 0 1 0 -4.7 0ZM380.2 386.4a2.35 2.35 0 1 0 4.7 0a2.35 2.35 0 1 0 -4.7 0ZM382.8 388.7a2.35 2.35 0 1 0 4.7 0a2.35 2.35 0 1 0 -4.7 0ZM385.3 388.4a2.35 2.35 0 1 0 4.7 0a2.35 2.35 0 1 0 -4.7 0ZM387.9 386.7a2.35 2.35 0 1 0 4.7 0a2.35 2.35 0 1 0 -4.7 0ZM390.4 386.5a2.35 2.35 0 1 0 4.7 0a2.35 2.35 0 1 0 -4.7 0ZM393.0 388.1a2.35 2.35 0 1 0 4.7 0a2.35 2.35 0 1 0 -4.7 0ZM395.5 388.7a2.35 2.35 0 1 0 4.7 0a2.35 2.35 0 1 0 -4.7 0ZM400.6 389.3a2.35 2.35 0 1 0 4.7 0a2.35 2.35 0 1 0 -4.7 0Z" fill="#9370db" />
<path d="M403.0 389.3 L410.7 389.5 L417.6 384.7 L425.0 388.9 L432.7 385.4 L440.0 387.7 L445.8 387.5 L449.3 387.0 L452.2 386.0" fill="none" stroke="#9370db" stroke-width="0.9" stroke-linejoin="round"/>
<path d="M400.3 389.3L403.0 386.6L405.7 389.3L403.0 392.0ZM408.0 389.5L410.7 386.8L413.4 389.5L410.7 392.2ZM414.9 384.7L417.6 382.0L420.3 384.7L417.6 387.4ZM422.3 388.9L425.0 386.2L427.7 388.9L425.0 391.6ZM430.0 385.4L432.7 382.7L435.4 385.4L432.7 388.1ZM437.3 387.7L440.0 385.0L442.7 387.7L440.0 390.4ZM443.1 387.5L445.8 384.8L448.5 387.5L445.8 390.2ZM446.6 387.0L449.3 384.3L452.0 387.0L449.3 389.7ZM449.5 386.0L452.2 383.3L454.9 386.0L452.2 388.7Z" fill="#9370db" />
<path d="M71.5 431.6 L74.0 431.7 L76.6 431.7 L79.2 431.3 L81.7 431.2 L84.2 431.5 L86.8 431.4 L89.3 431.8 L91.9 431.7 L94.5 431.7 L97.0 431.6 L99.5 431.7 L102.1 431.3 L104.7 431.5 L107.2 431.3 L109.8 431.9 L112.3 431.2 L114.8 431.8 L117.4 431.2 L119.9 431.7 L122.5 431.4 L125.0 431.5 L127.6 431.8 L130.2 431.1 L132.7 431.2 L135.2 431.9 L137.8 431.5 L140.3 431.2 L142.9 431.9 L145.4 431.9 L148.0 431.2 L150.6 431.4 L153.1 431.2 L155.6 431.3 L158.2 431.6 L160.8 431.2 L163.3 431.6 L165.8 431.1 L168.4 431.2 L170.9 431.7 L173.5 431.4 L176.1 431.4 L178.6 431.5 L181.1 431.4 L183.7 431.4 L186.2 431.1 L188.8 431.6 L191.3 431.8 L193.9 431.8 L196.4 431.6 L199.0 431.3 L201.5 431.3 L204.1 431.6 L206.6 431.6 L209.2 431.1 L211.8 431.2 L214.3 431.3 L216.8 431.4 L219.4 431.7 L221.9 431.4 L224.5 431.0 L227.0 431.7 L229.6 431.4 L232.1 431.4 L234.7 431.2 L237.2 430.2 L238.9 428.6 L239.8 429.9 L242.0 432.9 L242.3 432.8 L244.6 430.0 L244.9 429.8 L247.2 434.2 L247.4 434.1 L250.0 432.1 L252.5 432.0 L255.1 431.0 L257.6 431.2 L260.2 431.2 L262.8 431.5 L265.3 431.0 L267.9 431.3 L270.4 431.1 L272.9 431.1 L275.5 431.3 L278.0 431.6 L280.6 431.2 L283.1 431.6 L285.7 431.0 L288.2 431.5 L290.8 430.9 L293.4 430.2 L295.9 430.1 L298.4 429.5 L300.0 428.9 L301.0 428.8 L303.5 430.0 L306.1 430.9 L308.6 430.9 L311.2 431.0 L313.8 430.8 L316.3 430.8 L318.9 431.3 L321.4 431.6 L323.9 431.6 L326.5 431.2 L329.0 430.9 L331.6 431.1 L334.1 431.5 L336.7 431.5 L339.2 431.4 L341.8 431.1 L344.3 431.3 L346.9 431.3 L349.4 431.4 L352.0 431.1 L354.5 431.7 L357.1 431.6 L359.6 431.0 L362.2 431.1 L364.8 431.6 L367.3 431.1 L369.8 431.7 L372.4 431.3 L374.9 431.5 L377.5 431.5 L380.0 431.1 L382.6 431.2 L385.1 431.2 L387.7 431.5 L390.2 431.5 L392.8 431.1 L395.3 431.7 L397.9 431.3 L403.0 431.3" fill="none" stroke="#1e90ff" stroke-width="1.8" stroke-linejoin="round"/>
<path d="M69.3 431.6a2.15 2.15 0 1 0 4.3 0a2.15 2.15 0 1 0 -4.3 0ZM71.9 431.7a2.15 2.15 0 1 0 4.3 0a2.15 2.15 0 1 0 -4.3 0ZM74.4 431.7a2.15 2.15 0 1 0 4.3 0a2.15 2.15 0 1 0 -4.3 0ZM77.0 431.3a2.15 2.15 0 1 0 4.3 0a2.15 2.15 0 1 0 -4.3 0ZM79.5 431.2a2.15 2.15 0 1 0 4.3 0a2.15 2.15 0 1 0 -4.3 0ZM82.1 431.5a2.15 2.15 0 1 0 4.3 0a2.15 2.15 0 1 0 -4.3 0ZM84.6 431.4a2.15 2.15 0 1 0 4.3 0a2.15 2.15 0 1 0 -4.3 0ZM87.2 431.8a2.15 2.15 0 1 0 4.3 0a2.15 2.15 0 1 0 -4.3 0ZM89.8 431.7a2.15 2.15 0 1 0 4.3 0a2.15 2.15 0 1 0 -4.3 0ZM92.3 431.7a2.15 2.15 0 1 0 4.3 0a2.15 2.15 0 1 0 -4.3 0ZM94.8 431.6a2.15 2.15 0 1 0 4.3 0a2.15 2.15 0 1 0 -4.3 0ZM97.4 431.7a2.15 2.15 0 1 0 4.3 0a2.15 2.15 0 1 0 -4.3 0ZM99.9 431.3a2.15 2.15 0 1 0 4.3 0a2.15 2.15 0 1 0 -4.3 0ZM102.5 431.5a2.15 2.15 0 1 0 4.3 0a2.15 2.15 0 1 0 -4.3 0ZM105.0 431.3a2.15 2.15 0 1 0 4.3 0a2.15 2.15 0 1 0 -4.3 0ZM107.6 431.9a2.15 2.15 0 1 0 4.3 0a2.15 2.15 0 1 0 -4.3 0ZM110.1 431.2a2.15 2.15 0 1 0 4.3 0a2.15 2.15 0 1 0 -4.3 0ZM112.7 431.8a2.15 2.15 0 1 0 4.3 0a2.15 2.15 0 1 0 -4.3 0ZM115.2 431.2a2.15 2.15 0 1 0 4.3 0a2.15 2.15 0 1 0 -4.3 0ZM117.8 431.7a2.15 2.15 0 1 0 4.3 0a2.15 2.15 0 1 0 -4.3 0ZM120.3 431.4a2.15 2.15 0 1 0 4.3 0a2.15 2.15 0 1 0 -4.3 0ZM122.9 431.5a2.15 2.15 0 1 0 4.3 0a2.15 2.15 0 1 0 -4.3 0ZM125.4 431.8a2.15 2.15 0 1 0 4.3 0a2.15 2.15 0 1 0 -4.3 0ZM128.0 431.1a2.15 2.15 0 1 0 4.3 0a2.15 2.15 0 1 0 -4.3 0ZM130.5 431.2a2.15 2.15 0 1 0 4.3 0a2.15 2.15 0 1 0 -4.3 0ZM133.1 431.9a2.15 2.15 0 1 0 4.3 0a2.15 2.15 0 1 0 -4.3 0ZM135.7 431.5a2.15 2.15 0 1 0 4.3 0a2.15 2.15 0 1 0 -4.3 0ZM138.2 431.2a2.15 2.15 0 1 0 4.3 0a2.15 2.15 0 1 0 -4.3 0ZM140.7 431.9a2.15 2.15 0 1 0 4.3 0a2.15 2.15 0 1 0 -4.3 0ZM143.3 431.9a2.15 2.15 0 1 0 4.3 0a2.15 2.15 0 1 0 -4.3 0ZM145.8 431.2a2.15 2.15 0 1 0 4.3 0a2.15 2.15 0 1 0 -4.3 0ZM148.4 431.4a2.15 2.15 0 1 0 4.3 0a2.15 2.15 0 1 0 -4.3 0ZM150.9 431.2a2.15 2.15 0 1 0 4.3 0a2.15 2.15 0 1 0 -4.3 0ZM153.5 431.3a2.15 2.15 0 1 0 4.3 0a2.15 2.15 0 1 0 -4.3 0ZM156.0 431.6a2.15 2.15 0 1 0 4.3 0a2.15 2.15 0 1 0 -4.3 0ZM158.6 431.2a2.15 2.15 0 1 0 4.3 0a2.15 2.15 0 1 0 -4.3 0ZM161.2 431.6a2.15 2.15 0 1 0 4.3 0a2.15 2.15 0 1 0 -4.3 0ZM163.7 431.1a2.15 2.15 0 1 0 4.3 0a2.15 2.15 0 1 0 -4.3 0ZM166.2 431.2a2.15 2.15 0 1 0 4.3 0a2.15 2.15 0 1 0 -4.3 0ZM168.8 431.7a2.15 2.15 0 1 0 4.3 0a2.15 2.15 0 1 0 -4.3 0ZM171.3 431.4a2.15 2.15 0 1 0 4.3 0a2.15 2.15 0 1 0 -4.3 0ZM173.9 431.4a2.15 2.15 0 1 0 4.3 0a2.15 2.15 0 1 0 -4.3 0ZM176.4 431.5a2.15 2.15 0 1 0 4.3 0a2.15 2.15 0 1 0 -4.3 0ZM179.0 431.4a2.15 2.15 0 1 0 4.3 0a2.15 2.15 0 1 0 -4.3 0ZM181.5 431.4a2.15 2.15 0 1 0 4.3 0a2.15 2.15 0 1 0 -4.3 0ZM184.1 431.1a2.15 2.15 0 1 0 4.3 0a2.15 2.15 0 1 0 -4.3 0ZM186.7 431.6a2.15 2.15 0 1 0 4.3 0a2.15 2.15 0 1 0 -4.3 0ZM189.2 431.8a2.15 2.15 0 1 0 4.3 0a2.15 2.15 0 1 0 -4.3 0ZM191.7 431.8a2.15 2.15 0 1 0 4.3 0a2.15 2.15 0 1 0 -4.3 0ZM194.3 431.6a2.15 2.15 0 1 0 4.3 0a2.15 2.15 0 1 0 -4.3 0ZM196.8 431.3a2.15 2.15 0 1 0 4.3 0a2.15 2.15 0 1 0 -4.3 0ZM199.4 431.3a2.15 2.15 0 1 0 4.3 0a2.15 2.15 0 1 0 -4.3 0ZM201.9 431.6a2.15 2.15 0 1 0 4.3 0a2.15 2.15 0 1 0 -4.3 0ZM204.5 431.6a2.15 2.15 0 1 0 4.3 0a2.15 2.15 0 1 0 -4.3 0ZM207.0 431.1a2.15 2.15 0 1 0 4.3 0a2.15 2.15 0 1 0 -4.3 0ZM209.6 431.2a2.15 2.15 0 1 0 4.3 0a2.15 2.15 0 1 0 -4.3 0ZM212.1 431.3a2.15 2.15 0 1 0 4.3 0a2.15 2.15 0 1 0 -4.3 0ZM214.7 431.4a2.15 2.15 0 1 0 4.3 0a2.15 2.15 0 1 0 -4.3 0ZM217.2 431.7a2.15 2.15 0 1 0 4.3 0a2.15 2.15 0 1 0 -4.3 0ZM219.8 431.4a2.15 2.15 0 1 0 4.3 0a2.15 2.15 0 1 0 -4.3 0ZM222.3 431.0a2.15 2.15 0 1 0 4.3 0a2.15 2.15 0 1 0 -4.3 0ZM224.9 431.7a2.15 2.15 0 1 0 4.3 0a2.15 2.15 0 1 0 -4.3 0ZM227.4 431.4a2.15 2.15 0 1 0 4.3 0a2.15 2.15 0 1 0 -4.3 0ZM230.0 431.4a2.15 2.15 0 1 0 4.3 0a2.15 2.15 0 1 0 -4.3 0ZM232.5 431.2a2.15 2.15 0 1 0 4.3 0a2.15 2.15 0 1 0 -4.3 0ZM235.1 430.2a2.15 2.15 0 1 0 4.3 0a2.15 2.15 0 1 0 -4.3 0ZM236.8 428.6a2.15 2.15 0 1 0 4.3 0a2.15 2.15 0 1 0 -4.3 0ZM237.6 429.9a2.15 2.15 0 1 0 4.3 0a2.15 2.15 0 1 0 -4.3 0ZM239.8 432.9a2.15 2.15 0 1 0 4.3 0a2.15 2.15 0 1 0 -4.3 0ZM240.2 432.8a2.15 2.15 0 1 0 4.3 0a2.15 2.15 0 1 0 -4.3 0ZM242.4 430.0a2.15 2.15 0 1 0 4.3 0a2.15 2.15 0 1 0 -4.3 0ZM242.7 429.8a2.15 2.15 0 1 0 4.3 0a2.15 2.15 0 1 0 -4.3 0ZM245.0 434.2a2.15 2.15 0 1 0 4.3 0a2.15 2.15 0 1 0 -4.3 0ZM245.3 434.1a2.15 2.15 0 1 0 4.3 0a2.15 2.15 0 1 0 -4.3 0ZM247.8 432.1a2.15 2.15 0 1 0 4.3 0a2.15 2.15 0 1 0 -4.3 0ZM250.4 432.0a2.15 2.15 0 1 0 4.3 0a2.15 2.15 0 1 0 -4.3 0ZM252.9 431.0a2.15 2.15 0 1 0 4.3 0a2.15 2.15 0 1 0 -4.3 0ZM255.5 431.2a2.15 2.15 0 1 0 4.3 0a2.15 2.15 0 1 0 -4.3 0ZM258.1 431.2a2.15 2.15 0 1 0 4.3 0a2.15 2.15 0 1 0 -4.3 0ZM260.6 431.5a2.15 2.15 0 1 0 4.3 0a2.15 2.15 0 1 0 -4.3 0ZM263.1 431.0a2.15 2.15 0 1 0 4.3 0a2.15 2.15 0 1 0 -4.3 0ZM265.7 431.3a2.15 2.15 0 1 0 4.3 0a2.15 2.15 0 1 0 -4.3 0ZM268.2 431.1a2.15 2.15 0 1 0 4.3 0a2.15 2.15 0 1 0 -4.3 0ZM270.8 431.1a2.15 2.15 0 1 0 4.3 0a2.15 2.15 0 1 0 -4.3 0ZM273.4 431.3a2.15 2.15 0 1 0 4.3 0a2.15 2.15 0 1 0 -4.3 0ZM275.9 431.6a2.15 2.15 0 1 0 4.3 0a2.15 2.15 0 1 0 -4.3 0ZM278.5 431.2a2.15 2.15 0 1 0 4.3 0a2.15 2.15 0 1 0 -4.3 0ZM281.0 431.6a2.15 2.15 0 1 0 4.3 0a2.15 2.15 0 1 0 -4.3 0ZM283.6 431.0a2.15 2.15 0 1 0 4.3 0a2.15 2.15 0 1 0 -4.3 0ZM286.1 431.5a2.15 2.15 0 1 0 4.3 0a2.15 2.15 0 1 0 -4.3 0ZM288.6 430.9a2.15 2.15 0 1 0 4.3 0a2.15 2.15 0 1 0 -4.3 0ZM291.2 430.2a2.15 2.15 0 1 0 4.3 0a2.15 2.15 0 1 0 -4.3 0ZM293.8 430.1a2.15 2.15 0 1 0 4.3 0a2.15 2.15 0 1 0 -4.3 0ZM296.3 429.5a2.15 2.15 0 1 0 4.3 0a2.15 2.15 0 1 0 -4.3 0ZM297.9 428.9a2.15 2.15 0 1 0 4.3 0a2.15 2.15 0 1 0 -4.3 0ZM298.9 428.8a2.15 2.15 0 1 0 4.3 0a2.15 2.15 0 1 0 -4.3 0ZM301.4 430.0a2.15 2.15 0 1 0 4.3 0a2.15 2.15 0 1 0 -4.3 0ZM304.0 430.9a2.15 2.15 0 1 0 4.3 0a2.15 2.15 0 1 0 -4.3 0ZM306.5 430.9a2.15 2.15 0 1 0 4.3 0a2.15 2.15 0 1 0 -4.3 0ZM309.1 431.0a2.15 2.15 0 1 0 4.3 0a2.15 2.15 0 1 0 -4.3 0ZM311.6 430.8a2.15 2.15 0 1 0 4.3 0a2.15 2.15 0 1 0 -4.3 0ZM314.1 430.8a2.15 2.15 0 1 0 4.3 0a2.15 2.15 0 1 0 -4.3 0ZM316.7 431.3a2.15 2.15 0 1 0 4.3 0a2.15 2.15 0 1 0 -4.3 0ZM319.2 431.6a2.15 2.15 0 1 0 4.3 0a2.15 2.15 0 1 0 -4.3 0ZM321.8 431.6a2.15 2.15 0 1 0 4.3 0a2.15 2.15 0 1 0 -4.3 0ZM324.4 431.2a2.15 2.15 0 1 0 4.3 0a2.15 2.15 0 1 0 -4.3 0ZM326.9 430.9a2.15 2.15 0 1 0 4.3 0a2.15 2.15 0 1 0 -4.3 0ZM329.4 431.1a2.15 2.15 0 1 0 4.3 0a2.15 2.15 0 1 0 -4.3 0ZM332.0 431.5a2.15 2.15 0 1 0 4.3 0a2.15 2.15 0 1 0 -4.3 0ZM334.6 431.5a2.15 2.15 0 1 0 4.3 0a2.15 2.15 0 1 0 -4.3 0ZM337.1 431.4a2.15 2.15 0 1 0 4.3 0a2.15 2.15 0 1 0 -4.3 0ZM339.6 431.1a2.15 2.15 0 1 0 4.3 0a2.15 2.15 0 1 0 -4.3 0ZM342.2 431.3a2.15 2.15 0 1 0 4.3 0a2.15 2.15 0 1 0 -4.3 0ZM344.8 431.3a2.15 2.15 0 1 0 4.3 0a2.15 2.15 0 1 0 -4.3 0ZM347.3 431.4a2.15 2.15 0 1 0 4.3 0a2.15 2.15 0 1 0 -4.3 0ZM349.9 431.1a2.15 2.15 0 1 0 4.3 0a2.15 2.15 0 1 0 -4.3 0ZM352.4 431.7a2.15 2.15 0 1 0 4.3 0a2.15 2.15 0 1 0 -4.3 0ZM354.9 431.6a2.15 2.15 0 1 0 4.3 0a2.15 2.15 0 1 0 -4.3 0ZM357.5 431.0a2.15 2.15 0 1 0 4.3 0a2.15 2.15 0 1 0 -4.3 0ZM360.1 431.1a2.15 2.15 0 1 0 4.3 0a2.15 2.15 0 1 0 -4.3 0ZM362.6 431.6a2.15 2.15 0 1 0 4.3 0a2.15 2.15 0 1 0 -4.3 0ZM365.1 431.1a2.15 2.15 0 1 0 4.3 0a2.15 2.15 0 1 0 -4.3 0ZM367.7 431.7a2.15 2.15 0 1 0 4.3 0a2.15 2.15 0 1 0 -4.3 0ZM370.2 431.3a2.15 2.15 0 1 0 4.3 0a2.15 2.15 0 1 0 -4.3 0ZM372.8 431.5a2.15 2.15 0 1 0 4.3 0a2.15 2.15 0 1 0 -4.3 0ZM375.4 431.5a2.15 2.15 0 1 0 4.3 0a2.15 2.15 0 1 0 -4.3 0ZM377.9 431.1a2.15 2.15 0 1 0 4.3 0a2.15 2.15 0 1 0 -4.3 0ZM380.4 431.2a2.15 2.15 0 1 0 4.3 0a2.15 2.15 0 1 0 -4.3 0ZM383.0 431.2a2.15 2.15 0 1 0 4.3 0a2.15 2.15 0 1 0 -4.3 0ZM385.6 431.5a2.15 2.15 0 1 0 4.3 0a2.15 2.15 0 1 0 -4.3 0ZM388.1 431.5a2.15 2.15 0 1 0 4.3 0a2.15 2.15 0 1 0 -4.3 0ZM390.6 431.1a2.15 2.15 0 1 0 4.3 0a2.15 2.15 0 1 0 -4.3 0ZM393.2 431.7a2.15 2.15 0 1 0 4.3 0a2.15 2.15 0 1 0 -4.3 0ZM395.8 431.3a2.15 2.15 0 1 0 4.3 0a2.15 2.15 0 1 0 -4.3 0ZM400.9 431.3a2.15 2.15 0 1 0 4.3 0a2.15 2.15 0 1 0 -4.3 0Z" fill="#1e90ff" />
<path d="M403.0 431.3 L410.7 431.3 L417.6 431.3 L425.0 431.3 L432.7 431.3 L440.0 431.3 L445.8 431.3 L449.3 431.3 L452.2 431.3" fill="none" stroke="#1e90ff" stroke-width="1.0" stroke-linejoin="round"/>
<path d="M400.4 431.3L403.0 428.7L405.6 431.3L403.0 433.9ZM408.1 431.3L410.7 428.7L413.3 431.3L410.7 433.9ZM415.0 431.3L417.6 428.7L420.2 431.3L417.6 433.9ZM422.4 431.3L425.0 428.7L427.6 431.3L425.0 433.9ZM430.1 431.3L432.7 428.7L435.3 431.3L432.7 433.9ZM437.4 431.3L440.0 428.7L442.6 431.3L440.0 433.9ZM443.2 431.3L445.8 428.7L448.4 431.3L445.8 433.9ZM446.7 431.3L449.3 428.7L451.9 431.3L449.3 433.9ZM449.6 431.3L452.2 428.7L454.8 431.3L452.2 433.9Z" fill="#1e90ff" />
<path d="M71.5 452.4 L74.0 453.6 L76.6 454.5 L79.2 455.4 L81.7 455.2 L84.2 455.7 L86.8 456.0 L89.3 456.5 L91.9 457.3 L94.5 457.2 L97.0 457.9 L99.5 458.1 L102.1 458.4 L104.7 460.8 L107.2 461.8 L109.8 461.7 L112.3 461.6 L114.8 462.1 L117.4 462.4 L119.9 463.4 L122.5 463.7 L125.0 464.1 L127.6 464.5 L130.2 464.8 L132.7 465.4 L135.2 465.6 L137.8 465.6 L140.3 466.4 L142.9 466.5 L145.4 467.1 L148.0 467.4 L150.6 467.6 L153.1 467.9 L155.6 468.3 L158.2 468.5 L160.8 468.7 L163.3 469.6 L165.8 469.9 L168.4 470.3 L170.9 470.4 L173.5 470.7 L176.1 471.1 L178.6 471.0 L181.1 471.7 L183.7 471.9 L186.2 472.0 L188.8 472.3 L191.3 472.9 L193.9 473.0 L196.4 473.5 L199.0 474.0 L201.5 474.2 L204.1 474.4 L206.6 475.1 L209.2 475.3 L211.8 475.7 L214.3 476.0 L216.8 476.6 L219.4 476.8 L221.9 477.6 L224.5 478.3 L227.0 478.2 L229.6 478.9 L232.1 479.5 L234.7 479.2 L237.2 479.7 L239.8 480.6 L242.3 480.6 L244.9 480.3 L247.4 479.8 L250.0 479.9 L252.5 479.0 L255.1 477.6 L257.6 475.9 L258.3 475.1 L260.2 476.3 L262.8 478.5 L265.3 479.2 L267.9 480.5 L270.4 480.4 L272.9 481.4 L275.5 481.5 L278.0 481.9 L280.6 481.8 L283.1 482.4 L285.7 482.6 L288.2 482.8 L290.8 482.9 L293.4 475.6 L295.6 471.6 L295.9 471.8 L298.4 472.7 L301.0 473.5 L303.5 474.4 L306.1 474.6 L308.6 475.4 L311.2 475.8 L313.8 476.7 L316.3 477.0 L318.9 477.4 L321.4 477.3 L323.9 477.9 L326.5 478.1 L329.0 478.1 L331.6 478.3 L334.1 479.4 L336.7 479.0 L339.2 479.4 L341.8 479.5 L344.3 480.0 L346.9 479.7 L349.4 480.2 L352.0 480.4 L354.5 481.0 L357.1 480.6 L359.6 481.1 L362.2 481.4 L364.8 482.1 L367.3 481.9 L369.8 482.1 L372.4 482.5 L374.9 482.5 L377.5 482.5 L380.0 483.1 L382.6 483.7 L385.1 483.8 L387.7 483.7 L390.2 484.2 L392.8 484.6 L395.3 484.4 L397.9 484.9 L403.0 485.9" fill="none" stroke="#ffff00" stroke-width="2.8" stroke-linejoin="round"/>
<path d="M69.2 452.4a2.25 2.25 0 1 0 4.5 0a2.25 2.25 0 1 0 -4.5 0ZM71.8 453.6a2.25 2.25 0 1 0 4.5 0a2.25 2.25 0 1 0 -4.5 0ZM74.3 454.5a2.25 2.25 0 1 0 4.5 0a2.25 2.25 0 1 0 -4.5 0ZM76.9 455.4a2.25 2.25 0 1 0 4.5 0a2.25 2.25 0 1 0 -4.5 0ZM79.5 455.2a2.25 2.25 0 1 0 4.5 0a2.25 2.25 0 1 0 -4.5 0ZM82.0 455.7a2.25 2.25 0 1 0 4.5 0a2.25 2.25 0 1 0 -4.5 0ZM84.5 456.0a2.25 2.25 0 1 0 4.5 0a2.25 2.25 0 1 0 -4.5 0ZM87.1 456.5a2.25 2.25 0 1 0 4.5 0a2.25 2.25 0 1 0 -4.5 0ZM89.7 457.3a2.25 2.25 0 1 0 4.5 0a2.25 2.25 0 1 0 -4.5 0ZM92.2 457.2a2.25 2.25 0 1 0 4.5 0a2.25 2.25 0 1 0 -4.5 0ZM94.8 457.9a2.25 2.25 0 1 0 4.5 0a2.25 2.25 0 1 0 -4.5 0ZM97.3 458.1a2.25 2.25 0 1 0 4.5 0a2.25 2.25 0 1 0 -4.5 0ZM99.8 458.4a2.25 2.25 0 1 0 4.5 0a2.25 2.25 0 1 0 -4.5 0ZM102.4 460.8a2.25 2.25 0 1 0 4.5 0a2.25 2.25 0 1 0 -4.5 0ZM104.9 461.8a2.25 2.25 0 1 0 4.5 0a2.25 2.25 0 1 0 -4.5 0ZM107.5 461.7a2.25 2.25 0 1 0 4.5 0a2.25 2.25 0 1 0 -4.5 0ZM110.0 461.6a2.25 2.25 0 1 0 4.5 0a2.25 2.25 0 1 0 -4.5 0ZM112.6 462.1a2.25 2.25 0 1 0 4.5 0a2.25 2.25 0 1 0 -4.5 0ZM115.2 462.4a2.25 2.25 0 1 0 4.5 0a2.25 2.25 0 1 0 -4.5 0ZM117.7 463.4a2.25 2.25 0 1 0 4.5 0a2.25 2.25 0 1 0 -4.5 0ZM120.2 463.7a2.25 2.25 0 1 0 4.5 0a2.25 2.25 0 1 0 -4.5 0ZM122.8 464.1a2.25 2.25 0 1 0 4.5 0a2.25 2.25 0 1 0 -4.5 0ZM125.3 464.5a2.25 2.25 0 1 0 4.5 0a2.25 2.25 0 1 0 -4.5 0ZM127.9 464.8a2.25 2.25 0 1 0 4.5 0a2.25 2.25 0 1 0 -4.5 0ZM130.4 465.4a2.25 2.25 0 1 0 4.5 0a2.25 2.25 0 1 0 -4.5 0ZM133.0 465.6a2.25 2.25 0 1 0 4.5 0a2.25 2.25 0 1 0 -4.5 0ZM135.6 465.6a2.25 2.25 0 1 0 4.5 0a2.25 2.25 0 1 0 -4.5 0ZM138.1 466.4a2.25 2.25 0 1 0 4.5 0a2.25 2.25 0 1 0 -4.5 0ZM140.6 466.5a2.25 2.25 0 1 0 4.5 0a2.25 2.25 0 1 0 -4.5 0ZM143.2 467.1a2.25 2.25 0 1 0 4.5 0a2.25 2.25 0 1 0 -4.5 0ZM145.8 467.4a2.25 2.25 0 1 0 4.5 0a2.25 2.25 0 1 0 -4.5 0ZM148.3 467.6a2.25 2.25 0 1 0 4.5 0a2.25 2.25 0 1 0 -4.5 0ZM150.8 467.9a2.25 2.25 0 1 0 4.5 0a2.25 2.25 0 1 0 -4.5 0ZM153.4 468.3a2.25 2.25 0 1 0 4.5 0a2.25 2.25 0 1 0 -4.5 0ZM155.9 468.5a2.25 2.25 0 1 0 4.5 0a2.25 2.25 0 1 0 -4.5 0ZM158.5 468.7a2.25 2.25 0 1 0 4.5 0a2.25 2.25 0 1 0 -4.5 0ZM161.1 469.6a2.25 2.25 0 1 0 4.5 0a2.25 2.25 0 1 0 -4.5 0ZM163.6 469.9a2.25 2.25 0 1 0 4.5 0a2.25 2.25 0 1 0 -4.5 0ZM166.1 470.3a2.25 2.25 0 1 0 4.5 0a2.25 2.25 0 1 0 -4.5 0ZM168.7 470.4a2.25 2.25 0 1 0 4.5 0a2.25 2.25 0 1 0 -4.5 0ZM171.2 470.7a2.25 2.25 0 1 0 4.5 0a2.25 2.25 0 1 0 -4.5 0ZM173.8 471.1a2.25 2.25 0 1 0 4.5 0a2.25 2.25 0 1 0 -4.5 0ZM176.3 471.0a2.25 2.25 0 1 0 4.5 0a2.25 2.25 0 1 0 -4.5 0ZM178.9 471.7a2.25 2.25 0 1 0 4.5 0a2.25 2.25 0 1 0 -4.5 0ZM181.4 471.9a2.25 2.25 0 1 0 4.5 0a2.25 2.25 0 1 0 -4.5 0ZM184.0 472.0a2.25 2.25 0 1 0 4.5 0a2.25 2.25 0 1 0 -4.5 0ZM186.6 472.3a2.25 2.25 0 1 0 4.5 0a2.25 2.25 0 1 0 -4.5 0ZM189.1 472.9a2.25 2.25 0 1 0 4.5 0a2.25 2.25 0 1 0 -4.5 0ZM191.6 473.0a2.25 2.25 0 1 0 4.5 0a2.25 2.25 0 1 0 -4.5 0ZM194.2 473.5a2.25 2.25 0 1 0 4.5 0a2.25 2.25 0 1 0 -4.5 0ZM196.8 474.0a2.25 2.25 0 1 0 4.5 0a2.25 2.25 0 1 0 -4.5 0ZM199.3 474.2a2.25 2.25 0 1 0 4.5 0a2.25 2.25 0 1 0 -4.5 0ZM201.8 474.4a2.25 2.25 0 1 0 4.5 0a2.25 2.25 0 1 0 -4.5 0ZM204.4 475.1a2.25 2.25 0 1 0 4.5 0a2.25 2.25 0 1 0 -4.5 0ZM206.9 475.3a2.25 2.25 0 1 0 4.5 0a2.25 2.25 0 1 0 -4.5 0ZM209.5 475.7a2.25 2.25 0 1 0 4.5 0a2.25 2.25 0 1 0 -4.5 0ZM212.0 476.0a2.25 2.25 0 1 0 4.5 0a2.25 2.25 0 1 0 -4.5 0ZM214.6 476.6a2.25 2.25 0 1 0 4.5 0a2.25 2.25 0 1 0 -4.5 0ZM217.1 476.8a2.25 2.25 0 1 0 4.5 0a2.25 2.25 0 1 0 -4.5 0ZM219.7 477.6a2.25 2.25 0 1 0 4.5 0a2.25 2.25 0 1 0 -4.5 0ZM222.2 478.3a2.25 2.25 0 1 0 4.5 0a2.25 2.25 0 1 0 -4.5 0ZM224.8 478.2a2.25 2.25 0 1 0 4.5 0a2.25 2.25 0 1 0 -4.5 0ZM227.3 478.9a2.25 2.25 0 1 0 4.5 0a2.25 2.25 0 1 0 -4.5 0ZM229.9 479.5a2.25 2.25 0 1 0 4.5 0a2.25 2.25 0 1 0 -4.5 0ZM232.4 479.2a2.25 2.25 0 1 0 4.5 0a2.25 2.25 0 1 0 -4.5 0ZM235.0 479.7a2.25 2.25 0 1 0 4.5 0a2.25 2.25 0 1 0 -4.5 0ZM237.5 480.6a2.25 2.25 0 1 0 4.5 0a2.25 2.25 0 1 0 -4.5 0ZM240.1 480.6a2.25 2.25 0 1 0 4.5 0a2.25 2.25 0 1 0 -4.5 0ZM242.6 480.3a2.25 2.25 0 1 0 4.5 0a2.25 2.25 0 1 0 -4.5 0ZM245.2 479.8a2.25 2.25 0 1 0 4.5 0a2.25 2.25 0 1 0 -4.5 0ZM247.8 479.9a2.25 2.25 0 1 0 4.5 0a2.25 2.25 0 1 0 -4.5 0ZM250.3 479.0a2.25 2.25 0 1 0 4.5 0a2.25 2.25 0 1 0 -4.5 0ZM252.8 477.6a2.25 2.25 0 1 0 4.5 0a2.25 2.25 0 1 0 -4.5 0ZM255.4 475.9a2.25 2.25 0 1 0 4.5 0a2.25 2.25 0 1 0 -4.5 0ZM256.1 475.1a2.25 2.25 0 1 0 4.5 0a2.25 2.25 0 1 0 -4.5 0ZM257.9 476.3a2.25 2.25 0 1 0 4.5 0a2.25 2.25 0 1 0 -4.5 0ZM260.5 478.5a2.25 2.25 0 1 0 4.5 0a2.25 2.25 0 1 0 -4.5 0ZM263.0 479.2a2.25 2.25 0 1 0 4.5 0a2.25 2.25 0 1 0 -4.5 0ZM265.6 480.5a2.25 2.25 0 1 0 4.5 0a2.25 2.25 0 1 0 -4.5 0ZM268.1 480.4a2.25 2.25 0 1 0 4.5 0a2.25 2.25 0 1 0 -4.5 0ZM270.7 481.4a2.25 2.25 0 1 0 4.5 0a2.25 2.25 0 1 0 -4.5 0ZM273.2 481.5a2.25 2.25 0 1 0 4.5 0a2.25 2.25 0 1 0 -4.5 0ZM275.8 481.9a2.25 2.25 0 1 0 4.5 0a2.25 2.25 0 1 0 -4.5 0ZM278.4 481.8a2.25 2.25 0 1 0 4.5 0a2.25 2.25 0 1 0 -4.5 0ZM280.9 482.4a2.25 2.25 0 1 0 4.5 0a2.25 2.25 0 1 0 -4.5 0ZM283.4 482.6a2.25 2.25 0 1 0 4.5 0a2.25 2.25 0 1 0 -4.5 0ZM286.0 482.8a2.25 2.25 0 1 0 4.5 0a2.25 2.25 0 1 0 -4.5 0ZM288.5 482.9a2.25 2.25 0 1 0 4.5 0a2.25 2.25 0 1 0 -4.5 0ZM291.1 475.6a2.25 2.25 0 1 0 4.5 0a2.25 2.25 0 1 0 -4.5 0ZM293.4 471.6a2.25 2.25 0 1 0 4.5 0a2.25 2.25 0 1 0 -4.5 0ZM293.6 471.8a2.25 2.25 0 1 0 4.5 0a2.25 2.25 0 1 0 -4.5 0ZM296.2 472.7a2.25 2.25 0 1 0 4.5 0a2.25 2.25 0 1 0 -4.5 0ZM298.8 473.5a2.25 2.25 0 1 0 4.5 0a2.25 2.25 0 1 0 -4.5 0ZM301.3 474.4a2.25 2.25 0 1 0 4.5 0a2.25 2.25 0 1 0 -4.5 0ZM303.9 474.6a2.25 2.25 0 1 0 4.5 0a2.25 2.25 0 1 0 -4.5 0ZM306.4 475.4a2.25 2.25 0 1 0 4.5 0a2.25 2.25 0 1 0 -4.5 0ZM308.9 475.8a2.25 2.25 0 1 0 4.5 0a2.25 2.25 0 1 0 -4.5 0ZM311.5 476.7a2.25 2.25 0 1 0 4.5 0a2.25 2.25 0 1 0 -4.5 0ZM314.0 477.0a2.25 2.25 0 1 0 4.5 0a2.25 2.25 0 1 0 -4.5 0ZM316.6 477.4a2.25 2.25 0 1 0 4.5 0a2.25 2.25 0 1 0 -4.5 0ZM319.1 477.3a2.25 2.25 0 1 0 4.5 0a2.25 2.25 0 1 0 -4.5 0ZM321.7 477.9a2.25 2.25 0 1 0 4.5 0a2.25 2.25 0 1 0 -4.5 0ZM324.2 478.1a2.25 2.25 0 1 0 4.5 0a2.25 2.25 0 1 0 -4.5 0ZM326.8 478.1a2.25 2.25 0 1 0 4.5 0a2.25 2.25 0 1 0 -4.5 0ZM329.3 478.3a2.25 2.25 0 1 0 4.5 0a2.25 2.25 0 1 0 -4.5 0ZM331.9 479.4a2.25 2.25 0 1 0 4.5 0a2.25 2.25 0 1 0 -4.5 0ZM334.4 479.0a2.25 2.25 0 1 0 4.5 0a2.25 2.25 0 1 0 -4.5 0ZM337.0 479.4a2.25 2.25 0 1 0 4.5 0a2.25 2.25 0 1 0 -4.5 0ZM339.5 479.5a2.25 2.25 0 1 0 4.5 0a2.25 2.25 0 1 0 -4.5 0ZM342.1 480.0a2.25 2.25 0 1 0 4.5 0a2.25 2.25 0 1 0 -4.5 0ZM344.6 479.7a2.25 2.25 0 1 0 4.5 0a2.25 2.25 0 1 0 -4.5 0ZM347.2 480.2a2.25 2.25 0 1 0 4.5 0a2.25 2.25 0 1 0 -4.5 0ZM349.8 480.4a2.25 2.25 0 1 0 4.5 0a2.25 2.25 0 1 0 -4.5 0ZM352.3 481.0a2.25 2.25 0 1 0 4.5 0a2.25 2.25 0 1 0 -4.5 0ZM354.8 480.6a2.25 2.25 0 1 0 4.5 0a2.25 2.25 0 1 0 -4.5 0ZM357.4 481.1a2.25 2.25 0 1 0 4.5 0a2.25 2.25 0 1 0 -4.5 0ZM359.9 481.4a2.25 2.25 0 1 0 4.5 0a2.25 2.25 0 1 0 -4.5 0ZM362.5 482.1a2.25 2.25 0 1 0 4.5 0a2.25 2.25 0 1 0 -4.5 0ZM365.0 481.9a2.25 2.25 0 1 0 4.5 0a2.25 2.25 0 1 0 -4.5 0ZM367.6 482.1a2.25 2.25 0 1 0 4.5 0a2.25 2.25 0 1 0 -4.5 0ZM370.1 482.5a2.25 2.25 0 1 0 4.5 0a2.25 2.25 0 1 0 -4.5 0ZM372.7 482.5a2.25 2.25 0 1 0 4.5 0a2.25 2.25 0 1 0 -4.5 0ZM375.2 482.5a2.25 2.25 0 1 0 4.5 0a2.25 2.25 0 1 0 -4.5 0ZM377.8 483.1a2.25 2.25 0 1 0 4.5 0a2.25 2.25 0 1 0 -4.5 0ZM380.3 483.7a2.25 2.25 0 1 0 4.5 0a2.25 2.25 0 1 0 -4.5 0ZM382.9 483.8a2.25 2.25 0 1 0 4.5 0a2.25 2.25 0 1 0 -4.5 0ZM385.4 483.7a2.25 2.25 0 1 0 4.5 0a2.25 2.25 0 1 0 -4.5 0ZM388.0 484.2a2.25 2.25 0 1 0 4.5 0a2.25 2.25 0 1 0 -4.5 0ZM390.5 484.6a2.25 2.25 0 1 0 4.5 0a2.25 2.25 0 1 0 -4.5 0ZM393.1 484.4a2.25 2.25 0 1 0 4.5 0a2.25 2.25 0 1 0 -4.5 0ZM395.6 484.9a2.25 2.25 0 1 0 4.5 0a2.25 2.25 0 1 0 -4.5 0ZM400.8 485.9a2.25 2.25 0 1 0 4.5 0a2.25 2.25 0 1 0 -4.5 0Z" fill="#ffff00" />
<path d="M403.0 485.9 L410.7 486.4 L417.6 486.9 L425.0 487.4 L432.7 488.0 L440.0 488.5 L445.8 488.9 L449.3 489.1 L452.2 489.3" fill="none" stroke="#ffff00" stroke-width="1.0" stroke-linejoin="round"/>
<path d="M400.4 485.9L403.0 483.3L405.6 485.9L403.0 488.5ZM408.1 486.4L410.7 483.8L413.3 486.4L410.7 489.0ZM415.0 486.9L417.6 484.3L420.2 486.9L417.6 489.5ZM422.4 487.4L425.0 484.8L427.6 487.4L425.0 490.0ZM430.1 488.0L432.7 485.4L435.3 488.0L432.7 490.6ZM437.4 488.5L440.0 485.9L442.6 488.5L440.0 491.1ZM443.2 488.9L445.8 486.3L448.4 488.9L445.8 491.5ZM446.7 489.1L449.3 486.5L451.9 489.1L449.3 491.7ZM449.6 489.3L452.2 486.7L454.8 489.3L452.2 491.9Z" fill="#ffff00" />
<line x1="34.75" y1="360.40" x2="34.75" y2="502.80" stroke="#fff" stroke-width="1.0" />
<line x1="34.75" y1="502.80" x2="490.00" y2="502.80" stroke="#fff" stroke-width="1.0" />
<line x1="30.40" y1="499.40" x2="34.75" y2="499.40" stroke="#fff" stroke-width="0.7" />
<text x="23.75" y="502.21" font-size="6.7" fill="#fff" textLength="5.05" lengthAdjust="spacingAndGlyphs" stroke="#fff" stroke-width="0.18">-8</text>
<line x1="30.40" y1="490.46" x2="34.75" y2="490.46" stroke="#fff" stroke-width="0.7" />
<line x1="30.40" y1="481.52" x2="34.75" y2="481.52" stroke="#fff" stroke-width="0.7" />
<line x1="30.40" y1="472.58" x2="34.75" y2="472.58" stroke="#fff" stroke-width="0.7" />
<text x="23.75" y="475.39" font-size="6.7" fill="#fff" textLength="5.05" lengthAdjust="spacingAndGlyphs" stroke="#fff" stroke-width="0.18">-2</text>
<line x1="30.40" y1="463.64" x2="34.75" y2="463.64" stroke="#fff" stroke-width="0.7" />
<text x="25.65" y="466.45" font-size="6.7" fill="#fff" textLength="3.15" lengthAdjust="spacingAndGlyphs" stroke="#fff" stroke-width="0.18">0</text>
<line x1="30.40" y1="454.70" x2="34.75" y2="454.70" stroke="#fff" stroke-width="0.7" />
<text x="25.65" y="457.51" font-size="6.7" fill="#fff" textLength="3.15" lengthAdjust="spacingAndGlyphs" stroke="#fff" stroke-width="0.18">2</text>
<line x1="30.40" y1="445.76" x2="34.75" y2="445.76" stroke="#fff" stroke-width="0.7" />
<line x1="30.40" y1="436.82" x2="34.75" y2="436.82" stroke="#fff" stroke-width="0.7" />
<line x1="30.40" y1="427.88" x2="34.75" y2="427.88" stroke="#fff" stroke-width="0.7" />
<text x="25.65" y="430.69" font-size="6.7" fill="#fff" textLength="3.15" lengthAdjust="spacingAndGlyphs" stroke="#fff" stroke-width="0.18">8</text>
<line x1="30.40" y1="418.94" x2="34.75" y2="418.94" stroke="#fff" stroke-width="0.7" />
<text x="22.50" y="421.75" font-size="6.7" fill="#fff" textLength="6.30" lengthAdjust="spacingAndGlyphs" stroke="#fff" stroke-width="0.18">10</text>
<line x1="30.40" y1="410.00" x2="34.75" y2="410.00" stroke="#fff" stroke-width="0.7" />
<text x="22.50" y="412.81" font-size="6.7" fill="#fff" textLength="6.30" lengthAdjust="spacingAndGlyphs" stroke="#fff" stroke-width="0.18">12</text>
<line x1="30.40" y1="401.06" x2="34.75" y2="401.06" stroke="#fff" stroke-width="0.7" />
<line x1="30.40" y1="392.12" x2="34.75" y2="392.12" stroke="#fff" stroke-width="0.7" />
<line x1="71.50" y1="502.80" x2="71.50" y2="506.80" stroke="#fff" stroke-width="0.8" />
<text x="69.92" y="516.61" font-size="6.7" fill="#fff" textLength="3.15" lengthAdjust="spacingAndGlyphs" stroke="#fff" stroke-width="0.18">0</text>
<line x1="104.35" y1="502.80" x2="104.35" y2="506.80" stroke="#fff" stroke-width="0.8" />
<text x="102.77" y="516.61" font-size="6.7" fill="#fff" textLength="3.15" lengthAdjust="spacingAndGlyphs" stroke="#fff" stroke-width="0.18">1</text>
<line x1="137.20" y1="502.80" x2="137.20" y2="506.80" stroke="#fff" stroke-width="0.8" />
<text x="135.62" y="516.61" font-size="6.7" fill="#fff" textLength="3.15" lengthAdjust="spacingAndGlyphs" stroke="#fff" stroke-width="0.18">2</text>
<line x1="170.05" y1="502.80" x2="170.05" y2="506.80" stroke="#fff" stroke-width="0.8" />
<text x="168.48" y="516.61" font-size="6.7" fill="#fff" textLength="3.15" lengthAdjust="spacingAndGlyphs" stroke="#fff" stroke-width="0.18">3</text>
<line x1="202.90" y1="502.80" x2="202.90" y2="506.80" stroke="#fff" stroke-width="0.8" />
<text x="201.33" y="516.61" font-size="6.7" fill="#fff" textLength="3.15" lengthAdjust="spacingAndGlyphs" stroke="#fff" stroke-width="0.18">4</text>
<line x1="235.75" y1="502.80" x2="235.75" y2="506.80" stroke="#fff" stroke-width="0.8" />
<text x="234.18" y="516.61" font-size="6.7" fill="#fff" textLength="3.15" lengthAdjust="spacingAndGlyphs" stroke="#fff" stroke-width="0.18">5</text>
<line x1="268.60" y1="502.80" x2="268.60" y2="506.80" stroke="#fff" stroke-width="0.8" />
<text x="267.03" y="516.61" font-size="6.7" fill="#fff" textLength="3.15" lengthAdjust="spacingAndGlyphs" stroke="#fff" stroke-width="0.18">6</text>
<line x1="301.45" y1="502.80" x2="301.45" y2="506.80" stroke="#fff" stroke-width="0.8" />
<text x="299.88" y="516.61" font-size="6.7" fill="#fff" textLength="3.15" lengthAdjust="spacingAndGlyphs" stroke="#fff" stroke-width="0.18">7</text>
<line x1="334.30" y1="502.80" x2="334.30" y2="506.80" stroke="#fff" stroke-width="0.8" />
<text x="332.73" y="516.61" font-size="6.7" fill="#fff" textLength="3.15" lengthAdjust="spacingAndGlyphs" stroke="#fff" stroke-width="0.18">8</text>
<line x1="367.15" y1="502.80" x2="367.15" y2="506.80" stroke="#fff" stroke-width="0.8" />
<text x="365.58" y="516.61" font-size="6.7" fill="#fff" textLength="3.15" lengthAdjust="spacingAndGlyphs" stroke="#fff" stroke-width="0.18">9</text>
<line x1="400.00" y1="502.80" x2="400.00" y2="506.80" stroke="#fff" stroke-width="0.8" />
<text x="396.85" y="516.61" font-size="6.7" fill="#fff" textLength="6.30" lengthAdjust="spacingAndGlyphs" stroke="#fff" stroke-width="0.18">10</text>
<line x1="432.85" y1="502.80" x2="432.85" y2="506.80" stroke="#fff" stroke-width="0.8" />
<text x="429.70" y="516.61" font-size="6.7" fill="#fff" textLength="6.30" lengthAdjust="spacingAndGlyphs" stroke="#fff" stroke-width="0.18">11</text>
<rect x="8.00" y="364.60" width="48.70" height="24.20" fill="#050505" stroke="#262626" stroke-width="0.6" />
<text x="9.50" y="373.60" font-size="8.6" fill="#fff" font-weight="700" textLength="45.50" lengthAdjust="spacingAndGlyphs" >pH vs. Time</text>
<rect x="9.00" y="375.60" width="38.50" height="12.40" fill="#424242" stroke="#787878" stroke-width="0.7" />
<line x1="37.30" y1="375.60" x2="37.30" y2="388.00" stroke="#787878" stroke-width="0.7" />
<path d="M40.70 380.90 L42.40 382.70 L44.10 380.90" fill="none" stroke="#f0f0f0" stroke-width="1.0" />
<text x="11.00" y="384.48" font-size="6.9" fill="#ececec" textLength="7.20" lengthAdjust="spacingAndGlyphs" >pH</text>
<rect x="9.00" y="506.30" width="38.50" height="12.10" fill="#424242" stroke="#787878" stroke-width="0.7" />
<line x1="37.30" y1="506.30" x2="37.30" y2="518.40" stroke="#787878" stroke-width="0.7" />
<path d="M40.70 511.45 L42.40 513.25 L44.10 511.45" fill="none" stroke="#f0f0f0" stroke-width="1.0" />
<text x="11.00" y="515.03" font-size="6.9" fill="#ececec" textLength="7.20" lengthAdjust="spacingAndGlyphs" >pH</text>
<rect x="446.00" y="506.20" width="39.60" height="12.40" fill="#424242" stroke="#787878" stroke-width="0.7" />
<line x1="474.40" y1="506.20" x2="474.40" y2="518.60" stroke="#787878" stroke-width="0.7" />
<path d="M478.30 511.50 L480.00 513.30 L481.70 511.50" fill="none" stroke="#f0f0f0" stroke-width="1.0" />
<text x="448.00" y="515.08" font-size="6.9" fill="#ececec" textLength="12.20" lengthAdjust="spacingAndGlyphs" >min</text>
<text x="453.60" y="371.98" font-size="6.6" fill="#6e6e6e" font-style="italic" textLength="27.80" lengthAdjust="spacingAndGlyphs" >Auto Scale</text>
<path d="M745.2 453.8 H752 V435.6 H759.2 V417.4 H766 V399.2 H772.8 V380" fill="none" stroke="#9370db" stroke-width="0.8" />
<path d="M526.4 490.2 H738.4 V473 H745.2 V456.4 H752 V438.2 H759.2 V421.6 H766 V405.4 H772.8 V387.2" fill="none" stroke="#1e90ff" stroke-width="1.1" />
<path d="M745.2 453.8 L752.0 435.6 L759.2 417.4 L766.0 399.2 L772.8 380.0" fill="none" stroke="#9370db" stroke-width="0" stroke-linejoin="round"/>
<path d="M743.3 453.8a1.9 1.9 0 1 0 3.8 0a1.9 1.9 0 1 0 -3.8 0ZM750.1 435.6a1.9 1.9 0 1 0 3.8 0a1.9 1.9 0 1 0 -3.8 0ZM757.3 417.4a1.9 1.9 0 1 0 3.8 0a1.9 1.9 0 1 0 -3.8 0ZM764.1 399.2a1.9 1.9 0 1 0 3.8 0a1.9 1.9 0 1 0 -3.8 0ZM770.9 380.0a1.9 1.9 0 1 0 3.8 0a1.9 1.9 0 1 0 -3.8 0Z" fill="#9370db" />
<path d="M738.4 473.0 L745.2 456.4 L752.0 438.2 L759.2 421.6 L766.0 405.4 L772.8 387.2" fill="none" stroke="#1e90ff" stroke-width="0" stroke-linejoin="round"/>
<path d="M736.5 473.0a1.9 1.9 0 1 0 3.8 0a1.9 1.9 0 1 0 -3.8 0ZM743.3 456.4a1.9 1.9 0 1 0 3.8 0a1.9 1.9 0 1 0 -3.8 0ZM750.1 438.2a1.9 1.9 0 1 0 3.8 0a1.9 1.9 0 1 0 -3.8 0ZM757.3 421.6a1.9 1.9 0 1 0 3.8 0a1.9 1.9 0 1 0 -3.8 0ZM764.1 405.4a1.9 1.9 0 1 0 3.8 0a1.9 1.9 0 1 0 -3.8 0ZM770.9 387.2a1.9 1.9 0 1 0 3.8 0a1.9 1.9 0 1 0 -3.8 0Z" fill="#1e90ff" />
<line x1="526.40" y1="360.40" x2="526.40" y2="502.90" stroke="#fff" stroke-width="1.0" />
<line x1="526.40" y1="502.90" x2="975.30" y2="502.90" stroke="#fff" stroke-width="1.0" />
<line x1="522.60" y1="391.70" x2="526.40" y2="391.70" stroke="#fff" stroke-width="0.7" />
<text x="508.60" y="394.51" font-size="6.7" fill="#fff" textLength="12.60" lengthAdjust="spacingAndGlyphs" stroke="#fff" stroke-width="0.18">5350</text>
<line x1="522.60" y1="405.90" x2="526.40" y2="405.90" stroke="#fff" stroke-width="0.7" />
<text x="508.60" y="408.71" font-size="6.7" fill="#fff" textLength="12.60" lengthAdjust="spacingAndGlyphs" stroke="#fff" stroke-width="0.18">5300</text>
<line x1="522.60" y1="420.20" x2="526.40" y2="420.20" stroke="#fff" stroke-width="0.7" />
<text x="508.60" y="423.01" font-size="6.7" fill="#fff" textLength="12.60" lengthAdjust="spacingAndGlyphs" stroke="#fff" stroke-width="0.18">5250</text>
<line x1="522.60" y1="434.20" x2="526.40" y2="434.20" stroke="#fff" stroke-width="0.7" />
<text x="508.60" y="437.01" font-size="6.7" fill="#fff" textLength="12.60" lengthAdjust="spacingAndGlyphs" stroke="#fff" stroke-width="0.18">5200</text>
<line x1="522.60" y1="448.40" x2="526.40" y2="448.40" stroke="#fff" stroke-width="0.7" />
<text x="508.60" y="451.21" font-size="6.7" fill="#fff" textLength="12.60" lengthAdjust="spacingAndGlyphs" stroke="#fff" stroke-width="0.18">5150</text>
<line x1="522.60" y1="462.60" x2="526.40" y2="462.60" stroke="#fff" stroke-width="0.7" />
<text x="508.60" y="465.41" font-size="6.7" fill="#fff" textLength="12.60" lengthAdjust="spacingAndGlyphs" stroke="#fff" stroke-width="0.18">5100</text>
<line x1="522.60" y1="476.90" x2="526.40" y2="476.90" stroke="#fff" stroke-width="0.7" />
<text x="508.60" y="479.71" font-size="6.7" fill="#fff" textLength="12.60" lengthAdjust="spacingAndGlyphs" stroke="#fff" stroke-width="0.18">5050</text>
<line x1="522.60" y1="490.90" x2="526.40" y2="490.90" stroke="#fff" stroke-width="0.7" />
<text x="508.60" y="493.71" font-size="6.7" fill="#fff" textLength="12.60" lengthAdjust="spacingAndGlyphs" stroke="#fff" stroke-width="0.18">5000</text>
<line x1="546.00" y1="502.90" x2="546.00" y2="506.90" stroke="#fff" stroke-width="0.8" />
<text x="544.42" y="516.51" font-size="6.7" fill="#fff" textLength="3.15" lengthAdjust="spacingAndGlyphs" stroke="#fff" stroke-width="0.18">4</text>
<line x1="576.68" y1="502.90" x2="576.68" y2="506.90" stroke="#fff" stroke-width="0.8" />
<text x="575.10" y="516.51" font-size="6.7" fill="#fff" textLength="3.15" lengthAdjust="spacingAndGlyphs" stroke="#fff" stroke-width="0.18">5</text>
<line x1="607.36" y1="502.90" x2="607.36" y2="506.90" stroke="#fff" stroke-width="0.8" />
<text x="605.78" y="516.51" font-size="6.7" fill="#fff" textLength="3.15" lengthAdjust="spacingAndGlyphs" stroke="#fff" stroke-width="0.18">6</text>
<line x1="638.04" y1="502.90" x2="638.04" y2="506.90" stroke="#fff" stroke-width="0.8" />
<text x="636.46" y="516.51" font-size="6.7" fill="#fff" textLength="3.15" lengthAdjust="spacingAndGlyphs" stroke="#fff" stroke-width="0.18">7</text>
<line x1="668.72" y1="502.90" x2="668.72" y2="506.90" stroke="#fff" stroke-width="0.8" />
<text x="667.14" y="516.51" font-size="6.7" fill="#fff" textLength="3.15" lengthAdjust="spacingAndGlyphs" stroke="#fff" stroke-width="0.18">8</text>
<line x1="699.40" y1="502.90" x2="699.40" y2="506.90" stroke="#fff" stroke-width="0.8" />
<text x="697.82" y="516.51" font-size="6.7" fill="#fff" textLength="3.15" lengthAdjust="spacingAndGlyphs" stroke="#fff" stroke-width="0.18">9</text>
<line x1="730.08" y1="502.90" x2="730.08" y2="506.90" stroke="#fff" stroke-width="0.8" />
<text x="726.93" y="516.51" font-size="6.7" fill="#fff" textLength="6.30" lengthAdjust="spacingAndGlyphs" stroke="#fff" stroke-width="0.18">10</text>
<line x1="760.76" y1="502.90" x2="760.76" y2="506.90" stroke="#fff" stroke-width="0.8" />
<text x="757.61" y="516.51" font-size="6.7" fill="#fff" textLength="6.30" lengthAdjust="spacingAndGlyphs" stroke="#fff" stroke-width="0.18">11</text>
<line x1="791.44" y1="502.90" x2="791.44" y2="506.90" stroke="#fff" stroke-width="0.8" />
<text x="788.29" y="516.51" font-size="6.7" fill="#fff" textLength="6.30" lengthAdjust="spacingAndGlyphs" stroke="#fff" stroke-width="0.18">12</text>
<line x1="822.12" y1="502.90" x2="822.12" y2="506.90" stroke="#fff" stroke-width="0.8" />
<text x="818.97" y="516.51" font-size="6.7" fill="#fff" textLength="6.30" lengthAdjust="spacingAndGlyphs" stroke="#fff" stroke-width="0.18">13</text>
<line x1="852.80" y1="502.90" x2="852.80" y2="506.90" stroke="#fff" stroke-width="0.8" />
<text x="849.65" y="516.51" font-size="6.7" fill="#fff" textLength="6.30" lengthAdjust="spacingAndGlyphs" stroke="#fff" stroke-width="0.18">14</text>
<line x1="883.48" y1="502.90" x2="883.48" y2="506.90" stroke="#fff" stroke-width="0.8" />
<text x="880.33" y="516.51" font-size="6.7" fill="#fff" textLength="6.30" lengthAdjust="spacingAndGlyphs" stroke="#fff" stroke-width="0.18">15</text>
<line x1="914.16" y1="502.90" x2="914.16" y2="506.90" stroke="#fff" stroke-width="0.8" />
<text x="911.01" y="516.51" font-size="6.7" fill="#fff" textLength="6.30" lengthAdjust="spacingAndGlyphs" stroke="#fff" stroke-width="0.18">16</text>
<rect x="493.20" y="363.60" width="59.60" height="25.80" fill="#050505" stroke="#262626" stroke-width="0.6" />
<text x="495.00" y="373.90" font-size="8.6" fill="#fff" font-weight="700" textLength="56.00" lengthAdjust="spacingAndGlyphs" >Vol-A vs. Time</text>
<rect x="495.00" y="375.60" width="39.00" height="12.40" fill="#424242" stroke="#787878" stroke-width="0.7" />
<line x1="522.70" y1="375.60" x2="522.70" y2="388.00" stroke="#787878" stroke-width="0.7" />
<path d="M526.65 380.90 L528.35 382.70 L530.05 380.90" fill="none" stroke="#f0f0f0" stroke-width="1.0" />
<text x="496.60" y="384.48" font-size="6.9" fill="#ececec" textLength="17.40" lengthAdjust="spacingAndGlyphs" >Vol-A</text>
<rect x="495.00" y="506.20" width="39.00" height="12.40" fill="#424242" stroke="#787878" stroke-width="0.7" />
<line x1="522.70" y1="506.20" x2="522.70" y2="518.60" stroke="#787878" stroke-width="0.7" />
<path d="M526.65 511.50 L528.35 513.30 L530.05 511.50" fill="none" stroke="#f0f0f0" stroke-width="1.0" />
<text x="496.80" y="515.08" font-size="6.9" fill="#ececec" textLength="7.20" lengthAdjust="spacingAndGlyphs" >µL</text>
<rect x="932.00" y="506.20" width="39.00" height="12.50" fill="#424242" stroke="#787878" stroke-width="0.7" />
<line x1="959.30" y1="506.20" x2="959.30" y2="518.70" stroke="#787878" stroke-width="0.7" />
<path d="M963.45 511.55 L965.15 513.35 L966.85 511.55" fill="none" stroke="#f0f0f0" stroke-width="1.0" />
<text x="933.60" y="515.13" font-size="6.9" fill="#ececec" textLength="12.40" lengthAdjust="spacingAndGlyphs" >min</text>
<text x="939.50" y="371.98" font-size="6.6" fill="#7a7a7a" font-style="italic" textLength="27.50" lengthAdjust="spacingAndGlyphs" >Auto Scale</text>
<line x1="490.30" y1="196.30" x2="490.30" y2="522.60" stroke="#a8a8a8" stroke-width="0.9" />
<line x1="5.00" y1="359.90" x2="975.30" y2="359.90" stroke="#a8a8a8" stroke-width="0.9" />
<g opacity="0.44">
<g>
<path d="M353.3 172.8 L641 271.4 L353.3 370 Z M411 206 L411 329.5 L600 270.6 Z" fill="url(#gWm)" fill-rule="evenodd"/>
<rect x="278.00" y="265.30" width="75.30" height="10.00" fill="#9c9c9c" />
<path d="M601.4 258.6 L537.6 289.4 L598 287 L640 276.8 L598 276.8 Z" fill="#8c8c8c" />
<path d="M590 271 L601.4 258.6 L612 265.8 L723.5 265.8 L723.5 276.8 L583 276.8 Z" fill="#b4b4b4" />
</g>
<g font-style="italic" font-weight="700" stroke-linejoin="round" font-family="DejaVu Sans, Liberation Sans, sans-serif">
<text x="291.5" y="251.8" font-size="46" fill="#0776e3" stroke="#0776e3" stroke-width="3" filter="url(#fOl)" textLength="357" lengthAdjust="spacingAndGlyphs">Physiologic</text>
<text x="318.5" y="319" font-size="47.5" fill="#f52d24" stroke="#f52d24" stroke-width="3" filter="url(#fOl)" textLength="390" lengthAdjust="spacingAndGlyphs">Instruments</text>
</g>
</g>
<line x1="74.00" y1="196.30" x2="74.00" y2="338.60" stroke="#84c441" stroke-width="1.6"/>
<line x1="79.40" y1="196.30" x2="79.40" y2="338.60" stroke="#7aba3c" stroke-width="0.9"/>
<line x1="81.60" y1="196.30" x2="81.60" y2="338.60" stroke="#7aba3c" stroke-width="0.9"/>
<line x1="400.40" y1="196.30" x2="400.40" y2="338.60" stroke="#7aba3c" stroke-width="0.9"/>
<line x1="440.60" y1="196.30" x2="440.60" y2="338.60" stroke="#7aba3c" stroke-width="0.9"/>
<line x1="451.00" y1="196.30" x2="451.00" y2="338.60" stroke="#7aba3c" stroke-width="0.9"/>
<rect x="69.80" y="330.40" width="7.6" height="8.2" rx="1.8" fill="#f6f032"/>
<rect x="74.80" y="330.40" width="7.6" height="8.2" rx="1.8" fill="#f6f032"/>
<rect x="78.40" y="330.40" width="7.6" height="8.2" rx="1.8" fill="#f6f032"/>
<rect x="396.60" y="330.40" width="7.6" height="8.2" rx="1.8" fill="#f6f032"/>
<rect x="436.80" y="330.40" width="7.6" height="8.2" rx="1.8" fill="#f6f032"/>
<rect x="447.20" y="330.40" width="7.6" height="8.2" rx="1.8" fill="#f6f032"/>
<line x1="562.50" y1="196.30" x2="562.50" y2="338.60" stroke="#a6cf33" stroke-width="1.6"/>
<line x1="567.70" y1="196.30" x2="567.70" y2="338.60" stroke="#7aba3c" stroke-width="1.0"/>
<line x1="570.30" y1="196.30" x2="570.30" y2="338.60" stroke="#7aba3c" stroke-width="1.0"/>
<line x1="887.20" y1="196.30" x2="887.20" y2="338.60" stroke="#7aba3c" stroke-width="0.9"/>
<line x1="926.80" y1="196.30" x2="926.80" y2="338.60" stroke="#7aba3c" stroke-width="0.9"/>
<line x1="936.90" y1="196.30" x2="936.90" y2="338.60" stroke="#7aba3c" stroke-width="0.9"/>
<rect x="558.20" y="330.40" width="7.6" height="8.2" rx="1.8" fill="#f6f032"/>
<rect x="562.60" y="330.40" width="7.6" height="8.2" rx="1.8" fill="#f6f032"/>
<rect x="566.80" y="330.40" width="7.6" height="8.2" rx="1.8" fill="#f6f032"/>
<rect x="883.40" y="330.40" width="7.6" height="8.2" rx="1.8" fill="#f6f032"/>
<rect x="923.00" y="330.40" width="7.6" height="8.2" rx="1.8" fill="#f6f032"/>
<rect x="933.10" y="330.40" width="7.6" height="8.2" rx="1.8" fill="#f6f032"/>
<line x1="71.30" y1="360.40" x2="71.30" y2="502.80" stroke="#b2d830" stroke-width="1.5"/>
<line x1="76.90" y1="360.40" x2="76.90" y2="502.80" stroke="#4f8a2e" stroke-width="1.4"/>
<line x1="79.10" y1="360.40" x2="79.10" y2="502.80" stroke="#4f8a2e" stroke-width="1.4"/>
<line x1="402.40" y1="360.40" x2="402.40" y2="502.80" stroke="#7aba3c" stroke-width="1.0"/>
<line x1="443.00" y1="360.40" x2="443.00" y2="502.80" stroke="#4f8f30" stroke-width="1.3"/>
<line x1="453.50" y1="360.40" x2="453.50" y2="502.80" stroke="#6bb03c" stroke-width="1.9"/>
<rect x="67.20" y="494.60" width="7.6" height="8.2" rx="1.8" fill="#f6f032"/>
<rect x="71.80" y="494.60" width="7.6" height="8.2" rx="1.8" fill="#f6f032"/>
<rect x="75.60" y="494.60" width="7.6" height="8.2" rx="1.8" fill="#f6f032"/>
<rect x="398.50" y="494.60" width="7.6" height="8.2" rx="1.8" fill="#f6f032"/>
<rect x="439.50" y="494.60" width="7.6" height="8.2" rx="1.8" fill="#f6f032"/>
<rect x="449.80" y="494.60" width="7.6" height="8.2" rx="1.8" fill="#f6f032"/>
<line x1="732.00" y1="360.40" x2="732.00" y2="502.90" stroke="#5f9a35" stroke-width="1.5"/>
<line x1="770.00" y1="360.40" x2="770.00" y2="502.90" stroke="#5f9a35" stroke-width="1.5"/>
<line x1="779.50" y1="360.40" x2="779.50" y2="502.90" stroke="#7aba3c" stroke-width="1.5"/>
<rect x="728.20" y="494.70" width="7.6" height="8.2" rx="1.8" fill="#f6f032"/>
<rect x="766.20" y="494.70" width="7.6" height="8.2" rx="1.8" fill="#f6f032"/>
<rect x="775.70" y="494.70" width="7.6" height="8.2" rx="1.8" fill="#f6f032"/>
<circle cx="476.80" cy="218.30" r="8.00" fill="#c9c9c9"/>
<circle cx="476.80" cy="218.30" r="6.90" fill="none" stroke="#b0b0b0" stroke-width="0.5"/>
<path d="M474.60 217.50 V214.70 a2.4 2.5 0 0 1 4.8 0 V215.70" fill="none" stroke="#6a6a6a" stroke-width="1.2" />
<rect x="472.10" y="217.20" width="9.40" height="6.00" fill="#6a6a6a" rx="0.7" />
<text x="476.80" y="221.88" font-size="5.6" fill="#e4e4e4" font-weight="700" text-anchor="middle" >xy</text>
<circle cx="962.00" cy="218.30" r="8.20" fill="#ffffff"/>
<circle cx="962.00" cy="218.30" r="7.00" fill="none" stroke="#d0d0d0" stroke-width="0.5"/>
<path d="M959.50 217.50 V214.90 a2.5 2.6 0 0 1 5 0 V217.50" fill="none" stroke="#2e2e2e" stroke-width="1.3" />
<rect x="957.30" y="217.20" width="9.40" height="6.00" fill="#2e2e2e" rx="0.7" />
<text x="962.00" y="221.88" font-size="5.6" fill="#ffffff" font-weight="700" text-anchor="middle" >xy</text>
<circle cx="476.40" cy="382.10" r="8.20" fill="#ffffff"/>
<circle cx="476.40" cy="382.10" r="7.00" fill="none" stroke="#d0d0d0" stroke-width="0.5"/>
<path d="M473.90 381.30 V378.70 a2.5 2.6 0 0 1 5 0 V381.30" fill="none" stroke="#2e2e2e" stroke-width="1.3" />
<rect x="471.70" y="381.00" width="9.40" height="6.00" fill="#2e2e2e" rx="0.7" />
<text x="476.40" y="385.68" font-size="5.6" fill="#ffffff" font-weight="700" text-anchor="middle" >xy</text>
<circle cx="962.40" cy="381.80" r="8.00" fill="#c9c9c9"/>
<circle cx="962.40" cy="381.80" r="6.90" fill="none" stroke="#b0b0b0" stroke-width="0.5"/>
<path d="M960.20 381.00 V378.20 a2.4 2.5 0 0 1 4.8 0 V379.20" fill="none" stroke="#6a6a6a" stroke-width="1.2" />
<rect x="957.70" y="380.70" width="9.40" height="6.00" fill="#6a6a6a" rx="0.7" />
<text x="962.40" y="385.38" font-size="5.6" fill="#e4e4e4" font-weight="700" text-anchor="middle" >xy</text>
</svg>
</body></html>
